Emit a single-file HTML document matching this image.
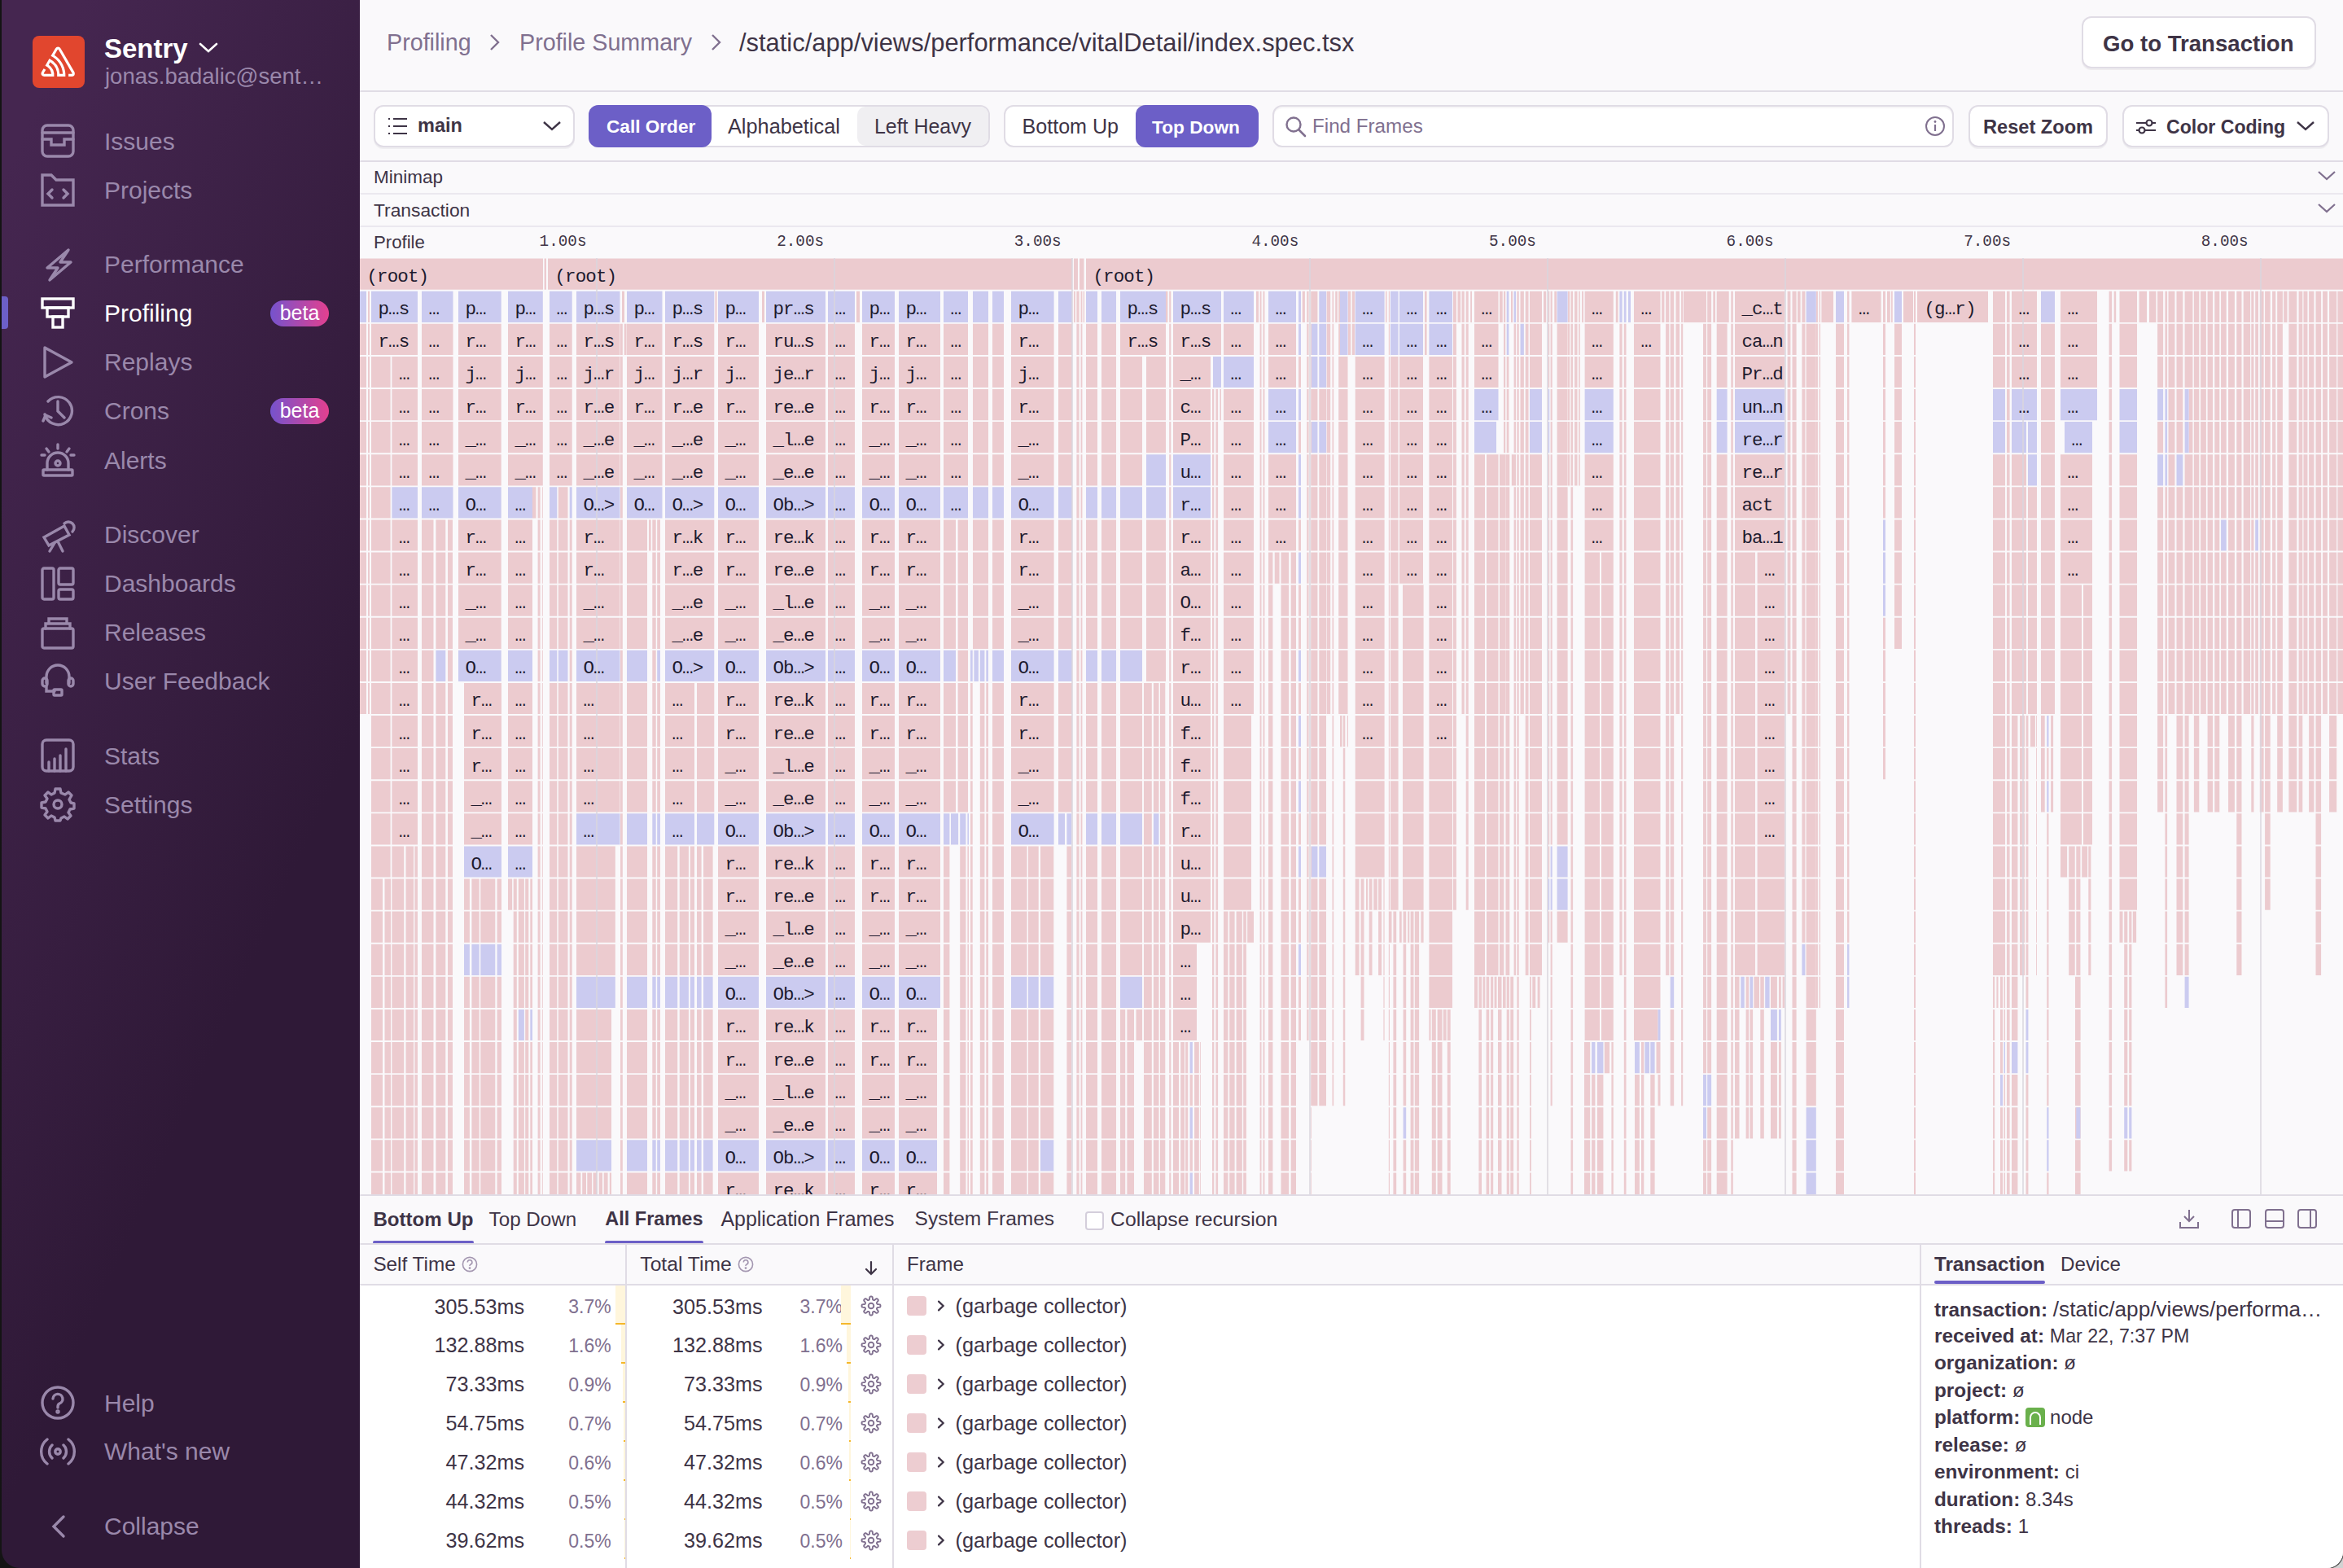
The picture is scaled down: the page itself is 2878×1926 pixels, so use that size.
<!DOCTYPE html><html><head><meta charset="utf-8"><style>
*{box-sizing:border-box;margin:0;padding:0}
html,body{width:2878px;height:1926px;overflow:hidden;background:#141414}
body{font-family:"Liberation Sans",sans-serif;position:relative}
.abs{position:absolute;white-space:nowrap}
#sb{position:absolute;left:2px;top:0;width:440px;height:1926px;border-bottom-left-radius:22px;
 background:linear-gradient(294.17deg,#2f1937 35.57%,#452650 92.42%,#452650 92.42%);overflow:hidden}
#main{position:absolute;left:442px;top:0;width:2436px;height:1926px;background:#faf9fb;border-bottom-right-radius:20px;overflow:hidden;box-shadow:1px 1px 0 0 #555}
.nav{position:absolute;left:126px;font-size:30px;color:#9a88ab;line-height:1}
.ico{position:absolute;left:47px;width:44px;height:44px;overflow:visible}
.beta{position:absolute;left:330px;width:72px;height:32px;border-radius:16px;background:linear-gradient(90deg,#7553cd,#e3408f);color:#fff;font-size:25px;text-align:center;line-height:31px}
.btn{position:absolute;top:129px;height:52px;border:2px solid #e0dce5;border-radius:12px;background:#fff}
.t{position:absolute;white-space:nowrap;line-height:1}
</style></head><body><div id="sb"><div class="abs" style="left:38px;top:44px;width:64px;height:64px;border-radius:8px;background:#e1462e"></div><svg class="abs" style="left:38px;top:44px" width="64" height="64" viewBox="0 0 64 64"><g transform="translate(10.6 13.6) scale(0.825)"><path fill="#fff" d="M29,2.26a4.67,4.67,0,0,0-8,0L14.42,13.53A32.21,32.21,0,0,1,32.17,40.19H27.55A27.68,27.68,0,0,0,12.09,17.47L6,28a15.92,15.92,0,0,1,9.23,12.17H4.62A.76.76,0,0,1,4,39.06l2.94-5a10.74,10.74,0,0,0-3.36-1.9l-2.91,5a4.54,4.54,0,0,0,1.69,6.24A4.66,4.66,0,0,0,4.62,44H19.15a19.4,19.4,0,0,0-8-17.31l2.31-4A23.87,23.87,0,0,1,23.76,44H36.07a35.88,35.88,0,0,0-16.41-31.8l4.67-8a.77.77,0,0,1,1.05-.27c.53.29,20.29,34.77,20.66,35.17a.76.76,0,0,1-.68,1.13H40.6q.09,1.910,0,3.81h4.78A4.59,4.59,0,0,0,50,39.43a4.49,4.49,0,0,0-.62-2.28Z"/></g></svg><div class="t" style="left:126px;top:42.8px;font-size:33px;font-weight:700;color:#fff">Sentry</div><svg class="abs" style="left:242px;top:52px" width="24" height="14" viewBox="0 0 24 14"><path d="M2 2 L12 11 L22 2" fill="none" stroke="#fff" stroke-width="2.6" stroke-linecap="round"/></svg><div class="t" style="left:127px;top:80px;font-size:27.5px;color:#9a88ab">jonas.badalic@sent…</div><div class="nav" style="top:159.0px;color:#9a88ab">Issues</div><svg class="ico" style="top:151.4px" viewBox="0 0 44 44" fill="none" stroke="#9a88ab" stroke-width="3.4" stroke-linecap="round"><rect x="3" y="3" width="38" height="38" rx="6"/><path d="M3 12 H41 M3 20 H14 V27 H30 V20 H41"/></svg><div class="nav" style="top:219.0px;color:#9a88ab">Projects</div><svg class="ico" style="top:211.4px" viewBox="0 0 44 44" fill="none" stroke="#9a88ab" stroke-width="3.4" stroke-linecap="round"><path d="M3 4 H14 L20 10 H41 V41 H3 Z"/><path d="M15 22 L10 27 L15 32 M29 22 L34 27 L29 32"/></svg><div class="nav" style="top:310.2px;color:#9a88ab">Performance</div><svg class="ico" style="top:302.6px" viewBox="0 0 44 44" fill="none" stroke="#9a88ab" stroke-width="3.4" stroke-linecap="round"><path d="M35 4 L9 26 L22 26 L12 41 L38 19 L25 19 Z" stroke-linejoin="round"/></svg><div class="nav" style="top:370.4px;color:#fff">Profiling</div><svg class="ico" style="top:362.8px" viewBox="0 0 44 44" fill="none" stroke="#fff" stroke-width="3.4" stroke-linecap="round"><rect x="3" y="4" width="38" height="11"/><rect x="9" y="15" width="26" height="11"/><rect x="16" y="26" width="12" height="13"/></svg><div class="beta" style="top:368.8px">beta</div><div class="nav" style="top:430.2px;color:#9a88ab">Replays</div><svg class="ico" style="top:422.6px" viewBox="0 0 44 44" fill="none" stroke="#9a88ab" stroke-width="3.4" stroke-linecap="round"><path d="M6 4 L39 22 L6 40 Z" stroke-linejoin="round"/></svg><div class="nav" style="top:490.3px;color:#9a88ab">Crons</div><svg class="ico" style="top:482.7px" viewBox="0 0 44 44" fill="none" stroke="#9a88ab" stroke-width="3.4" stroke-linecap="round"><path d="M6 26 A17 17 0 1 0 10 10"/><path d="M4 34 L7 27 L14 30"/><path d="M22 10 V22 L30 30"/></svg><div class="beta" style="top:488.7px">beta</div><div class="nav" style="top:550.6px;color:#9a88ab">Alerts</div><svg class="ico" style="top:543.0px" viewBox="0 0 44 44" fill="none" stroke="#9a88ab" stroke-width="3.4" stroke-linecap="round"><rect x="4" y="34" width="36" height="7" rx="1"/><path d="M9 34 V26 A13 13 0 0 1 35 26 V34"/><circle cx="22" cy="26" r="3"/><path d="M22 3 V8 M8 8 L11 12 M36 8 L33 12 M2 16 H6 M38 16 H42"/></svg><div class="nav" style="top:642.1px;color:#9a88ab">Discover</div><svg class="ico" style="top:634.5px" viewBox="0 0 44 44" fill="none" stroke="#9a88ab" stroke-width="3.4" stroke-linecap="round"><path d="M5 25 L30 11 L36 22 L11 35 Z"/><path d="M30 8 A6 6 0 0 1 40 18"/><path d="M18 32 L12 42 M22 30 L28 42"/></svg><div class="nav" style="top:702.1px;color:#9a88ab">Dashboards</div><svg class="ico" style="top:694.5px" viewBox="0 0 44 44" fill="none" stroke="#9a88ab" stroke-width="3.4" stroke-linecap="round"><rect x="3" y="3" width="14" height="38" rx="2"/><rect x="23" y="3" width="18" height="20" rx="2"/><rect x="23" y="29" width="18" height="12" rx="2"/></svg><div class="nav" style="top:762.3px;color:#9a88ab">Releases</div><svg class="ico" style="top:754.7px" viewBox="0 0 44 44" fill="none" stroke="#9a88ab" stroke-width="3.4" stroke-linecap="round"><rect x="3" y="17" width="38" height="24" rx="2"/><path d="M7 17 V11 H37 V17 M11 11 V5 H33 V11"/></svg><div class="nav" style="top:822.4px;color:#9a88ab">User Feedback</div><svg class="ico" style="top:814.8px" viewBox="0 0 44 44" fill="none" stroke="#9a88ab" stroke-width="3.4" stroke-linecap="round"><path d="M8 24 V16 A14 14 0 0 1 36 16 V24"/><rect x="3" y="18" width="6" height="10" rx="3"/><rect x="35" y="18" width="6" height="10" rx="3"/><path d="M8 28 V34 H18"/><rect x="17" y="32" width="10" height="7" rx="1"/></svg><div class="nav" style="top:913.5px;color:#9a88ab">Stats</div><svg class="ico" style="top:905.9px" viewBox="0 0 44 44" fill="none" stroke="#9a88ab" stroke-width="3.4" stroke-linecap="round"><rect x="3" y="3" width="38" height="38" rx="5"/><path d="M11 41 V30 M18 41 V26 M25 41 V22 M32 41 V14"/></svg><div class="nav" style="top:973.5px;color:#9a88ab">Settings</div><svg class="ico" style="top:965.9px" viewBox="0 0 44 44" fill="none" stroke="#9a88ab" stroke-width="3.4" stroke-linecap="round"><circle cx="22" cy="22" r="5"/><path d="M19 3 H25 L26 8 L31 10 L35 7 L39 11 L36 16 L38 20 L42 21 V27 L37 28 L35 32 L38 36 L34 40 L30 37 L26 39 L25 42 H19 L18 38 L14 36 L10 39 L6 35 L9 31 L7 27 L2 26 V20 L7 19 L9 15 L6 11 L10 7 L14 10 L18 8 Z" stroke-linejoin="round"/></svg><div class="nav" style="top:1708.6px;color:#9a88ab">Help</div><svg class="ico" style="top:1701.0px" viewBox="0 0 44 44" fill="none" stroke="#9a88ab" stroke-width="3.4" stroke-linecap="round"><circle cx="22" cy="22" r="19"/><path d="M16 17 A6 6 0 1 1 24 23 Q22 24 22 27 V28"/><circle cx="22" cy="33" r="1" fill="#9a88ab"/></svg><div class="nav" style="top:1768.2px;color:#9a88ab">What's new</div><svg class="ico" style="top:1760.6px" viewBox="0 0 44 44" fill="none" stroke="#9a88ab" stroke-width="3.4" stroke-linecap="round"><circle cx="22" cy="22" r="3.2"/><path d="M15 14 A11 11 0 0 0 15 30 M29 14 A11 11 0 0 1 29 30 M9 7 A19 19 0 0 0 9 37 M35 7 A19 19 0 0 1 35 37"/></svg><div class="nav" style="top:1860.4px;color:#9a88ab">Collapse</div><svg class="ico" style="top:1852.8px" viewBox="0 0 44 44" fill="none" stroke="#9a88ab" stroke-width="3.4" stroke-linecap="round"><path d="M29 10 L17 22 L29 34"/></svg><div class="abs" style="left:0px;top:364px;width:8px;height:40px;border-radius:0 4px 4px 0;background:#6c5fc7"></div></div><div class="abs" style="left:2840px;top:1880px;width:38px;height:46px;background:#d2d2d2"></div><div id="main"><div class="t" style="left:33px;top:38px;font-size:28.7px;color:#80708f">Profiling</div><svg class="abs" style="left:158px;top:40px" width="16" height="24" viewBox="0 0 16 24"><path d="M3 3 L12 12 L3 21" fill="none" stroke="#80708f" stroke-width="2.4"/></svg><div class="t" style="left:196px;top:38px;font-size:28.7px;color:#80708f">Profile Summary</div><svg class="abs" style="left:430px;top:40px" width="16" height="24" viewBox="0 0 16 24"><path d="M3 3 L12 12 L3 21" fill="none" stroke="#80708f" stroke-width="2.4"/></svg><div class="t" style="left:466px;top:38px;font-size:30.9px;color:#3e3446">/static/app/views/performance/vitalDetail/index.spec.tsx</div><div class="btn" style="left:2115px;top:20px;width:288px;height:64px;border-radius:12px;box-shadow:0 2px 0 rgba(43,34,51,.06)"></div><div class="t" style="left:2141px;top:40px;font-size:27.6px;font-weight:700;color:#3e3446">Go to Transaction</div><div class="abs" style="left:0;top:111px;width:2436px;height:2px;background:#e0dce5"></div><div class="btn" style="left:17px;width:247px;box-shadow:0 2px 0 rgba(43,34,51,.05)"></div><svg class="abs" style="left:34px;top:143px" width="26" height="24" viewBox="0 0 26 24"><path d="M7 3 H24 M7 12 H24 M7 21 H24" stroke="#3e3446" stroke-width="2.2"/><path d="M1 3 H3 M1 12 H3 M1 21 H3" stroke="#3e3446" stroke-width="2.2"/></svg><div class="t" style="left:71px;top:143px;font-size:23.5px;font-weight:700;color:#3e3446">main</div><svg class="abs" style="left:224px;top:148px" width="24" height="14" viewBox="0 0 24 14"><path d="M2 2 L12 11 L22 2" fill="none" stroke="#3e3446" stroke-width="2.4"/></svg><div class="btn" style="left:281px;width:493px"></div><div class="abs" style="left:611px;top:131px;width:161px;height:48px;background:#f0eff2;border-radius:10px"></div><div class="abs" style="left:281px;top:129px;width:151px;height:52px;background:#6c5fc7;border-radius:12px"></div><div class="t" style="left:303px;top:145px;font-size:22.6px;font-weight:700;color:#fff">Call Order</div><div class="t" style="left:452px;top:143px;font-size:25.3px;color:#3e3446">Alphabetical</div><div class="t" style="left:632px;top:143px;font-size:24.9px;color:#3e3446">Left Heavy</div><div class="btn" style="left:791px;width:313px"></div><div class="abs" style="left:953px;top:129px;width:151px;height:52px;background:#6c5fc7;border-radius:12px"></div><div class="t" style="left:813.5px;top:143px;font-size:25.1px;color:#3e3446">Bottom Up</div><div class="t" style="left:973px;top:145px;font-size:22.7px;font-weight:700;color:#fff">Top Down</div><div class="btn" style="left:1121px;width:837px;box-shadow:inset 0 2px 1px rgba(43,34,51,.04)"></div><svg class="abs" style="left:1136px;top:142px" width="28" height="28" viewBox="0 0 28 28"><circle cx="11" cy="11" r="8.5" fill="none" stroke="#80708f" stroke-width="2.4"/><path d="M17.5 17.5 L25 25" stroke="#80708f" stroke-width="2.6" stroke-linecap="round"/></svg><div class="t" style="left:1170px;top:143px;font-size:24.2px;color:#80708f">Find Frames</div><svg class="abs" style="left:1922px;top:142px" width="26" height="26" viewBox="0 0 26 26"><circle cx="13" cy="13" r="11" fill="none" stroke="#80708f" stroke-width="2"/><path d="M13 11 V19" stroke="#80708f" stroke-width="2.2"/><circle cx="13" cy="7.5" r="1.4" fill="#80708f"/></svg><div class="btn" style="left:1976px;width:171px;box-shadow:0 2px 0 rgba(43,34,51,.05)"></div><div class="t" style="left:1994px;top:145px;font-size:23.6px;font-weight:700;color:#3e3446">Reset Zoom</div><div class="btn" style="left:2165px;width:254px;box-shadow:0 2px 0 rgba(43,34,51,.05)"></div><svg class="abs" style="left:2180px;top:143px" width="28" height="24" viewBox="0 0 28 24"><path d="M2 8 H26 M2 17 H26" stroke="#3e3446" stroke-width="2.2"/><circle cx="18" cy="8" r="3.5" fill="#fff" stroke="#3e3446" stroke-width="2.2"/><circle cx="9" cy="17" r="3.5" fill="#fff" stroke="#3e3446" stroke-width="2.2"/></svg><div class="t" style="left:2219px;top:145px;font-size:23.1px;font-weight:700;color:#3e3446">Color Coding</div><svg class="abs" style="left:2378px;top:148px" width="24" height="14" viewBox="0 0 24 14"><path d="M2 2 L12 11 L22 2" fill="none" stroke="#3e3446" stroke-width="2.4"/></svg><div class="abs" style="left:0;top:197px;width:2436px;height:2px;background:#e0dce5"></div><div class="t" style="left:17px;top:207px;font-size:22.5px;color:#3e3446">Minimap</div><div class="abs" style="left:0;top:237px;width:2436px;height:2px;background:#ebe8ef"></div><div class="t" style="left:17px;top:247px;font-size:22.8px;color:#3e3446">Transaction</div><div class="abs" style="left:0;top:277px;width:2436px;height:2px;background:#ebe8ef"></div><svg class="abs" style="left:2404px;top:209px" width="24" height="14" viewBox="0 0 24 14"><path d="M2 2 L12 11 L22 2" fill="none" stroke="#80708f" stroke-width="2.2"/></svg><svg class="abs" style="left:2404px;top:249px" width="24" height="14" viewBox="0 0 24 14"><path d="M2 2 L12 11 L22 2" fill="none" stroke="#80708f" stroke-width="2.2"/></svg><div class="t" style="left:17px;top:287px;font-size:22.2px;color:#3e3446">Profile</div><div class="t" style="left:220.6px;top:288px;font-family:'Liberation Mono',monospace;font-size:19.3px;color:#3e3446">1.00s</div><div class="t" style="left:512.2px;top:288px;font-family:'Liberation Mono',monospace;font-size:19.3px;color:#3e3446">2.00s</div><div class="t" style="left:803.8px;top:288px;font-family:'Liberation Mono',monospace;font-size:19.3px;color:#3e3446">3.00s</div><div class="t" style="left:1095.4px;top:288px;font-family:'Liberation Mono',monospace;font-size:19.3px;color:#3e3446">4.00s</div><div class="t" style="left:1387.0px;top:288px;font-family:'Liberation Mono',monospace;font-size:19.3px;color:#3e3446">5.00s</div><div class="t" style="left:1678.6px;top:288px;font-family:'Liberation Mono',monospace;font-size:19.3px;color:#3e3446">6.00s</div><div class="t" style="left:1970.2px;top:288px;font-family:'Liberation Mono',monospace;font-size:19.3px;color:#3e3446">7.00s</div><div class="t" style="left:2261.8px;top:288px;font-family:'Liberation Mono',monospace;font-size:19.3px;color:#3e3446">8.00s</div><svg class="abs" style="left:0;top:0" width="2436" height="1926" viewBox="442 0 2436 1926"><path fill="#eccbcf" d="M442.0 317.6h225.0v38.2h-225.0zM668.6 317.6h2.4v38.2h-2.4zM673.0 317.6h644.0v38.2h-644.0zM1319.0 317.6h5.0v38.2h-5.0zM1326.0 317.6h5.5v38.2h-5.5zM1334.0 317.6h1544.0v38.2h-1544.0zM442.0 397.8h8.0v38.2h-8.0zM442.0 437.9h8.0v38.2h-8.0zM442.0 478.0h8.0v38.2h-8.0zM442.0 518.1h8.0v38.2h-8.0zM442.0 558.2h8.0v38.2h-8.0zM442.0 598.3h8.0v38.2h-8.0zM442.0 638.4h8.0v38.2h-8.0zM442.0 678.5h8.0v38.2h-8.0zM442.0 718.6h8.0v38.2h-8.0zM442.0 758.7h8.0v38.2h-8.0zM442.0 798.8h8.0v38.2h-8.0zM442.0 838.9h8.0v38.2h-8.0zM452.0 357.7h2.0v38.2h-2.0zM452.0 397.8h2.0v38.2h-2.0zM452.0 437.9h2.0v38.2h-2.0zM452.0 478.0h2.0v38.2h-2.0zM452.0 518.1h2.0v38.2h-2.0zM452.0 558.2h2.0v38.2h-2.0zM452.0 598.3h2.0v38.2h-2.0zM452.0 638.4h2.0v38.2h-2.0zM452.0 678.5h2.0v38.2h-2.0zM452.0 718.6h2.0v38.2h-2.0zM452.0 758.7h2.0v38.2h-2.0zM452.0 798.8h2.0v38.2h-2.0zM452.0 838.9h2.0v38.2h-2.0zM456.0 397.8h57.0v38.2h-57.0zM456.0 437.9h23.6v38.2h-23.6zM456.0 478.0h23.6v38.2h-23.6zM456.0 518.1h23.6v38.2h-23.6zM456.0 558.2h23.6v38.2h-23.6zM456.0 598.3h23.6v38.2h-23.6zM456.0 638.4h23.6v38.2h-23.6zM456.0 678.5h23.6v38.2h-23.6zM456.0 718.6h23.6v38.2h-23.6zM456.0 758.7h23.6v38.2h-23.6zM456.0 798.8h23.6v38.2h-23.6zM456.0 838.9h23.6v38.2h-23.6zM456.0 879.0h23.6v38.2h-23.6zM456.0 919.1h23.6v38.2h-23.6zM456.0 959.2h23.6v38.2h-23.6zM456.0 999.3h23.6v38.2h-23.6zM456.0 1039.4h23.6v38.2h-23.6zM456.0 1079.5h14.0v38.2h-14.0zM456.0 1119.6h14.0v38.2h-14.0zM456.0 1159.7h14.0v38.2h-14.0zM456.0 1199.8h14.0v38.2h-14.0zM456.0 1239.9h14.0v38.2h-14.0zM456.0 1280.0h14.0v38.2h-14.0zM456.0 1320.1h14.0v38.2h-14.0zM456.0 1360.2h14.0v38.2h-14.0zM456.0 1400.3h14.0v38.2h-14.0zM456.0 1440.4h14.0v26.6h-14.0zM472.5 1079.5h7.5v38.2h-7.5zM472.5 1119.6h7.5v38.2h-7.5zM472.5 1159.7h7.5v38.2h-7.5zM472.5 1199.8h7.5v38.2h-7.5zM472.5 1239.9h7.5v38.2h-7.5zM472.5 1280.0h7.5v38.2h-7.5zM472.5 1320.1h7.5v38.2h-7.5zM472.5 1360.2h7.5v38.2h-7.5zM472.5 1400.3h7.5v38.2h-7.5zM472.5 1440.4h7.5v26.6h-7.5zM481.4 437.9h31.6v38.2h-31.6zM481.4 478.0h31.6v38.2h-31.6zM481.4 518.1h31.6v38.2h-31.6zM481.4 558.2h31.6v38.2h-31.6zM481.4 638.4h31.6v38.2h-31.6zM481.4 678.5h31.6v38.2h-31.6zM481.4 718.6h31.6v38.2h-31.6zM481.4 758.7h31.6v38.2h-31.6zM481.4 798.8h31.6v38.2h-31.6zM481.4 838.9h31.6v38.2h-31.6zM481.4 879.0h31.6v38.2h-31.6zM481.4 919.1h31.6v38.2h-31.6zM481.4 959.2h31.6v38.2h-31.6zM481.4 999.3h31.6v38.2h-31.6zM481.4 1039.4h14.8v38.2h-14.8zM481.4 1079.5h14.8v38.2h-14.8zM481.4 1119.6h14.8v38.2h-14.8zM481.4 1159.7h14.8v38.2h-14.8zM481.4 1199.8h14.8v38.2h-14.8zM481.4 1239.9h14.8v38.2h-14.8zM481.4 1280.0h14.8v38.2h-14.8zM481.4 1320.1h14.8v38.2h-14.8zM481.4 1360.2h14.8v38.2h-14.8zM481.4 1400.3h14.8v38.2h-14.8zM481.4 1440.4h14.8v26.6h-14.8zM498.5 1039.4h9.6v38.2h-9.6zM498.5 1079.5h9.6v38.2h-9.6zM498.5 1119.6h9.6v38.2h-9.6zM498.5 1159.7h9.6v38.2h-9.6zM498.5 1199.8h9.6v38.2h-9.6zM498.5 1239.9h9.6v38.2h-9.6zM498.5 1280.0h9.6v38.2h-9.6zM498.5 1320.1h9.6v38.2h-9.6zM498.5 1360.2h9.6v38.2h-9.6zM498.5 1400.3h9.6v38.2h-9.6zM498.5 1440.4h9.6v26.6h-9.6zM509.4 1039.4h3.6v38.2h-3.6zM509.4 1079.5h3.6v38.2h-3.6zM509.4 1119.6h3.6v38.2h-3.6zM509.4 1159.7h3.6v38.2h-3.6zM509.4 1199.8h3.6v38.2h-3.6zM509.4 1239.9h3.6v38.2h-3.6zM509.4 1280.0h3.6v38.2h-3.6zM509.4 1320.1h3.6v38.2h-3.6zM509.4 1360.2h3.6v38.2h-3.6zM509.4 1400.3h3.6v38.2h-3.6zM509.4 1440.4h3.6v26.6h-3.6zM518.0 397.8h38.5v38.2h-38.5zM518.0 437.9h38.5v38.2h-38.5zM518.0 478.0h38.5v38.2h-38.5zM518.0 518.1h38.5v38.2h-38.5zM518.0 558.2h38.5v38.2h-38.5zM518.0 638.4h14.5v38.2h-14.5zM518.0 678.5h14.5v38.2h-14.5zM518.0 718.6h14.5v38.2h-14.5zM518.0 758.7h14.5v38.2h-14.5zM518.0 798.8h14.5v38.2h-14.5zM518.0 838.9h14.5v38.2h-14.5zM518.0 879.0h14.5v38.2h-14.5zM518.0 919.1h14.5v38.2h-14.5zM518.0 959.2h14.5v38.2h-14.5zM518.0 999.3h14.5v38.2h-14.5zM518.0 1039.4h14.5v38.2h-14.5zM518.0 1079.5h14.5v38.2h-14.5zM518.0 1119.6h14.5v38.2h-14.5zM518.0 1159.7h14.5v38.2h-14.5zM518.0 1199.8h14.5v38.2h-14.5zM518.0 1239.9h14.5v38.2h-14.5zM518.0 1280.0h14.5v38.2h-14.5zM518.0 1320.1h14.5v38.2h-14.5zM518.0 1360.2h14.5v38.2h-14.5zM518.0 1400.3h14.5v38.2h-14.5zM518.0 1440.4h14.5v26.6h-14.5zM535.4 638.4h11.9v38.2h-11.9zM535.4 678.5h11.9v38.2h-11.9zM535.4 718.6h11.9v38.2h-11.9zM535.4 758.7h11.9v38.2h-11.9zM535.4 838.9h11.9v38.2h-11.9zM535.4 879.0h11.9v38.2h-11.9zM535.4 919.1h11.9v38.2h-11.9zM535.4 959.2h11.9v38.2h-11.9zM535.4 999.3h11.9v38.2h-11.9zM535.4 1039.4h11.9v38.2h-11.9zM535.4 1079.5h11.9v38.2h-11.9zM535.4 1119.6h11.9v38.2h-11.9zM535.4 1159.7h11.9v38.2h-11.9zM535.4 1199.8h11.9v38.2h-11.9zM535.4 1239.9h11.9v38.2h-11.9zM535.4 1280.0h11.9v38.2h-11.9zM535.4 1320.1h11.9v38.2h-11.9zM535.4 1360.2h11.9v38.2h-11.9zM535.4 1400.3h11.9v38.2h-11.9zM535.4 1440.4h11.9v26.6h-11.9zM550.0 638.4h6.0v38.2h-6.0zM550.0 678.5h6.0v38.2h-6.0zM550.0 718.6h6.0v38.2h-6.0zM550.0 758.7h6.0v38.2h-6.0zM550.0 798.8h6.0v38.2h-6.0zM550.0 838.9h6.0v38.2h-6.0zM550.0 879.0h6.0v38.2h-6.0zM550.0 919.1h6.0v38.2h-6.0zM550.0 959.2h6.0v38.2h-6.0zM550.0 999.3h6.0v38.2h-6.0zM550.0 1039.4h6.0v38.2h-6.0zM550.0 1079.5h6.0v38.2h-6.0zM550.0 1119.6h6.0v38.2h-6.0zM550.0 1159.7h6.0v38.2h-6.0zM550.0 1199.8h6.0v38.2h-6.0zM550.0 1239.9h6.0v38.2h-6.0zM550.0 1280.0h6.0v38.2h-6.0zM550.0 1320.1h6.0v38.2h-6.0zM550.0 1360.2h6.0v38.2h-6.0zM550.0 1400.3h6.0v38.2h-6.0zM550.0 1440.4h6.0v26.6h-6.0zM563.0 397.8h52.7v38.2h-52.7zM563.0 437.9h52.7v38.2h-52.7zM563.0 478.0h52.7v38.2h-52.7zM563.0 518.1h52.7v38.2h-52.7zM563.0 558.2h52.7v38.2h-52.7zM563.0 638.4h52.7v38.2h-52.7zM563.0 678.5h52.7v38.2h-52.7zM563.0 718.6h52.7v38.2h-52.7zM563.0 758.7h52.7v38.2h-52.7zM570.0 838.9h46.0v38.2h-46.0zM570.0 879.0h46.0v38.2h-46.0zM570.0 919.1h46.0v38.2h-46.0zM570.0 959.2h46.0v38.2h-46.0zM570.0 999.3h46.0v38.2h-46.0zM570.0 1079.5h6.9v38.2h-6.9zM570.0 1119.6h6.9v38.2h-6.9zM570.0 1199.8h6.9v38.2h-6.9zM570.0 1239.9h6.9v38.2h-6.9zM570.0 1280.0h6.9v38.2h-6.9zM570.0 1320.1h6.9v38.2h-6.9zM570.0 1360.2h6.9v38.2h-6.9zM570.0 1400.3h6.9v38.2h-6.9zM570.0 1440.4h6.9v26.6h-6.9zM579.4 1079.5h9.3v38.2h-9.3zM579.4 1119.6h9.3v38.2h-9.3zM579.4 1199.8h9.3v38.2h-9.3zM579.4 1239.9h9.3v38.2h-9.3zM579.4 1280.0h9.3v38.2h-9.3zM579.4 1320.1h9.3v38.2h-9.3zM579.4 1360.2h9.3v38.2h-9.3zM579.4 1400.3h9.3v38.2h-9.3zM579.4 1440.4h9.3v26.6h-9.3zM590.3 1079.5h18.0v38.2h-18.0zM590.3 1119.6h18.0v38.2h-18.0zM590.3 1199.8h18.0v38.2h-18.0zM590.3 1239.9h18.0v38.2h-18.0zM590.3 1280.0h18.0v38.2h-18.0zM590.3 1320.1h18.0v38.2h-18.0zM590.3 1360.2h18.0v38.2h-18.0zM590.3 1400.3h18.0v38.2h-18.0zM590.3 1440.4h18.0v26.6h-18.0zM610.6 1079.5h5.4v38.2h-5.4zM610.6 1119.6h5.4v38.2h-5.4zM610.6 1199.8h5.4v38.2h-5.4zM610.6 1239.9h5.4v38.2h-5.4zM610.6 1280.0h5.4v38.2h-5.4zM610.6 1320.1h5.4v38.2h-5.4zM610.6 1360.2h5.4v38.2h-5.4zM610.6 1400.3h5.4v38.2h-5.4zM610.6 1440.4h5.4v26.6h-5.4zM624.0 397.8h42.8v38.2h-42.8zM624.0 437.9h42.8v38.2h-42.8zM624.0 478.0h42.8v38.2h-42.8zM624.0 518.1h42.8v38.2h-42.8zM624.0 558.2h42.8v38.2h-42.8zM624.0 638.4h30.0v38.2h-30.0zM624.0 678.5h30.0v38.2h-30.0zM624.0 718.6h30.0v38.2h-30.0zM624.0 758.7h30.0v38.2h-30.0zM624.0 838.9h30.0v38.2h-30.0zM624.0 879.0h30.0v38.2h-30.0zM624.0 919.1h30.0v38.2h-30.0zM624.0 959.2h30.0v38.2h-30.0zM624.0 999.3h30.0v38.2h-30.0zM654.0 598.3h4.4v38.2h-4.4zM660.6 598.3h3.0v38.2h-3.0zM660.6 638.4h3.0v38.2h-3.0zM660.6 678.5h3.0v38.2h-3.0zM660.6 718.6h3.0v38.2h-3.0zM660.6 758.7h3.0v38.2h-3.0zM660.6 798.8h3.0v38.2h-3.0zM660.6 838.9h3.0v38.2h-3.0zM660.6 879.0h3.0v38.2h-3.0zM660.6 919.1h3.0v38.2h-3.0zM660.6 959.2h3.0v38.2h-3.0zM660.6 999.3h3.0v38.2h-3.0zM660.6 1039.4h3.0v38.2h-3.0zM660.6 1079.5h3.0v38.2h-3.0zM660.6 1119.6h3.0v38.2h-3.0zM660.6 1159.7h3.0v38.2h-3.0zM660.6 1199.8h3.0v38.2h-3.0zM660.6 1239.9h3.0v38.2h-3.0zM660.6 1280.0h3.0v38.2h-3.0zM660.6 1320.1h3.0v38.2h-3.0zM660.6 1360.2h3.0v38.2h-3.0zM660.6 1400.3h3.0v38.2h-3.0zM660.6 1440.4h3.0v26.6h-3.0zM665.9 598.3h0.9v38.2h-0.9zM665.9 638.4h0.9v38.2h-0.9zM665.9 678.5h0.9v38.2h-0.9zM665.9 718.6h0.9v38.2h-0.9zM665.9 758.7h0.9v38.2h-0.9zM665.9 798.8h0.9v38.2h-0.9zM665.9 838.9h0.9v38.2h-0.9zM665.9 879.0h0.9v38.2h-0.9zM665.9 919.1h0.9v38.2h-0.9zM665.9 959.2h0.9v38.2h-0.9zM665.9 999.3h0.9v38.2h-0.9zM665.9 1039.4h0.9v38.2h-0.9zM665.9 1079.5h0.9v38.2h-0.9zM665.9 1119.6h0.9v38.2h-0.9zM665.9 1159.7h0.9v38.2h-0.9zM665.9 1199.8h0.9v38.2h-0.9zM665.9 1239.9h0.9v38.2h-0.9zM665.9 1280.0h0.9v38.2h-0.9zM665.9 1320.1h0.9v38.2h-0.9zM665.9 1360.2h0.9v38.2h-0.9zM665.9 1400.3h0.9v38.2h-0.9zM665.9 1440.4h0.9v26.6h-0.9zM624.0 1079.5h5.1v38.2h-5.1zM630.7 1079.5h4.1v38.2h-4.1zM630.7 1119.6h4.1v38.2h-4.1zM630.7 1159.7h4.1v38.2h-4.1zM630.7 1199.8h4.1v38.2h-4.1zM630.7 1239.9h4.1v38.2h-4.1zM630.7 1280.0h4.1v38.2h-4.1zM630.7 1320.1h4.1v38.2h-4.1zM630.7 1360.2h4.1v38.2h-4.1zM630.7 1400.3h4.1v38.2h-4.1zM630.7 1440.4h4.1v26.6h-4.1zM636.8 1079.5h7.1v38.2h-7.1zM636.8 1119.6h7.1v38.2h-7.1zM636.8 1159.7h7.1v38.2h-7.1zM636.8 1199.8h7.1v38.2h-7.1zM636.8 1280.0h7.1v38.2h-7.1zM636.8 1320.1h7.1v38.2h-7.1zM636.8 1360.2h7.1v38.2h-7.1zM636.8 1400.3h7.1v38.2h-7.1zM636.8 1440.4h7.1v26.6h-7.1zM645.2 1079.5h4.1v38.2h-4.1zM645.2 1119.6h4.1v38.2h-4.1zM645.2 1159.7h4.1v38.2h-4.1zM645.2 1199.8h4.1v38.2h-4.1zM645.2 1239.9h4.1v38.2h-4.1zM645.2 1280.0h4.1v38.2h-4.1zM645.2 1320.1h4.1v38.2h-4.1zM645.2 1360.2h4.1v38.2h-4.1zM645.2 1400.3h4.1v38.2h-4.1zM645.2 1440.4h4.1v26.6h-4.1zM651.3 1079.5h2.7v38.2h-2.7zM651.3 1119.6h2.7v38.2h-2.7zM651.3 1159.7h2.7v38.2h-2.7zM651.3 1199.8h2.7v38.2h-2.7zM651.3 1280.0h2.7v38.2h-2.7zM651.3 1320.1h2.7v38.2h-2.7zM651.3 1360.2h2.7v38.2h-2.7zM651.3 1400.3h2.7v38.2h-2.7zM651.3 1440.4h2.7v26.6h-2.7zM675.0 397.8h27.7v38.2h-27.7zM675.0 437.9h27.7v38.2h-27.7zM675.0 478.0h27.7v38.2h-27.7zM675.0 518.1h27.7v38.2h-27.7zM675.0 558.2h27.7v38.2h-27.7zM675.0 638.4h9.3v38.2h-9.3zM675.0 678.5h9.3v38.2h-9.3zM675.0 718.6h9.3v38.2h-9.3zM675.0 758.7h9.3v38.2h-9.3zM675.0 838.9h9.3v38.2h-9.3zM675.0 879.0h9.3v38.2h-9.3zM675.0 919.1h9.3v38.2h-9.3zM675.0 959.2h9.3v38.2h-9.3zM675.0 999.3h9.3v38.2h-9.3zM675.0 1039.4h9.3v38.2h-9.3zM675.0 1079.5h9.3v38.2h-9.3zM675.0 1119.6h9.3v38.2h-9.3zM675.0 1159.7h9.3v38.2h-9.3zM675.0 1199.8h9.3v38.2h-9.3zM675.0 1239.9h9.3v38.2h-9.3zM675.0 1280.0h9.3v38.2h-9.3zM675.0 1320.1h9.3v38.2h-9.3zM675.0 1360.2h9.3v38.2h-9.3zM675.0 1400.3h9.3v38.2h-9.3zM675.0 1440.4h9.3v26.6h-9.3zM685.8 598.3h11.7v38.2h-11.7zM685.8 638.4h11.7v38.2h-11.7zM685.8 678.5h11.7v38.2h-11.7zM685.8 718.6h11.7v38.2h-11.7zM685.8 758.7h11.7v38.2h-11.7zM685.8 838.9h11.7v38.2h-11.7zM685.8 879.0h11.7v38.2h-11.7zM685.8 919.1h11.7v38.2h-11.7zM685.8 959.2h11.7v38.2h-11.7zM685.8 999.3h11.7v38.2h-11.7zM685.8 1039.4h11.7v38.2h-11.7zM685.8 1079.5h11.7v38.2h-11.7zM685.8 1119.6h11.7v38.2h-11.7zM685.8 1159.7h11.7v38.2h-11.7zM685.8 1199.8h11.7v38.2h-11.7zM685.8 1239.9h11.7v38.2h-11.7zM685.8 1280.0h11.7v38.2h-11.7zM685.8 1320.1h11.7v38.2h-11.7zM685.8 1360.2h11.7v38.2h-11.7zM685.8 1400.3h11.7v38.2h-11.7zM685.8 1440.4h11.7v26.6h-11.7zM699.7 638.4h3.0v38.2h-3.0zM699.7 678.5h3.0v38.2h-3.0zM699.7 718.6h3.0v38.2h-3.0zM699.7 758.7h3.0v38.2h-3.0zM699.7 798.8h3.0v38.2h-3.0zM699.7 838.9h3.0v38.2h-3.0zM699.7 879.0h3.0v38.2h-3.0zM699.7 919.1h3.0v38.2h-3.0zM699.7 959.2h3.0v38.2h-3.0zM699.7 999.3h3.0v38.2h-3.0zM699.7 1039.4h3.0v38.2h-3.0zM699.7 1079.5h3.0v38.2h-3.0zM699.7 1119.6h3.0v38.2h-3.0zM699.7 1159.7h3.0v38.2h-3.0zM699.7 1199.8h3.0v38.2h-3.0zM699.7 1239.9h3.0v38.2h-3.0zM699.7 1280.0h3.0v38.2h-3.0zM699.7 1320.1h3.0v38.2h-3.0zM699.7 1360.2h3.0v38.2h-3.0zM699.7 1400.3h3.0v38.2h-3.0zM699.7 1440.4h3.0v26.6h-3.0zM708.0 397.8h53.5v38.2h-53.5zM708.0 437.9h53.5v38.2h-53.5zM708.0 478.0h53.5v38.2h-53.5zM708.0 518.1h53.5v38.2h-53.5zM708.0 558.2h53.5v38.2h-53.5zM708.0 638.4h53.5v38.2h-53.5zM708.0 678.5h53.5v38.2h-53.5zM708.0 718.6h53.5v38.2h-53.5zM708.0 758.7h53.5v38.2h-53.5zM708.0 838.9h53.5v38.2h-53.5zM708.0 879.0h53.5v38.2h-53.5zM708.0 919.1h53.5v38.2h-53.5zM708.0 959.2h53.5v38.2h-53.5zM708.0 1039.4h47.8v38.2h-47.8zM708.0 1079.5h47.8v38.2h-47.8zM708.0 1119.6h47.8v38.2h-47.8zM708.0 1159.7h47.8v38.2h-47.8zM708.0 1239.9h43.0v38.2h-43.0zM708.0 1280.0h43.0v38.2h-43.0zM708.0 1320.1h43.0v38.2h-43.0zM708.0 1360.2h43.0v38.2h-43.0zM708.0 1440.4h5.4v26.6h-5.4zM715.2 1440.4h4.8v26.6h-4.8zM721.3 1440.4h5.7v26.6h-5.7zM728.5 1440.4h5.1v26.6h-5.1zM735.7 1440.4h4.3v26.6h-4.3zM741.7 1440.4h4.9v26.6h-4.9zM748.8 1440.4h2.2v26.6h-2.2zM764.0 357.7h3.0v38.2h-3.0zM762.0 397.8h2.8v38.2h-2.8zM762.0 437.9h2.8v38.2h-2.8zM762.0 478.0h2.8v38.2h-2.8zM762.0 518.1h2.8v38.2h-2.8zM762.0 558.2h2.8v38.2h-2.8zM762.0 598.3h2.8v38.2h-2.8zM762.0 638.4h2.8v38.2h-2.8zM762.0 678.5h2.8v38.2h-2.8zM762.0 718.6h2.8v38.2h-2.8zM762.0 758.7h2.8v38.2h-2.8zM762.0 798.8h2.8v38.2h-2.8zM762.0 838.9h2.8v38.2h-2.8zM762.0 879.0h2.8v38.2h-2.8zM762.0 919.1h2.8v38.2h-2.8zM762.0 959.2h2.8v38.2h-2.8zM762.0 999.3h2.8v38.2h-2.8zM762.0 1039.4h2.8v38.2h-2.8zM762.0 1079.5h2.8v38.2h-2.8zM762.0 1119.6h2.8v38.2h-2.8zM762.0 1159.7h2.8v38.2h-2.8zM762.0 1199.8h2.8v38.2h-2.8zM762.0 1239.9h2.8v38.2h-2.8zM762.0 1280.0h2.8v38.2h-2.8zM762.0 1320.1h2.8v38.2h-2.8zM762.0 1360.2h2.8v38.2h-2.8zM762.0 1400.3h2.8v38.2h-2.8zM762.0 1440.4h2.8v26.6h-2.8zM766.7 397.8h2.9v38.2h-2.9zM770.0 397.8h43.5v38.2h-43.5zM770.0 437.9h43.5v38.2h-43.5zM770.0 478.0h43.5v38.2h-43.5zM770.0 518.1h43.5v38.2h-43.5zM770.0 558.2h43.5v38.2h-43.5zM770.0 638.4h25.0v38.2h-25.0zM770.0 678.5h25.0v38.2h-25.0zM770.0 718.6h25.0v38.2h-25.0zM770.0 758.7h25.0v38.2h-25.0zM770.0 838.9h25.0v38.2h-25.0zM770.0 879.0h25.0v38.2h-25.0zM770.0 919.1h25.0v38.2h-25.0zM770.0 959.2h25.0v38.2h-25.0zM770.0 1039.4h25.0v38.2h-25.0zM770.0 1079.5h25.0v38.2h-25.0zM770.0 1119.6h25.0v38.2h-25.0zM770.0 1159.7h25.0v38.2h-25.0zM770.0 1239.9h25.0v38.2h-25.0zM770.0 1280.0h25.0v38.2h-25.0zM770.0 1320.1h25.0v38.2h-25.0zM770.0 1360.2h25.0v38.2h-25.0zM770.0 1440.4h25.0v26.6h-25.0zM797.0 638.4h2.7v38.2h-2.7zM801.3 638.4h4.4v38.2h-4.4zM801.3 678.5h4.4v38.2h-4.4zM801.3 718.6h4.4v38.2h-4.4zM801.3 758.7h4.4v38.2h-4.4zM801.3 798.8h4.4v38.2h-4.4zM801.3 838.9h4.4v38.2h-4.4zM801.3 879.0h4.4v38.2h-4.4zM801.3 919.1h4.4v38.2h-4.4zM801.3 959.2h4.4v38.2h-4.4zM801.3 1039.4h4.4v38.2h-4.4zM801.3 1079.5h4.4v38.2h-4.4zM801.3 1119.6h4.4v38.2h-4.4zM801.3 1159.7h4.4v38.2h-4.4zM801.3 1239.9h4.4v38.2h-4.4zM801.3 1280.0h4.4v38.2h-4.4zM801.3 1320.1h4.4v38.2h-4.4zM801.3 1360.2h4.4v38.2h-4.4zM801.3 1440.4h4.4v26.6h-4.4zM807.2 638.4h3.8v38.2h-3.8zM807.2 678.5h3.8v38.2h-3.8zM807.2 718.6h3.8v38.2h-3.8zM807.2 758.7h3.8v38.2h-3.8zM807.2 838.9h3.8v38.2h-3.8zM807.2 879.0h3.8v38.2h-3.8zM807.2 919.1h3.8v38.2h-3.8zM807.2 959.2h3.8v38.2h-3.8zM807.2 1039.4h3.8v38.2h-3.8zM807.2 1079.5h3.8v38.2h-3.8zM807.2 1119.6h3.8v38.2h-3.8zM807.2 1159.7h3.8v38.2h-3.8zM807.2 1239.9h3.8v38.2h-3.8zM807.2 1280.0h3.8v38.2h-3.8zM807.2 1320.1h3.8v38.2h-3.8zM807.2 1360.2h3.8v38.2h-3.8zM807.2 1440.4h3.8v26.6h-3.8zM817.0 397.8h60.3v38.2h-60.3zM817.0 437.9h60.3v38.2h-60.3zM817.0 478.0h60.3v38.2h-60.3zM817.0 518.1h60.3v38.2h-60.3zM817.0 558.2h60.3v38.2h-60.3zM817.0 638.4h60.3v38.2h-60.3zM817.0 678.5h60.3v38.2h-60.3zM817.0 718.6h60.3v38.2h-60.3zM817.0 758.7h60.3v38.2h-60.3zM817.0 838.9h36.0v38.2h-36.0zM817.0 879.0h36.0v38.2h-36.0zM817.0 919.1h36.0v38.2h-36.0zM817.0 959.2h36.0v38.2h-36.0zM856.0 838.9h21.3v38.2h-21.3zM856.0 879.0h21.3v38.2h-21.3zM856.0 919.1h21.3v38.2h-21.3zM856.0 959.2h21.3v38.2h-21.3zM817.0 1039.4h15.2v38.2h-15.2zM817.0 1079.5h15.2v38.2h-15.2zM817.0 1119.6h15.2v38.2h-15.2zM817.0 1159.7h15.2v38.2h-15.2zM817.0 1239.9h15.2v38.2h-15.2zM817.0 1280.0h15.2v38.2h-15.2zM817.0 1320.1h15.2v38.2h-15.2zM817.0 1360.2h15.2v38.2h-15.2zM817.0 1440.4h15.2v26.6h-15.2zM834.7 1039.4h11.2v38.2h-11.2zM834.7 1079.5h11.2v38.2h-11.2zM834.7 1119.6h11.2v38.2h-11.2zM834.7 1159.7h11.2v38.2h-11.2zM834.7 1239.9h11.2v38.2h-11.2zM834.7 1280.0h11.2v38.2h-11.2zM834.7 1320.1h11.2v38.2h-11.2zM834.7 1360.2h11.2v38.2h-11.2zM834.7 1440.4h11.2v26.6h-11.2zM847.8 1039.4h5.2v38.2h-5.2zM847.8 1079.5h5.2v38.2h-5.2zM847.8 1119.6h5.2v38.2h-5.2zM847.8 1159.7h5.2v38.2h-5.2zM847.8 1239.9h5.2v38.2h-5.2zM847.8 1280.0h5.2v38.2h-5.2zM847.8 1320.1h5.2v38.2h-5.2zM847.8 1360.2h5.2v38.2h-5.2zM847.8 1440.4h5.2v26.6h-5.2zM856.0 1039.4h5.6v38.2h-5.6zM856.0 1079.5h5.6v38.2h-5.6zM856.0 1119.6h5.6v38.2h-5.6zM856.0 1159.7h5.6v38.2h-5.6zM856.0 1239.9h5.6v38.2h-5.6zM856.0 1280.0h5.6v38.2h-5.6zM856.0 1320.1h5.6v38.2h-5.6zM856.0 1360.2h5.6v38.2h-5.6zM856.0 1440.4h5.6v26.6h-5.6zM864.0 1039.4h11.6v38.2h-11.6zM864.0 1079.5h11.6v38.2h-11.6zM864.0 1119.6h11.6v38.2h-11.6zM864.0 1159.7h11.6v38.2h-11.6zM864.0 1239.9h11.6v38.2h-11.6zM864.0 1280.0h11.6v38.2h-11.6zM864.0 1320.1h11.6v38.2h-11.6zM864.0 1360.2h11.6v38.2h-11.6zM864.0 1440.4h11.6v26.6h-11.6zM878.5 357.7h2.0v38.2h-2.0zM882.0 397.8h50.0v38.2h-50.0zM882.0 437.9h50.0v38.2h-50.0zM882.0 478.0h50.0v38.2h-50.0zM882.0 518.1h50.0v38.2h-50.0zM882.0 558.2h50.0v38.2h-50.0zM882.0 638.4h50.0v38.2h-50.0zM882.0 678.5h50.0v38.2h-50.0zM882.0 718.6h50.0v38.2h-50.0zM882.0 758.7h50.0v38.2h-50.0zM882.0 838.9h50.0v38.2h-50.0zM882.0 879.0h50.0v38.2h-50.0zM882.0 919.1h50.0v38.2h-50.0zM882.0 959.2h50.0v38.2h-50.0zM882.0 1039.4h50.0v38.2h-50.0zM882.0 1079.5h50.0v38.2h-50.0zM882.0 1119.6h50.0v38.2h-50.0zM882.0 1159.7h50.0v38.2h-50.0zM882.0 1239.9h50.0v38.2h-50.0zM882.0 1280.0h50.0v38.2h-50.0zM882.0 1320.1h50.0v38.2h-50.0zM882.0 1360.2h50.0v38.2h-50.0zM882.0 1440.4h50.0v26.6h-50.0zM936.0 357.7h3.0v38.2h-3.0zM941.0 397.8h73.0v38.2h-73.0zM941.0 437.9h73.0v38.2h-73.0zM941.0 478.0h73.0v38.2h-73.0zM941.0 518.1h73.0v38.2h-73.0zM941.0 558.2h73.0v38.2h-73.0zM941.0 638.4h73.0v38.2h-73.0zM941.0 678.5h73.0v38.2h-73.0zM941.0 718.6h73.0v38.2h-73.0zM941.0 758.7h73.0v38.2h-73.0zM941.0 838.9h73.0v38.2h-73.0zM941.0 879.0h73.0v38.2h-73.0zM941.0 919.1h73.0v38.2h-73.0zM941.0 959.2h73.0v38.2h-73.0zM941.0 1039.4h73.0v38.2h-73.0zM941.0 1079.5h73.0v38.2h-73.0zM941.0 1119.6h73.0v38.2h-73.0zM941.0 1159.7h73.0v38.2h-73.0zM941.0 1239.9h73.0v38.2h-73.0zM941.0 1280.0h73.0v38.2h-73.0zM941.0 1320.1h73.0v38.2h-73.0zM941.0 1360.2h73.0v38.2h-73.0zM941.0 1440.4h73.0v26.6h-73.0zM1017.0 397.8h33.0v38.2h-33.0zM1017.0 437.9h33.0v38.2h-33.0zM1017.0 478.0h33.0v38.2h-33.0zM1017.0 518.1h33.0v38.2h-33.0zM1017.0 558.2h33.0v38.2h-33.0zM1017.0 638.4h33.0v38.2h-33.0zM1017.0 678.5h33.0v38.2h-33.0zM1017.0 718.6h33.0v38.2h-33.0zM1017.0 758.7h33.0v38.2h-33.0zM1017.0 838.9h33.0v38.2h-33.0zM1017.0 879.0h33.0v38.2h-33.0zM1017.0 919.1h33.0v38.2h-33.0zM1017.0 959.2h33.0v38.2h-33.0zM1017.0 1039.4h33.0v38.2h-33.0zM1017.0 1079.5h33.0v38.2h-33.0zM1017.0 1119.6h33.0v38.2h-33.0zM1017.0 1159.7h33.0v38.2h-33.0zM1017.0 1239.9h33.0v38.2h-33.0zM1017.0 1280.0h33.0v38.2h-33.0zM1017.0 1320.1h33.0v38.2h-33.0zM1017.0 1360.2h33.0v38.2h-33.0zM1017.0 1440.4h33.0v26.6h-33.0zM1052.0 357.7h4.0v38.2h-4.0zM1059.0 397.8h40.0v38.2h-40.0zM1059.0 437.9h40.0v38.2h-40.0zM1059.0 478.0h40.0v38.2h-40.0zM1059.0 518.1h40.0v38.2h-40.0zM1059.0 558.2h40.0v38.2h-40.0zM1059.0 638.4h40.0v38.2h-40.0zM1059.0 678.5h40.0v38.2h-40.0zM1059.0 718.6h40.0v38.2h-40.0zM1059.0 758.7h40.0v38.2h-40.0zM1059.0 838.9h40.0v38.2h-40.0zM1059.0 879.0h40.0v38.2h-40.0zM1059.0 919.1h40.0v38.2h-40.0zM1059.0 959.2h40.0v38.2h-40.0zM1059.0 1039.4h40.0v38.2h-40.0zM1059.0 1079.5h40.0v38.2h-40.0zM1059.0 1119.6h40.0v38.2h-40.0zM1059.0 1159.7h40.0v38.2h-40.0zM1059.0 1239.9h40.0v38.2h-40.0zM1059.0 1280.0h40.0v38.2h-40.0zM1059.0 1320.1h40.0v38.2h-40.0zM1059.0 1360.2h40.0v38.2h-40.0zM1059.0 1440.4h40.0v26.6h-40.0zM1104.0 397.8h51.0v38.2h-51.0zM1104.0 437.9h51.0v38.2h-51.0zM1104.0 478.0h51.0v38.2h-51.0zM1104.0 518.1h51.0v38.2h-51.0zM1104.0 558.2h51.0v38.2h-51.0zM1104.0 638.4h51.0v38.2h-51.0zM1104.0 678.5h51.0v38.2h-51.0zM1104.0 718.6h51.0v38.2h-51.0zM1104.0 758.7h51.0v38.2h-51.0zM1104.0 838.9h51.0v38.2h-51.0zM1104.0 879.0h51.0v38.2h-51.0zM1104.0 919.1h51.0v38.2h-51.0zM1104.0 959.2h51.0v38.2h-51.0zM1104.0 1039.4h51.0v38.2h-51.0zM1104.0 1079.5h51.0v38.2h-51.0zM1104.0 1119.6h51.0v38.2h-51.0zM1104.0 1159.7h51.0v38.2h-51.0zM1104.0 1239.9h47.0v38.2h-47.0zM1104.0 1280.0h47.0v38.2h-47.0zM1104.0 1320.1h47.0v38.2h-47.0zM1104.0 1360.2h47.0v38.2h-47.0zM1104.0 1440.4h47.0v26.6h-47.0zM1159.0 397.8h30.0v38.2h-30.0zM1159.0 437.9h30.0v38.2h-30.0zM1159.0 478.0h30.0v38.2h-30.0zM1159.0 518.1h30.0v38.2h-30.0zM1159.0 558.2h30.0v38.2h-30.0zM1159.0 638.4h15.0v38.2h-15.0zM1159.0 678.5h15.0v38.2h-15.0zM1159.0 718.6h15.0v38.2h-15.0zM1159.0 758.7h15.0v38.2h-15.0zM1159.0 838.9h15.0v38.2h-15.0zM1159.0 879.0h15.0v38.2h-15.0zM1159.0 919.1h15.0v38.2h-15.0zM1159.0 959.2h15.0v38.2h-15.0zM1176.6 638.4h12.4v38.2h-12.4zM1176.6 678.5h12.4v38.2h-12.4zM1176.6 718.6h12.4v38.2h-12.4zM1176.6 758.7h12.4v38.2h-12.4zM1176.6 798.8h12.4v38.2h-12.4zM1176.6 838.9h12.4v38.2h-12.4zM1176.6 879.0h12.4v38.2h-12.4zM1176.6 919.1h12.4v38.2h-12.4zM1176.6 959.2h12.4v38.2h-12.4zM1159.0 1039.4h7.4v38.2h-7.4zM1159.0 1079.5h7.4v38.2h-7.4zM1159.0 1119.6h7.4v38.2h-7.4zM1159.0 1159.7h7.4v38.2h-7.4zM1159.0 1199.8h7.4v38.2h-7.4zM1159.0 1239.9h7.4v38.2h-7.4zM1159.0 1280.0h7.4v38.2h-7.4zM1159.0 1320.1h7.4v38.2h-7.4zM1159.0 1360.2h7.4v38.2h-7.4zM1159.0 1400.3h7.4v38.2h-7.4zM1159.0 1440.4h7.4v26.6h-7.4zM1179.2 1039.4h7.2v38.2h-7.2zM1179.2 1079.5h7.2v38.2h-7.2zM1179.2 1119.6h7.2v38.2h-7.2zM1179.2 1159.7h7.2v38.2h-7.2zM1179.2 1199.8h7.2v38.2h-7.2zM1179.2 1239.9h7.2v38.2h-7.2zM1179.2 1280.0h7.2v38.2h-7.2zM1179.2 1320.1h7.2v38.2h-7.2zM1179.2 1360.2h7.2v38.2h-7.2zM1179.2 1400.3h7.2v38.2h-7.2zM1179.2 1440.4h7.2v26.6h-7.2zM1188.4 1039.4h1.6v38.2h-1.6zM1188.4 1079.5h1.6v38.2h-1.6zM1188.4 1119.6h1.6v38.2h-1.6zM1188.4 1159.7h1.6v38.2h-1.6zM1188.4 1199.8h1.6v38.2h-1.6zM1188.4 1239.9h1.6v38.2h-1.6zM1188.4 1280.0h1.6v38.2h-1.6zM1188.4 1320.1h1.6v38.2h-1.6zM1188.4 1360.2h1.6v38.2h-1.6zM1188.4 1400.3h1.6v38.2h-1.6zM1188.4 1440.4h1.6v26.6h-1.6zM1195.0 397.8h19.0v38.2h-19.0zM1195.0 437.9h19.0v38.2h-19.0zM1195.0 478.0h19.0v38.2h-19.0zM1195.0 518.1h19.0v38.2h-19.0zM1195.0 558.2h19.0v38.2h-19.0zM1195.0 638.4h19.0v38.2h-19.0zM1195.0 678.5h19.0v38.2h-19.0zM1195.0 718.6h19.0v38.2h-19.0zM1195.0 758.7h19.0v38.2h-19.0zM1192.0 838.9h2.7v38.2h-2.7zM1192.0 879.0h2.7v38.2h-2.7zM1192.0 919.1h2.7v38.2h-2.7zM1192.0 959.2h2.7v38.2h-2.7zM1192.0 999.3h2.7v38.2h-2.7zM1192.0 1039.4h2.7v38.2h-2.7zM1192.0 1079.5h2.7v38.2h-2.7zM1192.0 1119.6h2.7v38.2h-2.7zM1192.0 1159.7h2.7v38.2h-2.7zM1192.0 1199.8h2.7v38.2h-2.7zM1192.0 1239.9h2.7v38.2h-2.7zM1192.0 1280.0h2.7v38.2h-2.7zM1192.0 1320.1h2.7v38.2h-2.7zM1192.0 1360.2h2.7v38.2h-2.7zM1192.0 1400.3h2.7v38.2h-2.7zM1192.0 1440.4h2.7v26.6h-2.7zM1203.8 838.9h5.6v38.2h-5.6zM1203.8 879.0h5.6v38.2h-5.6zM1203.8 919.1h5.6v38.2h-5.6zM1203.8 959.2h5.6v38.2h-5.6zM1203.8 999.3h5.6v38.2h-5.6zM1203.8 1039.4h5.6v38.2h-5.6zM1203.8 1079.5h5.6v38.2h-5.6zM1203.8 1119.6h5.6v38.2h-5.6zM1203.8 1159.7h5.6v38.2h-5.6zM1203.8 1199.8h5.6v38.2h-5.6zM1203.8 1239.9h5.6v38.2h-5.6zM1203.8 1280.0h5.6v38.2h-5.6zM1203.8 1320.1h5.6v38.2h-5.6zM1203.8 1360.2h5.6v38.2h-5.6zM1203.8 1400.3h5.6v38.2h-5.6zM1203.8 1440.4h5.6v26.6h-5.6zM1211.3 838.9h2.7v38.2h-2.7zM1211.3 879.0h2.7v38.2h-2.7zM1211.3 919.1h2.7v38.2h-2.7zM1211.3 959.2h2.7v38.2h-2.7zM1211.3 999.3h2.7v38.2h-2.7zM1211.3 1039.4h2.7v38.2h-2.7zM1211.3 1079.5h2.7v38.2h-2.7zM1211.3 1119.6h2.7v38.2h-2.7zM1211.3 1159.7h2.7v38.2h-2.7zM1211.3 1199.8h2.7v38.2h-2.7zM1211.3 1239.9h2.7v38.2h-2.7zM1211.3 1280.0h2.7v38.2h-2.7zM1211.3 1320.1h2.7v38.2h-2.7zM1211.3 1360.2h2.7v38.2h-2.7zM1211.3 1400.3h2.7v38.2h-2.7zM1211.3 1440.4h2.7v26.6h-2.7zM1219.0 397.8h14.0v38.2h-14.0zM1219.0 437.9h14.0v38.2h-14.0zM1219.0 478.0h14.0v38.2h-14.0zM1219.0 518.1h14.0v38.2h-14.0zM1219.0 558.2h14.0v38.2h-14.0zM1219.0 638.4h14.0v38.2h-14.0zM1219.0 678.5h14.0v38.2h-14.0zM1219.0 718.6h14.0v38.2h-14.0zM1219.0 758.7h14.0v38.2h-14.0zM1219.0 838.9h14.0v38.2h-14.0zM1219.0 879.0h14.0v38.2h-14.0zM1219.0 919.1h14.0v38.2h-14.0zM1219.0 959.2h14.0v38.2h-14.0zM1219.0 999.3h14.0v38.2h-14.0zM1219.0 1039.4h14.0v38.2h-14.0zM1219.0 1079.5h14.0v38.2h-14.0zM1219.0 1119.6h14.0v38.2h-14.0zM1219.0 1159.7h14.0v38.2h-14.0zM1219.0 1199.8h14.0v38.2h-14.0zM1219.0 1239.9h14.0v38.2h-14.0zM1219.0 1280.0h14.0v38.2h-14.0zM1219.0 1320.1h14.0v38.2h-14.0zM1219.0 1360.2h14.0v38.2h-14.0zM1219.0 1400.3h14.0v38.2h-14.0zM1219.0 1440.4h14.0v26.6h-14.0zM1242.0 397.8h52.6v38.2h-52.6zM1242.0 437.9h52.6v38.2h-52.6zM1242.0 478.0h52.6v38.2h-52.6zM1242.0 518.1h52.6v38.2h-52.6zM1242.0 558.2h52.6v38.2h-52.6zM1242.0 638.4h52.6v38.2h-52.6zM1242.0 678.5h52.6v38.2h-52.6zM1242.0 718.6h52.6v38.2h-52.6zM1242.0 758.7h52.6v38.2h-52.6zM1242.0 838.9h52.6v38.2h-52.6zM1242.0 879.0h52.6v38.2h-52.6zM1242.0 919.1h52.6v38.2h-52.6zM1242.0 959.2h52.6v38.2h-52.6zM1242.0 1039.4h19.5v38.2h-19.5zM1242.0 1079.5h19.5v38.2h-19.5zM1242.0 1119.6h19.5v38.2h-19.5zM1242.0 1159.7h19.5v38.2h-19.5zM1242.0 1239.9h19.5v38.2h-19.5zM1242.0 1280.0h19.5v38.2h-19.5zM1242.0 1320.1h19.5v38.2h-19.5zM1242.0 1360.2h19.5v38.2h-19.5zM1242.0 1400.3h19.5v38.2h-19.5zM1242.0 1440.4h19.5v26.6h-19.5zM1263.0 1039.4h12.7v38.2h-12.7zM1263.0 1079.5h12.7v38.2h-12.7zM1263.0 1119.6h12.7v38.2h-12.7zM1263.0 1159.7h12.7v38.2h-12.7zM1263.0 1239.9h12.7v38.2h-12.7zM1263.0 1280.0h12.7v38.2h-12.7zM1263.0 1320.1h12.7v38.2h-12.7zM1263.0 1360.2h12.7v38.2h-12.7zM1263.0 1400.3h12.7v38.2h-12.7zM1263.0 1440.4h12.7v26.6h-12.7zM1278.0 1039.4h16.3v38.2h-16.3zM1278.0 1079.5h16.3v38.2h-16.3zM1278.0 1119.6h16.3v38.2h-16.3zM1278.0 1159.7h16.3v38.2h-16.3zM1278.0 1239.9h16.3v38.2h-16.3zM1278.0 1280.0h16.3v38.2h-16.3zM1278.0 1320.1h16.3v38.2h-16.3zM1278.0 1360.2h16.3v38.2h-16.3zM1278.0 1440.4h16.3v26.6h-16.3zM1300.0 397.8h17.0v38.2h-17.0zM1300.0 437.9h17.0v38.2h-17.0zM1300.0 478.0h17.0v38.2h-17.0zM1300.0 518.1h17.0v38.2h-17.0zM1300.0 558.2h17.0v38.2h-17.0zM1300.0 638.4h17.0v38.2h-17.0zM1300.0 678.5h17.0v38.2h-17.0zM1300.0 718.6h17.0v38.2h-17.0zM1300.0 758.7h17.0v38.2h-17.0zM1300.0 838.9h17.0v38.2h-17.0zM1300.0 879.0h17.0v38.2h-17.0zM1300.0 919.1h17.0v38.2h-17.0zM1300.0 959.2h17.0v38.2h-17.0zM1310.4 1039.4h5.7v38.2h-5.7zM1310.4 1079.5h5.7v38.2h-5.7zM1310.4 1119.6h5.7v38.2h-5.7zM1310.4 1159.7h5.7v38.2h-5.7zM1310.4 1199.8h5.7v38.2h-5.7zM1310.4 1239.9h5.7v38.2h-5.7zM1310.4 1280.0h5.7v38.2h-5.7zM1310.4 1320.1h5.7v38.2h-5.7zM1310.4 1360.2h5.7v38.2h-5.7zM1310.4 1400.3h5.7v38.2h-5.7zM1310.4 1440.4h5.7v26.6h-5.7zM1319.0 357.7h1.8v38.2h-1.8zM1322.4 357.7h3.2v38.2h-3.2zM1322.4 397.8h3.2v38.2h-3.2zM1322.4 437.9h3.2v38.2h-3.2zM1322.4 478.0h3.2v38.2h-3.2zM1322.4 518.1h3.2v38.2h-3.2zM1322.4 558.2h3.2v38.2h-3.2zM1322.4 598.3h3.2v38.2h-3.2zM1322.4 638.4h3.2v38.2h-3.2zM1322.4 678.5h3.2v38.2h-3.2zM1322.4 718.6h3.2v38.2h-3.2zM1322.4 758.7h3.2v38.2h-3.2zM1322.4 798.8h3.2v38.2h-3.2zM1322.4 838.9h3.2v38.2h-3.2zM1322.4 879.0h3.2v38.2h-3.2zM1322.4 919.1h3.2v38.2h-3.2zM1322.4 959.2h3.2v38.2h-3.2zM1322.4 999.3h3.2v38.2h-3.2zM1322.4 1039.4h3.2v38.2h-3.2zM1322.4 1079.5h3.2v38.2h-3.2zM1322.4 1119.6h3.2v38.2h-3.2zM1322.4 1159.7h3.2v38.2h-3.2zM1322.4 1199.8h3.2v38.2h-3.2zM1322.4 1239.9h3.2v38.2h-3.2zM1322.4 1280.0h3.2v38.2h-3.2zM1322.4 1320.1h3.2v38.2h-3.2zM1322.4 1360.2h3.2v38.2h-3.2zM1322.4 1400.3h3.2v38.2h-3.2zM1322.4 1440.4h3.2v26.6h-3.2zM1327.6 357.7h1.8v38.2h-1.8zM1327.6 397.8h1.8v38.2h-1.8zM1327.6 437.9h1.8v38.2h-1.8zM1327.6 478.0h1.8v38.2h-1.8zM1327.6 518.1h1.8v38.2h-1.8zM1327.6 558.2h1.8v38.2h-1.8zM1327.6 598.3h1.8v38.2h-1.8zM1327.6 638.4h1.8v38.2h-1.8zM1327.6 678.5h1.8v38.2h-1.8zM1327.6 718.6h1.8v38.2h-1.8zM1327.6 758.7h1.8v38.2h-1.8zM1327.6 798.8h1.8v38.2h-1.8zM1327.6 838.9h1.8v38.2h-1.8zM1327.6 879.0h1.8v38.2h-1.8zM1327.6 919.1h1.8v38.2h-1.8zM1327.6 959.2h1.8v38.2h-1.8zM1327.6 999.3h1.8v38.2h-1.8zM1327.6 1039.4h1.8v38.2h-1.8zM1327.6 1079.5h1.8v38.2h-1.8zM1327.6 1119.6h1.8v38.2h-1.8zM1327.6 1159.7h1.8v38.2h-1.8zM1327.6 1199.8h1.8v38.2h-1.8zM1327.6 1239.9h1.8v38.2h-1.8zM1327.6 1280.0h1.8v38.2h-1.8zM1327.6 1320.1h1.8v38.2h-1.8zM1327.6 1360.2h1.8v38.2h-1.8zM1327.6 1400.3h1.8v38.2h-1.8zM1327.6 1440.4h1.8v26.6h-1.8zM1330.7 357.7h1.3v38.2h-1.3zM1334.0 397.8h14.0v38.2h-14.0zM1334.0 437.9h14.0v38.2h-14.0zM1334.0 478.0h14.0v38.2h-14.0zM1334.0 518.1h14.0v38.2h-14.0zM1334.0 558.2h14.0v38.2h-14.0zM1334.0 638.4h14.0v38.2h-14.0zM1334.0 678.5h14.0v38.2h-14.0zM1334.0 718.6h14.0v38.2h-14.0zM1334.0 758.7h14.0v38.2h-14.0zM1334.0 838.9h14.0v38.2h-14.0zM1334.0 879.0h14.0v38.2h-14.0zM1334.0 919.1h14.0v38.2h-14.0zM1334.0 959.2h14.0v38.2h-14.0zM1334.0 1039.4h14.0v38.2h-14.0zM1334.0 1079.5h14.0v38.2h-14.0zM1334.0 1119.6h14.0v38.2h-14.0zM1334.0 1159.7h14.0v38.2h-14.0zM1334.0 1199.8h14.0v38.2h-14.0zM1334.0 1239.9h14.0v38.2h-14.0zM1334.0 1280.0h14.0v38.2h-14.0zM1334.0 1320.1h14.0v38.2h-14.0zM1334.0 1360.2h14.0v38.2h-14.0zM1334.0 1400.3h14.0v38.2h-14.0zM1334.0 1440.4h14.0v26.6h-14.0zM1353.0 397.8h18.0v38.2h-18.0zM1353.0 437.9h18.0v38.2h-18.0zM1353.0 478.0h18.0v38.2h-18.0zM1353.0 518.1h18.0v38.2h-18.0zM1353.0 558.2h18.0v38.2h-18.0zM1353.0 638.4h18.0v38.2h-18.0zM1353.0 678.5h18.0v38.2h-18.0zM1353.0 718.6h18.0v38.2h-18.0zM1353.0 758.7h18.0v38.2h-18.0zM1353.0 838.9h18.0v38.2h-18.0zM1353.0 879.0h18.0v38.2h-18.0zM1353.0 919.1h18.0v38.2h-18.0zM1353.0 959.2h18.0v38.2h-18.0zM1353.0 1039.4h18.0v38.2h-18.0zM1353.0 1079.5h18.0v38.2h-18.0zM1353.0 1119.6h18.0v38.2h-18.0zM1353.0 1159.7h18.0v38.2h-18.0zM1353.0 1199.8h18.0v38.2h-18.0zM1353.0 1239.9h18.0v38.2h-18.0zM1353.0 1280.0h18.0v38.2h-18.0zM1353.0 1320.1h18.0v38.2h-18.0zM1353.0 1360.2h18.0v38.2h-18.0zM1353.0 1400.3h18.0v38.2h-18.0zM1353.0 1440.4h18.0v26.6h-18.0zM1376.0 397.8h56.0v38.2h-56.0zM1376.0 437.9h27.0v38.2h-27.0zM1376.0 478.0h27.0v38.2h-27.0zM1376.0 518.1h27.0v38.2h-27.0zM1376.0 558.2h27.0v38.2h-27.0zM1376.0 638.4h27.0v38.2h-27.0zM1376.0 678.5h27.0v38.2h-27.0zM1376.0 718.6h27.0v38.2h-27.0zM1376.0 758.7h27.0v38.2h-27.0zM1408.0 437.9h24.0v38.2h-24.0zM1408.0 478.0h24.0v38.2h-24.0zM1408.0 518.1h24.0v38.2h-24.0zM1408.0 638.4h24.0v38.2h-24.0zM1408.0 678.5h24.0v38.2h-24.0zM1408.0 718.6h24.0v38.2h-24.0zM1408.0 758.7h24.0v38.2h-24.0zM1408.0 798.8h24.0v38.2h-24.0zM1376.0 838.9h27.0v38.2h-27.0zM1376.0 879.0h27.0v38.2h-27.0zM1376.0 919.1h27.0v38.2h-27.0zM1376.0 959.2h27.0v38.2h-27.0zM1376.0 1039.4h27.0v38.2h-27.0zM1376.0 1079.5h27.0v38.2h-27.0zM1376.0 1119.6h27.0v38.2h-27.0zM1376.0 1159.7h27.0v38.2h-27.0zM1376.0 1239.9h6.2v38.2h-6.2zM1376.0 1280.0h6.2v38.2h-6.2zM1376.0 1320.1h6.2v38.2h-6.2zM1376.0 1360.2h6.2v38.2h-6.2zM1376.0 1400.3h6.2v38.2h-6.2zM1376.0 1440.4h6.2v26.6h-6.2zM1384.4 1239.9h8.6v38.2h-8.6zM1384.4 1280.0h8.6v38.2h-8.6zM1384.4 1320.1h8.6v38.2h-8.6zM1384.4 1360.2h8.6v38.2h-8.6zM1384.4 1400.3h8.6v38.2h-8.6zM1384.4 1440.4h8.6v26.6h-8.6zM1395.5 1239.9h7.5v38.2h-7.5zM1405.0 838.9h9.8v38.2h-9.8zM1405.0 879.0h9.8v38.2h-9.8zM1405.0 919.1h9.8v38.2h-9.8zM1405.0 959.2h9.8v38.2h-9.8zM1405.0 999.3h9.8v38.2h-9.8zM1405.0 1039.4h9.8v38.2h-9.8zM1405.0 1079.5h9.8v38.2h-9.8zM1405.0 1119.6h9.8v38.2h-9.8zM1405.0 1159.7h9.8v38.2h-9.8zM1405.0 1199.8h9.8v38.2h-9.8zM1405.0 1239.9h9.8v38.2h-9.8zM1405.0 1280.0h9.8v38.2h-9.8zM1405.0 1320.1h9.8v38.2h-9.8zM1405.0 1360.2h9.8v38.2h-9.8zM1405.0 1400.3h9.8v38.2h-9.8zM1405.0 1440.4h9.8v26.6h-9.8zM1416.9 838.9h6.6v38.2h-6.6zM1416.9 879.0h6.6v38.2h-6.6zM1416.9 919.1h6.6v38.2h-6.6zM1416.9 959.2h6.6v38.2h-6.6zM1416.9 1039.4h6.6v38.2h-6.6zM1416.9 1079.5h6.6v38.2h-6.6zM1416.9 1119.6h6.6v38.2h-6.6zM1416.9 1159.7h6.6v38.2h-6.6zM1416.9 1199.8h6.6v38.2h-6.6zM1416.9 1239.9h6.6v38.2h-6.6zM1416.9 1280.0h6.6v38.2h-6.6zM1416.9 1320.1h6.6v38.2h-6.6zM1416.9 1360.2h6.6v38.2h-6.6zM1416.9 1400.3h6.6v38.2h-6.6zM1416.9 1440.4h6.6v26.6h-6.6zM1425.0 838.9h6.3v38.2h-6.3zM1425.0 879.0h6.3v38.2h-6.3zM1425.0 919.1h6.3v38.2h-6.3zM1425.0 959.2h6.3v38.2h-6.3zM1425.0 999.3h6.3v38.2h-6.3zM1425.0 1039.4h6.3v38.2h-6.3zM1425.0 1079.5h6.3v38.2h-6.3zM1425.0 1119.6h6.3v38.2h-6.3zM1425.0 1159.7h6.3v38.2h-6.3zM1425.0 1199.8h6.3v38.2h-6.3zM1425.0 1239.9h6.3v38.2h-6.3zM1425.0 1280.0h6.3v38.2h-6.3zM1425.0 1320.1h6.3v38.2h-6.3zM1425.0 1360.2h6.3v38.2h-6.3zM1425.0 1400.3h6.3v38.2h-6.3zM1425.0 1440.4h6.3v26.6h-6.3zM1432.0 357.7h2.4v38.2h-2.4zM1436.2 357.7h2.1v38.2h-2.1zM1436.2 397.8h2.1v38.2h-2.1zM1436.2 437.9h2.1v38.2h-2.1zM1436.2 478.0h2.1v38.2h-2.1zM1436.2 518.1h2.1v38.2h-2.1zM1436.2 558.2h2.1v38.2h-2.1zM1436.2 598.3h2.1v38.2h-2.1zM1436.2 638.4h2.1v38.2h-2.1zM1436.2 678.5h2.1v38.2h-2.1zM1436.2 718.6h2.1v38.2h-2.1zM1436.2 758.7h2.1v38.2h-2.1zM1436.2 798.8h2.1v38.2h-2.1zM1436.2 838.9h2.1v38.2h-2.1zM1436.2 879.0h2.1v38.2h-2.1zM1436.2 919.1h2.1v38.2h-2.1zM1436.2 959.2h2.1v38.2h-2.1zM1436.2 999.3h2.1v38.2h-2.1zM1436.2 1039.4h2.1v38.2h-2.1zM1436.2 1079.5h2.1v38.2h-2.1zM1436.2 1119.6h2.1v38.2h-2.1zM1436.2 1159.7h2.1v38.2h-2.1zM1436.2 1199.8h2.1v38.2h-2.1zM1436.2 1239.9h2.1v38.2h-2.1zM1436.2 1280.0h2.1v38.2h-2.1zM1436.2 1320.1h2.1v38.2h-2.1zM1436.2 1360.2h2.1v38.2h-2.1zM1436.2 1400.3h2.1v38.2h-2.1zM1436.2 1440.4h2.1v26.6h-2.1zM1441.0 397.8h59.0v38.2h-59.0zM1441.0 437.9h46.0v38.2h-46.0zM1441.0 478.0h46.0v38.2h-46.0zM1441.0 518.1h46.0v38.2h-46.0zM1441.0 638.4h46.0v38.2h-46.0zM1441.0 678.5h46.0v38.2h-46.0zM1441.0 718.6h46.0v38.2h-46.0zM1441.0 758.7h46.0v38.2h-46.0zM1441.0 798.8h46.0v38.2h-46.0zM1441.0 838.9h46.0v38.2h-46.0zM1441.0 879.0h46.0v38.2h-46.0zM1441.0 919.1h46.0v38.2h-46.0zM1441.0 959.2h46.0v38.2h-46.0zM1441.0 999.3h46.0v38.2h-46.0zM1441.0 1039.4h46.0v38.2h-46.0zM1441.0 1079.5h46.0v38.2h-46.0zM1441.0 1119.6h46.0v38.2h-46.0zM1489.0 478.0h2.3v38.2h-2.3zM1489.0 518.1h2.3v38.2h-2.3zM1489.0 558.2h2.3v38.2h-2.3zM1489.0 598.3h2.3v38.2h-2.3zM1489.0 638.4h2.3v38.2h-2.3zM1489.0 678.5h2.3v38.2h-2.3zM1489.0 718.6h2.3v38.2h-2.3zM1489.0 758.7h2.3v38.2h-2.3zM1489.0 798.8h2.3v38.2h-2.3zM1489.0 838.9h2.3v38.2h-2.3zM1489.0 879.0h2.3v38.2h-2.3zM1489.0 919.1h2.3v38.2h-2.3zM1489.0 959.2h2.3v38.2h-2.3zM1489.0 999.3h2.3v38.2h-2.3zM1489.0 1039.4h2.3v38.2h-2.3zM1489.0 1079.5h2.3v38.2h-2.3zM1489.0 1119.6h2.3v38.2h-2.3zM1489.0 1159.7h2.3v38.2h-2.3zM1489.0 1199.8h2.3v38.2h-2.3zM1489.0 1239.9h2.3v38.2h-2.3zM1489.0 1280.0h2.3v38.2h-2.3zM1489.0 1320.1h2.3v38.2h-2.3zM1489.0 1360.2h2.3v38.2h-2.3zM1489.0 1400.3h2.3v38.2h-2.3zM1489.0 1440.4h2.3v26.6h-2.3zM1493.4 478.0h2.7v38.2h-2.7zM1493.4 518.1h2.7v38.2h-2.7zM1493.4 558.2h2.7v38.2h-2.7zM1493.4 598.3h2.7v38.2h-2.7zM1493.4 638.4h2.7v38.2h-2.7zM1493.4 678.5h2.7v38.2h-2.7zM1493.4 718.6h2.7v38.2h-2.7zM1493.4 758.7h2.7v38.2h-2.7zM1493.4 798.8h2.7v38.2h-2.7zM1493.4 838.9h2.7v38.2h-2.7zM1493.4 879.0h2.7v38.2h-2.7zM1493.4 919.1h2.7v38.2h-2.7zM1493.4 959.2h2.7v38.2h-2.7zM1493.4 999.3h2.7v38.2h-2.7zM1493.4 1039.4h2.7v38.2h-2.7zM1493.4 1079.5h2.7v38.2h-2.7zM1493.4 1119.6h2.7v38.2h-2.7zM1493.4 1159.7h2.7v38.2h-2.7zM1493.4 1199.8h2.7v38.2h-2.7zM1493.4 1239.9h2.7v38.2h-2.7zM1493.4 1280.0h2.7v38.2h-2.7zM1493.4 1320.1h2.7v38.2h-2.7zM1493.4 1360.2h2.7v38.2h-2.7zM1493.4 1400.3h2.7v38.2h-2.7zM1493.4 1440.4h2.7v26.6h-2.7zM1498.4 478.0h1.6v38.2h-1.6zM1441.0 1159.7h29.0v38.2h-29.0zM1441.0 1199.8h29.0v38.2h-29.0zM1441.0 1239.9h29.0v38.2h-29.0zM1441.0 1280.0h7.0v38.2h-7.0zM1441.0 1320.1h7.0v38.2h-7.0zM1441.0 1360.2h7.0v38.2h-7.0zM1441.0 1400.3h7.0v38.2h-7.0zM1441.0 1440.4h7.0v26.6h-7.0zM1450.2 1280.0h4.8v38.2h-4.8zM1450.2 1320.1h4.8v38.2h-4.8zM1450.2 1360.2h4.8v38.2h-4.8zM1450.2 1400.3h4.8v38.2h-4.8zM1450.2 1440.4h4.8v26.6h-4.8zM1456.1 1280.0h3.1v38.2h-3.1zM1456.1 1320.1h3.1v38.2h-3.1zM1456.1 1360.2h3.1v38.2h-3.1zM1456.1 1400.3h3.1v38.2h-3.1zM1456.1 1440.4h3.1v26.6h-3.1zM1461.6 1320.1h3.3v38.2h-3.3zM1461.6 1400.3h3.3v38.2h-3.3zM1467.1 1280.0h5.7v38.2h-5.7zM1467.1 1320.1h5.7v38.2h-5.7zM1467.1 1360.2h5.7v38.2h-5.7zM1467.1 1400.3h5.7v38.2h-5.7zM1467.1 1440.4h5.7v26.6h-5.7zM1474.2 1280.0h0.8v38.2h-0.8zM1474.2 1320.1h0.8v38.2h-0.8zM1474.2 1360.2h0.8v38.2h-0.8zM1474.2 1400.3h0.8v38.2h-0.8zM1474.2 1440.4h0.8v26.6h-0.8zM1503.0 397.8h37.0v38.2h-37.0zM1503.0 478.0h37.0v38.2h-37.0zM1503.0 518.1h37.0v38.2h-37.0zM1503.0 558.2h37.0v38.2h-37.0zM1503.0 598.3h37.0v38.2h-37.0zM1503.0 638.4h37.0v38.2h-37.0zM1503.0 678.5h37.0v38.2h-37.0zM1503.0 718.6h37.0v38.2h-37.0zM1503.0 758.7h37.0v38.2h-37.0zM1503.0 798.8h37.0v38.2h-37.0zM1503.0 838.9h37.0v38.2h-37.0zM1503.0 879.0h34.0v38.2h-34.0zM1503.0 919.1h34.0v38.2h-34.0zM1503.0 959.2h34.0v38.2h-34.0zM1503.0 999.3h34.0v38.2h-34.0zM1503.0 1039.4h34.0v38.2h-34.0zM1503.0 1079.5h34.0v38.2h-34.0zM1503.0 1119.6h5.5v38.2h-5.5zM1503.0 1159.7h5.5v38.2h-5.5zM1503.0 1199.8h5.5v38.2h-5.5zM1503.0 1239.9h5.5v38.2h-5.5zM1503.0 1280.0h5.5v38.2h-5.5zM1503.0 1320.1h5.5v38.2h-5.5zM1503.0 1360.2h5.5v38.2h-5.5zM1503.0 1400.3h5.5v38.2h-5.5zM1503.0 1440.4h5.5v26.6h-5.5zM1510.2 1119.6h6.4v38.2h-6.4zM1510.2 1159.7h6.4v38.2h-6.4zM1510.2 1199.8h6.4v38.2h-6.4zM1510.2 1239.9h6.4v38.2h-6.4zM1510.2 1280.0h6.4v38.2h-6.4zM1510.2 1320.1h6.4v38.2h-6.4zM1510.2 1360.2h6.4v38.2h-6.4zM1510.2 1400.3h6.4v38.2h-6.4zM1510.2 1440.4h6.4v26.6h-6.4zM1518.6 1119.6h7.2v38.2h-7.2zM1518.6 1159.7h7.2v38.2h-7.2zM1518.6 1199.8h7.2v38.2h-7.2zM1518.6 1239.9h7.2v38.2h-7.2zM1518.6 1280.0h7.2v38.2h-7.2zM1518.6 1320.1h7.2v38.2h-7.2zM1518.6 1360.2h7.2v38.2h-7.2zM1518.6 1400.3h7.2v38.2h-7.2zM1518.6 1440.4h7.2v26.6h-7.2zM1527.2 1119.6h3.7v38.2h-3.7zM1527.2 1159.7h3.7v38.2h-3.7zM1527.2 1199.8h3.7v38.2h-3.7zM1527.2 1239.9h3.7v38.2h-3.7zM1527.2 1280.0h3.7v38.2h-3.7zM1527.2 1320.1h3.7v38.2h-3.7zM1527.2 1360.2h3.7v38.2h-3.7zM1527.2 1400.3h3.7v38.2h-3.7zM1527.2 1440.4h3.7v26.6h-3.7zM1532.2 1119.6h7.8v38.2h-7.8zM1543.0 357.7h3.0v38.2h-3.0zM1547.6 357.7h1.9v38.2h-1.9zM1547.6 397.8h1.9v38.2h-1.9zM1547.6 437.9h1.9v38.2h-1.9zM1547.6 478.0h1.9v38.2h-1.9zM1547.6 518.1h1.9v38.2h-1.9zM1547.6 558.2h1.9v38.2h-1.9zM1547.6 598.3h1.9v38.2h-1.9zM1547.6 638.4h1.9v38.2h-1.9zM1547.6 678.5h1.9v38.2h-1.9zM1547.6 718.6h1.9v38.2h-1.9zM1547.6 758.7h1.9v38.2h-1.9zM1547.6 798.8h1.9v38.2h-1.9zM1547.6 838.9h1.9v38.2h-1.9zM1547.6 879.0h1.9v38.2h-1.9zM1547.6 919.1h1.9v38.2h-1.9zM1547.6 959.2h1.9v38.2h-1.9zM1547.6 999.3h1.9v38.2h-1.9zM1547.6 1039.4h1.9v38.2h-1.9zM1547.6 1079.5h1.9v38.2h-1.9zM1547.6 1119.6h1.9v38.2h-1.9zM1547.6 1159.7h1.9v38.2h-1.9zM1547.6 1199.8h1.9v38.2h-1.9zM1547.6 1239.9h1.9v38.2h-1.9zM1547.6 1280.0h1.9v38.2h-1.9zM1547.6 1320.1h1.9v38.2h-1.9zM1547.6 1360.2h1.9v38.2h-1.9zM1547.6 1400.3h1.9v38.2h-1.9zM1547.6 1440.4h1.9v26.6h-1.9zM1551.5 357.7h1.9v38.2h-1.9zM1551.5 397.8h1.9v38.2h-1.9zM1551.5 437.9h1.9v38.2h-1.9zM1551.5 478.0h1.9v38.2h-1.9zM1551.5 518.1h1.9v38.2h-1.9zM1551.5 558.2h1.9v38.2h-1.9zM1551.5 598.3h1.9v38.2h-1.9zM1551.5 638.4h1.9v38.2h-1.9zM1551.5 678.5h1.9v38.2h-1.9zM1551.5 718.6h1.9v38.2h-1.9zM1551.5 758.7h1.9v38.2h-1.9zM1551.5 798.8h1.9v38.2h-1.9zM1551.5 838.9h1.9v38.2h-1.9zM1551.5 879.0h1.9v38.2h-1.9zM1551.5 919.1h1.9v38.2h-1.9zM1551.5 959.2h1.9v38.2h-1.9zM1551.5 999.3h1.9v38.2h-1.9zM1551.5 1039.4h1.9v38.2h-1.9zM1551.5 1079.5h1.9v38.2h-1.9zM1551.5 1119.6h1.9v38.2h-1.9zM1551.5 1159.7h1.9v38.2h-1.9zM1551.5 1199.8h1.9v38.2h-1.9zM1551.5 1239.9h1.9v38.2h-1.9zM1551.5 1280.0h1.9v38.2h-1.9zM1551.5 1320.1h1.9v38.2h-1.9zM1551.5 1360.2h1.9v38.2h-1.9zM1551.5 1400.3h1.9v38.2h-1.9zM1551.5 1440.4h1.9v26.6h-1.9zM1558.0 397.8h34.0v38.2h-34.0zM1558.0 437.9h34.0v38.2h-34.0zM1558.0 558.2h34.0v38.2h-34.0zM1558.0 598.3h34.0v38.2h-34.0zM1558.0 638.4h34.0v38.2h-34.0zM1558.0 678.5h5.4v38.2h-5.4zM1558.0 718.6h5.4v38.2h-5.4zM1558.0 758.7h5.4v38.2h-5.4zM1558.0 798.8h5.4v38.2h-5.4zM1558.0 838.9h5.4v38.2h-5.4zM1558.0 879.0h5.4v38.2h-5.4zM1558.0 919.1h5.4v38.2h-5.4zM1558.0 959.2h5.4v38.2h-5.4zM1558.0 999.3h5.4v38.2h-5.4zM1558.0 1039.4h5.4v38.2h-5.4zM1558.0 1079.5h5.4v38.2h-5.4zM1558.0 1119.6h5.4v38.2h-5.4zM1558.0 1159.7h5.4v38.2h-5.4zM1558.0 1199.8h5.4v38.2h-5.4zM1558.0 1239.9h5.4v38.2h-5.4zM1558.0 1280.0h5.4v38.2h-5.4zM1558.0 1320.1h5.4v38.2h-5.4zM1558.0 1360.2h5.4v38.2h-5.4zM1558.0 1400.3h5.4v38.2h-5.4zM1558.0 1440.4h5.4v26.6h-5.4zM1565.7 678.5h5.8v38.2h-5.8zM1573.5 678.5h9.6v38.2h-9.6zM1573.5 718.6h9.6v38.2h-9.6zM1573.5 758.7h9.6v38.2h-9.6zM1573.5 798.8h9.6v38.2h-9.6zM1573.5 838.9h9.6v38.2h-9.6zM1573.5 879.0h9.6v38.2h-9.6zM1573.5 919.1h9.6v38.2h-9.6zM1573.5 959.2h9.6v38.2h-9.6zM1573.5 999.3h9.6v38.2h-9.6zM1573.5 1039.4h9.6v38.2h-9.6zM1573.5 1079.5h9.6v38.2h-9.6zM1573.5 1119.6h9.6v38.2h-9.6zM1573.5 1159.7h9.6v38.2h-9.6zM1573.5 1199.8h9.6v38.2h-9.6zM1573.5 1239.9h9.6v38.2h-9.6zM1573.5 1280.0h9.6v38.2h-9.6zM1573.5 1320.1h9.6v38.2h-9.6zM1573.5 1360.2h9.6v38.2h-9.6zM1573.5 1400.3h9.6v38.2h-9.6zM1573.5 1440.4h9.6v26.6h-9.6zM1585.7 678.5h6.3v38.2h-6.3zM1585.7 718.6h6.3v38.2h-6.3zM1585.7 758.7h6.3v38.2h-6.3zM1585.7 798.8h6.3v38.2h-6.3zM1585.7 838.9h6.3v38.2h-6.3zM1585.7 879.0h6.3v38.2h-6.3zM1585.7 919.1h6.3v38.2h-6.3zM1585.7 959.2h6.3v38.2h-6.3zM1585.7 999.3h6.3v38.2h-6.3zM1585.7 1039.4h6.3v38.2h-6.3zM1585.7 1079.5h6.3v38.2h-6.3zM1585.7 1119.6h6.3v38.2h-6.3zM1585.7 1159.7h6.3v38.2h-6.3zM1585.7 1199.8h6.3v38.2h-6.3zM1585.7 1239.9h6.3v38.2h-6.3zM1585.7 1280.0h6.3v38.2h-6.3zM1585.7 1320.1h6.3v38.2h-6.3zM1585.7 1360.2h6.3v38.2h-6.3zM1585.7 1400.3h6.3v38.2h-6.3zM1585.7 1440.4h6.3v26.6h-6.3zM1595.0 437.9h3.0v38.2h-3.0zM1595.0 518.1h3.0v38.2h-3.0zM1595.0 638.4h3.0v38.2h-3.0zM1595.0 718.6h3.0v38.2h-3.0zM1595.0 758.7h3.0v38.2h-3.0zM1595.0 838.9h3.0v38.2h-3.0zM1595.0 919.1h3.0v38.2h-3.0zM1595.0 999.3h3.0v38.2h-3.0zM1595.0 1079.5h3.0v38.2h-3.0zM1595.0 1119.6h3.0v38.2h-3.0zM1595.0 1199.8h3.0v38.2h-3.0zM1595.0 1239.9h3.0v38.2h-3.0zM1599.7 357.7h3.2v38.2h-3.2zM1605.2 357.7h2.4v38.2h-2.4zM1605.2 397.8h2.4v38.2h-2.4zM1605.2 437.9h2.4v38.2h-2.4zM1605.2 478.0h2.4v38.2h-2.4zM1605.2 518.1h2.4v38.2h-2.4zM1605.2 558.2h2.4v38.2h-2.4zM1605.2 598.3h2.4v38.2h-2.4zM1605.2 638.4h2.4v38.2h-2.4zM1605.2 678.5h2.4v38.2h-2.4zM1605.2 718.6h2.4v38.2h-2.4zM1605.2 758.7h2.4v38.2h-2.4zM1605.2 798.8h2.4v38.2h-2.4zM1605.2 838.9h2.4v38.2h-2.4zM1605.2 879.0h2.4v38.2h-2.4zM1605.2 919.1h2.4v38.2h-2.4zM1605.2 959.2h2.4v38.2h-2.4zM1605.2 999.3h2.4v38.2h-2.4zM1605.2 1039.4h2.4v38.2h-2.4zM1605.2 1079.5h2.4v38.2h-2.4zM1605.2 1119.6h2.4v38.2h-2.4zM1605.2 1159.7h2.4v38.2h-2.4zM1605.2 1199.8h2.4v38.2h-2.4zM1605.2 1239.9h2.4v38.2h-2.4zM1610.2 357.7h0.8v38.2h-0.8zM1610.2 397.8h0.8v38.2h-0.8zM1610.2 437.9h0.8v38.2h-0.8zM1610.2 478.0h0.8v38.2h-0.8zM1610.2 518.1h0.8v38.2h-0.8zM1610.2 558.2h0.8v38.2h-0.8zM1610.2 598.3h0.8v38.2h-0.8zM1610.2 638.4h0.8v38.2h-0.8zM1610.2 678.5h0.8v38.2h-0.8zM1610.2 718.6h0.8v38.2h-0.8zM1610.2 758.7h0.8v38.2h-0.8zM1610.2 798.8h0.8v38.2h-0.8zM1610.2 838.9h0.8v38.2h-0.8zM1610.2 879.0h0.8v38.2h-0.8zM1610.2 919.1h0.8v38.2h-0.8zM1610.2 959.2h0.8v38.2h-0.8zM1610.2 999.3h0.8v38.2h-0.8zM1610.2 1039.4h0.8v38.2h-0.8zM1610.2 1079.5h0.8v38.2h-0.8zM1610.2 1119.6h0.8v38.2h-0.8zM1610.2 1159.7h0.8v38.2h-0.8zM1610.2 1199.8h0.8v38.2h-0.8zM1610.2 1239.9h0.8v38.2h-0.8zM1610.2 1280.0h0.8v38.2h-0.8zM1610.2 1320.1h0.8v38.2h-0.8zM1610.2 1360.2h0.8v38.2h-0.8zM1610.2 1400.3h0.8v38.2h-0.8zM1610.2 1440.4h0.8v26.6h-0.8zM1611.0 357.7h7.4v38.2h-7.4zM1611.0 478.0h7.4v38.2h-7.4zM1611.0 558.2h7.4v38.2h-7.4zM1611.0 598.3h7.4v38.2h-7.4zM1611.0 638.4h7.4v38.2h-7.4zM1611.0 678.5h7.4v38.2h-7.4zM1611.0 718.6h7.4v38.2h-7.4zM1611.0 758.7h7.4v38.2h-7.4zM1611.0 798.8h7.4v38.2h-7.4zM1611.0 838.9h7.4v38.2h-7.4zM1611.0 879.0h7.4v38.2h-7.4zM1611.0 919.1h7.4v38.2h-7.4zM1611.0 959.2h7.4v38.2h-7.4zM1611.0 999.3h7.4v38.2h-7.4zM1611.0 1079.5h7.4v38.2h-7.4zM1611.0 1119.6h7.4v38.2h-7.4zM1611.0 1159.7h7.4v38.2h-7.4zM1611.0 1199.8h7.4v38.2h-7.4zM1611.0 1239.9h7.4v38.2h-7.4zM1611.0 1280.0h7.4v38.2h-7.4zM1611.0 1320.1h7.4v38.2h-7.4zM1620.3 478.0h8.7v38.2h-8.7zM1620.3 558.2h8.7v38.2h-8.7zM1620.3 598.3h8.7v38.2h-8.7zM1620.3 638.4h8.7v38.2h-8.7zM1620.3 678.5h8.7v38.2h-8.7zM1620.3 718.6h8.7v38.2h-8.7zM1620.3 758.7h8.7v38.2h-8.7zM1620.3 798.8h8.7v38.2h-8.7zM1620.3 838.9h8.7v38.2h-8.7zM1620.3 879.0h8.7v38.2h-8.7zM1620.3 919.1h8.7v38.2h-8.7zM1620.3 959.2h8.7v38.2h-8.7zM1620.3 999.3h8.7v38.2h-8.7zM1620.3 1079.5h8.7v38.2h-8.7zM1620.3 1119.6h8.7v38.2h-8.7zM1620.3 1159.7h8.7v38.2h-8.7zM1620.3 1199.8h8.7v38.2h-8.7zM1620.3 1239.9h8.7v38.2h-8.7zM1620.3 1280.0h8.7v38.2h-8.7zM1620.3 1320.1h8.7v38.2h-8.7zM1629.6 357.7h4.6v38.2h-4.6zM1629.6 397.8h4.6v38.2h-4.6zM1629.6 437.9h4.6v38.2h-4.6zM1629.6 478.0h4.6v38.2h-4.6zM1629.6 518.1h4.6v38.2h-4.6zM1629.6 558.2h4.6v38.2h-4.6zM1629.6 598.3h4.6v38.2h-4.6zM1629.6 638.4h4.6v38.2h-4.6zM1629.6 678.5h4.6v38.2h-4.6zM1629.6 718.6h4.6v38.2h-4.6zM1629.6 758.7h4.6v38.2h-4.6zM1629.6 798.8h4.6v38.2h-4.6zM1629.6 838.9h4.6v38.2h-4.6zM1636.5 357.7h1.7v38.2h-1.7zM1636.5 397.8h1.7v38.2h-1.7zM1636.5 437.9h1.7v38.2h-1.7zM1636.5 478.0h1.7v38.2h-1.7zM1636.5 518.1h1.7v38.2h-1.7zM1636.5 558.2h1.7v38.2h-1.7zM1636.5 598.3h1.7v38.2h-1.7zM1636.5 638.4h1.7v38.2h-1.7zM1636.5 678.5h1.7v38.2h-1.7zM1636.5 718.6h1.7v38.2h-1.7zM1636.5 758.7h1.7v38.2h-1.7zM1636.5 798.8h1.7v38.2h-1.7zM1636.5 838.9h1.7v38.2h-1.7zM1636.5 879.0h1.7v38.2h-1.7zM1636.5 919.1h1.7v38.2h-1.7zM1636.5 959.2h1.7v38.2h-1.7zM1636.5 999.3h1.7v38.2h-1.7zM1636.5 1039.4h1.7v38.2h-1.7zM1636.5 1079.5h1.7v38.2h-1.7zM1636.5 1119.6h1.7v38.2h-1.7zM1636.5 1159.7h1.7v38.2h-1.7zM1636.5 1199.8h1.7v38.2h-1.7zM1636.5 1239.9h1.7v38.2h-1.7zM1636.5 1280.0h1.7v38.2h-1.7zM1636.5 1320.1h1.7v38.2h-1.7zM1640.2 357.7h2.6v38.2h-2.6zM1644.2 357.7h1.8v38.2h-1.8zM1644.2 397.8h1.8v38.2h-1.8zM1644.2 437.9h1.8v38.2h-1.8zM1644.2 478.0h1.8v38.2h-1.8zM1644.2 518.1h1.8v38.2h-1.8zM1644.2 558.2h1.8v38.2h-1.8zM1644.2 598.3h1.8v38.2h-1.8zM1644.2 638.4h1.8v38.2h-1.8zM1644.2 678.5h1.8v38.2h-1.8zM1644.2 718.6h1.8v38.2h-1.8zM1644.2 758.7h1.8v38.2h-1.8zM1644.2 798.8h1.8v38.2h-1.8zM1644.2 838.9h1.8v38.2h-1.8zM1646.0 437.9h9.5v38.2h-9.5zM1646.0 478.0h9.5v38.2h-9.5zM1646.0 518.1h9.5v38.2h-9.5zM1646.0 558.2h9.5v38.2h-9.5zM1646.0 598.3h9.5v38.2h-9.5zM1646.0 638.4h9.5v38.2h-9.5zM1646.0 678.5h9.5v38.2h-9.5zM1646.0 718.6h9.5v38.2h-9.5zM1646.0 758.7h9.5v38.2h-9.5zM1646.0 798.8h9.5v38.2h-9.5zM1646.0 838.9h9.5v38.2h-9.5zM1646.0 879.0h2.6v38.2h-2.6zM1649.8 879.0h2.5v38.2h-2.5zM1649.8 919.1h2.5v38.2h-2.5zM1649.8 959.2h2.5v38.2h-2.5zM1649.8 999.3h2.5v38.2h-2.5zM1649.8 1039.4h2.5v38.2h-2.5zM1649.8 1079.5h2.5v38.2h-2.5zM1649.8 1119.6h2.5v38.2h-2.5zM1649.8 1159.7h2.5v38.2h-2.5zM1649.8 1199.8h2.5v38.2h-2.5zM1649.8 1239.9h2.5v38.2h-2.5zM1649.8 1280.0h2.5v38.2h-2.5zM1649.8 1320.1h2.5v38.2h-2.5zM1654.8 879.0h1.2v38.2h-1.2zM1656.0 357.7h3.2v38.2h-3.2zM1656.0 397.8h3.2v38.2h-3.2zM1660.8 357.7h3.3v38.2h-3.3zM1660.8 397.8h3.3v38.2h-3.3zM1664.7 437.9h35.9v38.2h-35.9zM1664.7 478.0h35.9v38.2h-35.9zM1664.7 518.1h35.9v38.2h-35.9zM1664.7 558.2h35.9v38.2h-35.9zM1664.7 598.3h35.9v38.2h-35.9zM1664.7 638.4h35.9v38.2h-35.9zM1664.7 678.5h35.9v38.2h-35.9zM1664.7 718.6h35.9v38.2h-35.9zM1664.7 758.7h35.9v38.2h-35.9zM1664.7 798.8h35.9v38.2h-35.9zM1664.7 838.9h35.9v38.2h-35.9zM1664.7 879.0h35.9v38.2h-35.9zM1664.7 919.1h35.9v38.2h-35.9zM1664.7 959.2h35.9v38.2h-35.9zM1664.7 999.3h35.9v38.2h-35.9zM1664.7 1039.4h35.9v38.2h-35.9zM1664.7 1079.5h4.8v38.2h-4.8zM1664.7 1119.6h4.8v38.2h-4.8zM1664.7 1159.7h4.8v38.2h-4.8zM1671.6 1079.5h3.9v38.2h-3.9zM1671.6 1119.6h3.9v38.2h-3.9zM1671.6 1159.7h3.9v38.2h-3.9zM1671.6 1199.8h3.9v38.2h-3.9zM1671.6 1239.9h3.9v38.2h-3.9zM1678.0 1079.5h2.0v38.2h-2.0zM1681.7 1079.5h3.8v38.2h-3.8zM1681.7 1119.6h3.8v38.2h-3.8zM1681.7 1159.7h3.8v38.2h-3.8zM1687.3 1079.5h4.5v38.2h-4.5zM1693.1 1079.5h4.0v38.2h-4.0zM1693.1 1119.6h4.0v38.2h-4.0zM1693.1 1159.7h4.0v38.2h-4.0zM1699.4 1079.5h1.2v38.2h-1.2zM1699.4 1119.6h1.2v38.2h-1.2zM1699.4 1159.7h1.2v38.2h-1.2zM1699.4 1199.8h1.2v38.2h-1.2zM1699.4 1239.9h1.2v38.2h-1.2zM1702.0 357.7h1.5v38.2h-1.5zM1705.8 357.7h1.2v38.2h-1.2zM1705.8 397.8h1.2v38.2h-1.2zM1705.8 437.9h1.2v38.2h-1.2zM1705.8 478.0h1.2v38.2h-1.2zM1705.8 518.1h1.2v38.2h-1.2zM1705.8 558.2h1.2v38.2h-1.2zM1705.8 598.3h1.2v38.2h-1.2zM1705.8 638.4h1.2v38.2h-1.2zM1705.8 678.5h1.2v38.2h-1.2zM1705.8 718.6h1.2v38.2h-1.2zM1705.8 758.7h1.2v38.2h-1.2zM1705.8 798.8h1.2v38.2h-1.2zM1705.8 838.9h1.2v38.2h-1.2zM1705.8 879.0h1.2v38.2h-1.2zM1705.8 919.1h1.2v38.2h-1.2zM1705.8 959.2h1.2v38.2h-1.2zM1705.8 999.3h1.2v38.2h-1.2zM1705.8 1039.4h1.2v38.2h-1.2zM1705.8 1079.5h1.2v38.2h-1.2zM1705.8 1119.6h1.2v38.2h-1.2zM1705.8 1159.7h1.2v38.2h-1.2zM1705.8 1199.8h1.2v38.2h-1.2zM1705.8 1239.9h1.2v38.2h-1.2zM1705.8 1280.0h1.2v38.2h-1.2zM1705.8 1320.1h1.2v38.2h-1.2zM1705.8 1360.2h1.2v38.2h-1.2zM1705.8 1400.3h1.2v38.2h-1.2zM1705.8 1440.4h1.2v26.6h-1.2zM1708.0 437.9h9.6v38.2h-9.6zM1708.0 478.0h9.6v38.2h-9.6zM1708.0 518.1h9.6v38.2h-9.6zM1708.0 558.2h9.6v38.2h-9.6zM1708.0 598.3h9.6v38.2h-9.6zM1708.0 638.4h9.6v38.2h-9.6zM1708.0 678.5h9.6v38.2h-9.6zM1708.0 718.6h9.6v38.2h-9.6zM1708.0 758.7h9.6v38.2h-9.6zM1708.0 798.8h9.6v38.2h-9.6zM1708.0 838.9h9.6v38.2h-9.6zM1708.0 879.0h9.6v38.2h-9.6zM1708.0 919.1h9.6v38.2h-9.6zM1708.0 959.2h9.6v38.2h-9.6zM1708.0 999.3h9.6v38.2h-9.6zM1708.0 1039.4h9.6v38.2h-9.6zM1708.0 1079.5h9.6v38.2h-9.6zM1707.0 1119.6h2.5v38.2h-2.5zM1711.4 1119.6h3.8v38.2h-3.8zM1711.4 1159.7h3.8v38.2h-3.8zM1711.4 1199.8h3.8v38.2h-3.8zM1711.4 1239.9h3.8v38.2h-3.8zM1711.4 1280.0h3.8v38.2h-3.8zM1711.4 1320.1h3.8v38.2h-3.8zM1711.4 1360.2h3.8v38.2h-3.8zM1711.4 1400.3h3.8v38.2h-3.8zM1711.4 1440.4h3.8v26.6h-3.8zM1719.0 437.9h29.0v38.2h-29.0zM1719.0 478.0h29.0v38.2h-29.0zM1719.0 518.1h29.0v38.2h-29.0zM1719.0 558.2h29.0v38.2h-29.0zM1719.0 598.3h29.0v38.2h-29.0zM1719.0 638.4h29.0v38.2h-29.0zM1719.0 678.5h29.0v38.2h-29.0zM1723.0 718.6h25.6v38.2h-25.6zM1723.0 758.7h25.6v38.2h-25.6zM1723.0 798.8h25.6v38.2h-25.6zM1723.0 838.9h25.6v38.2h-25.6zM1723.0 879.0h25.6v38.2h-25.6zM1723.0 919.1h25.6v38.2h-25.6zM1723.0 959.2h25.6v38.2h-25.6zM1723.0 999.3h25.6v38.2h-25.6zM1723.0 1039.4h25.6v38.2h-25.6zM1723.0 1079.5h25.6v38.2h-25.6zM1719.0 1119.6h2.7v38.2h-2.7zM1723.6 1119.6h3.6v38.2h-3.6zM1723.6 1159.7h3.6v38.2h-3.6zM1723.6 1199.8h3.6v38.2h-3.6zM1723.6 1239.9h3.6v38.2h-3.6zM1723.6 1280.0h3.6v38.2h-3.6zM1723.6 1320.1h3.6v38.2h-3.6zM1723.6 1400.3h3.6v38.2h-3.6zM1723.6 1440.4h3.6v26.6h-3.6zM1729.2 1119.6h2.1v38.2h-2.1zM1732.6 1119.6h3.9v38.2h-3.9zM1732.6 1159.7h3.9v38.2h-3.9zM1732.6 1199.8h3.9v38.2h-3.9zM1732.6 1239.9h3.9v38.2h-3.9zM1732.6 1280.0h3.9v38.2h-3.9zM1732.6 1320.1h3.9v38.2h-3.9zM1732.6 1360.2h3.9v38.2h-3.9zM1732.6 1400.3h3.9v38.2h-3.9zM1732.6 1440.4h3.9v26.6h-3.9zM1737.8 1119.6h5.3v38.2h-5.3zM1737.8 1159.7h5.3v38.2h-5.3zM1737.8 1199.8h5.3v38.2h-5.3zM1737.8 1239.9h5.3v38.2h-5.3zM1737.8 1280.0h5.3v38.2h-5.3zM1737.8 1320.1h5.3v38.2h-5.3zM1737.8 1360.2h5.3v38.2h-5.3zM1737.8 1400.3h5.3v38.2h-5.3zM1737.8 1440.4h5.3v26.6h-5.3zM1745.4 1119.6h3.2v38.2h-3.2zM1750.0 357.7h2.6v38.2h-2.6zM1750.0 397.8h2.6v38.2h-2.6zM1755.4 437.9h28.6v38.2h-28.6zM1755.4 478.0h28.6v38.2h-28.6zM1755.4 518.1h28.6v38.2h-28.6zM1755.4 558.2h28.6v38.2h-28.6zM1755.4 598.3h28.6v38.2h-28.6zM1755.4 638.4h28.6v38.2h-28.6zM1755.4 678.5h28.6v38.2h-28.6zM1755.4 718.6h28.6v38.2h-28.6zM1755.4 758.7h28.6v38.2h-28.6zM1755.4 798.8h28.6v38.2h-28.6zM1755.4 838.9h28.6v38.2h-28.6zM1755.4 879.0h28.6v38.2h-28.6zM1755.4 919.1h28.6v38.2h-28.6zM1755.4 959.2h28.6v38.2h-28.6zM1755.4 999.3h28.6v38.2h-28.6zM1755.4 1039.4h28.6v38.2h-28.6zM1755.4 1079.5h28.6v38.2h-28.6zM1755.4 1119.6h28.6v38.2h-28.6zM1755.4 1159.7h28.6v38.2h-28.6zM1755.4 1199.8h28.6v38.2h-28.6zM1755.4 1239.9h2.1v38.2h-2.1zM1758.8 1239.9h5.0v38.2h-5.0zM1758.8 1280.0h5.0v38.2h-5.0zM1758.8 1320.1h5.0v38.2h-5.0zM1758.8 1360.2h5.0v38.2h-5.0zM1758.8 1400.3h5.0v38.2h-5.0zM1758.8 1440.4h5.0v26.6h-5.0zM1765.6 1239.9h5.9v38.2h-5.9zM1765.6 1280.0h5.9v38.2h-5.9zM1765.6 1320.1h5.9v38.2h-5.9zM1765.6 1360.2h5.9v38.2h-5.9zM1765.6 1400.3h5.9v38.2h-5.9zM1765.6 1440.4h5.9v26.6h-5.9zM1772.8 1239.9h3.8v38.2h-3.8zM1777.8 1239.9h3.9v38.2h-3.9zM1777.8 1280.0h3.9v38.2h-3.9zM1777.8 1320.1h3.9v38.2h-3.9zM1777.8 1360.2h3.9v38.2h-3.9zM1777.8 1400.3h3.9v38.2h-3.9zM1777.8 1440.4h3.9v26.6h-3.9zM1785.0 357.7h3.9v38.2h-3.9zM1785.0 397.8h3.9v38.2h-3.9zM1785.0 437.9h3.9v38.2h-3.9zM1785.0 478.0h3.9v38.2h-3.9zM1785.0 518.1h3.9v38.2h-3.9zM1785.0 558.2h3.9v38.2h-3.9zM1785.0 598.3h3.9v38.2h-3.9zM1785.0 638.4h3.9v38.2h-3.9zM1785.0 678.5h3.9v38.2h-3.9zM1785.0 718.6h3.9v38.2h-3.9zM1785.0 758.7h3.9v38.2h-3.9zM1785.0 798.8h3.9v38.2h-3.9zM1785.0 838.9h3.9v38.2h-3.9zM1785.0 879.0h3.9v38.2h-3.9zM1785.0 919.1h3.9v38.2h-3.9zM1785.0 959.2h3.9v38.2h-3.9zM1785.0 999.3h3.9v38.2h-3.9zM1785.0 1039.4h3.9v38.2h-3.9zM1785.0 1079.5h3.9v38.2h-3.9zM1790.5 357.7h3.6v38.2h-3.6zM1795.5 357.7h3.2v38.2h-3.2zM1795.5 397.8h3.2v38.2h-3.2zM1795.5 437.9h3.2v38.2h-3.2zM1795.5 478.0h3.2v38.2h-3.2zM1795.5 518.1h3.2v38.2h-3.2zM1795.5 558.2h3.2v38.2h-3.2zM1795.5 598.3h3.2v38.2h-3.2zM1795.5 638.4h3.2v38.2h-3.2zM1795.5 678.5h3.2v38.2h-3.2zM1795.5 718.6h3.2v38.2h-3.2zM1795.5 758.7h3.2v38.2h-3.2zM1795.5 798.8h3.2v38.2h-3.2zM1795.5 838.9h3.2v38.2h-3.2zM1800.7 357.7h3.0v38.2h-3.0zM1800.7 397.8h3.0v38.2h-3.0zM1800.7 437.9h3.0v38.2h-3.0zM1800.7 478.0h3.0v38.2h-3.0zM1800.7 518.1h3.0v38.2h-3.0zM1800.7 558.2h3.0v38.2h-3.0zM1800.7 598.3h3.0v38.2h-3.0zM1800.7 638.4h3.0v38.2h-3.0zM1800.7 678.5h3.0v38.2h-3.0zM1800.7 718.6h3.0v38.2h-3.0zM1800.7 758.7h3.0v38.2h-3.0zM1800.7 798.8h3.0v38.2h-3.0zM1800.7 838.9h3.0v38.2h-3.0zM1800.7 879.0h3.0v38.2h-3.0zM1800.7 919.1h3.0v38.2h-3.0zM1800.7 959.2h3.0v38.2h-3.0zM1800.7 999.3h3.0v38.2h-3.0zM1800.7 1039.4h3.0v38.2h-3.0zM1800.7 1079.5h3.0v38.2h-3.0zM1806.2 357.7h1.8v38.2h-1.8zM1811.0 357.7h29.5v38.2h-29.5zM1811.0 397.8h29.5v38.2h-29.5zM1811.0 437.9h29.5v38.2h-29.5zM1811.0 558.2h13.0v38.2h-13.0zM1811.0 598.3h13.0v38.2h-13.0zM1811.0 638.4h13.0v38.2h-13.0zM1811.0 678.5h13.0v38.2h-13.0zM1811.0 718.6h13.0v38.2h-13.0zM1811.0 758.7h13.0v38.2h-13.0zM1811.0 798.8h13.0v38.2h-13.0zM1811.0 838.9h13.0v38.2h-13.0zM1811.0 879.0h13.0v38.2h-13.0zM1811.0 919.1h13.0v38.2h-13.0zM1811.0 959.2h13.0v38.2h-13.0zM1811.0 999.3h13.0v38.2h-13.0zM1811.0 1039.4h13.0v38.2h-13.0zM1811.0 1079.5h13.0v38.2h-13.0zM1811.0 1119.6h13.0v38.2h-13.0zM1811.0 1159.7h13.0v38.2h-13.0zM1826.0 558.2h14.5v38.2h-14.5zM1826.0 598.3h14.5v38.2h-14.5zM1826.0 638.4h14.5v38.2h-14.5zM1826.0 678.5h14.5v38.2h-14.5zM1826.0 718.6h14.5v38.2h-14.5zM1826.0 758.7h14.5v38.2h-14.5zM1826.0 798.8h14.5v38.2h-14.5zM1826.0 838.9h14.5v38.2h-14.5zM1826.0 879.0h14.5v38.2h-14.5zM1826.0 919.1h14.5v38.2h-14.5zM1826.0 959.2h14.5v38.2h-14.5zM1826.0 999.3h14.5v38.2h-14.5zM1826.0 1039.4h14.5v38.2h-14.5zM1826.0 1079.5h14.5v38.2h-14.5zM1826.0 1119.6h14.5v38.2h-14.5zM1826.0 1159.7h14.5v38.2h-14.5zM1842.0 558.2h5.3v38.2h-5.3zM1842.0 598.3h5.3v38.2h-5.3zM1842.0 638.4h5.3v38.2h-5.3zM1842.0 678.5h5.3v38.2h-5.3zM1842.0 718.6h5.3v38.2h-5.3zM1842.0 758.7h5.3v38.2h-5.3zM1842.0 798.8h5.3v38.2h-5.3zM1842.0 838.9h5.3v38.2h-5.3zM1842.0 879.0h5.3v38.2h-5.3zM1842.0 919.1h5.3v38.2h-5.3zM1842.0 959.2h5.3v38.2h-5.3zM1842.0 999.3h5.3v38.2h-5.3zM1842.0 1039.4h5.3v38.2h-5.3zM1842.0 1079.5h5.3v38.2h-5.3zM1842.0 1119.6h5.3v38.2h-5.3zM1842.0 1159.7h5.3v38.2h-5.3zM1849.5 558.2h4.8v38.2h-4.8zM1849.5 598.3h4.8v38.2h-4.8zM1849.5 638.4h4.8v38.2h-4.8zM1849.5 678.5h4.8v38.2h-4.8zM1849.5 718.6h4.8v38.2h-4.8zM1849.5 758.7h4.8v38.2h-4.8zM1849.5 798.8h4.8v38.2h-4.8zM1849.5 838.9h4.8v38.2h-4.8zM1849.5 879.0h4.8v38.2h-4.8zM1849.5 919.1h4.8v38.2h-4.8zM1849.5 959.2h4.8v38.2h-4.8zM1849.5 999.3h4.8v38.2h-4.8zM1849.5 1039.4h4.8v38.2h-4.8zM1849.5 1079.5h4.8v38.2h-4.8zM1849.5 1119.6h4.8v38.2h-4.8zM1849.5 1159.7h4.8v38.2h-4.8zM1856.8 558.2h2.8v38.2h-2.8zM1811.0 1199.8h4.0v38.2h-4.0zM1816.4 1199.8h3.6v38.2h-3.6zM1816.4 1239.9h3.6v38.2h-3.6zM1816.4 1280.0h3.6v38.2h-3.6zM1816.4 1320.1h3.6v38.2h-3.6zM1816.4 1360.2h3.6v38.2h-3.6zM1816.4 1400.3h3.6v38.2h-3.6zM1816.4 1440.4h3.6v26.6h-3.6zM1821.4 1199.8h2.9v38.2h-2.9zM1825.6 1199.8h3.6v38.2h-3.6zM1825.6 1239.9h3.6v38.2h-3.6zM1825.6 1280.0h3.6v38.2h-3.6zM1825.6 1320.1h3.6v38.2h-3.6zM1825.6 1360.2h3.6v38.2h-3.6zM1825.6 1400.3h3.6v38.2h-3.6zM1825.6 1440.4h3.6v26.6h-3.6zM1831.1 1199.8h3.1v38.2h-3.1zM1831.1 1239.9h3.1v38.2h-3.1zM1831.1 1280.0h3.1v38.2h-3.1zM1831.1 1320.1h3.1v38.2h-3.1zM1831.1 1360.2h3.1v38.2h-3.1zM1831.1 1400.3h3.1v38.2h-3.1zM1831.1 1440.4h3.1v26.6h-3.1zM1835.6 1199.8h2.9v38.2h-2.9zM1840.0 1199.8h4.5v38.2h-4.5zM1840.0 1239.9h4.5v38.2h-4.5zM1840.0 1280.0h4.5v38.2h-4.5zM1840.0 1320.1h4.5v38.2h-4.5zM1840.0 1360.2h4.5v38.2h-4.5zM1840.0 1400.3h4.5v38.2h-4.5zM1840.0 1440.4h4.5v26.6h-4.5zM1846.0 1199.8h3.6v38.2h-3.6zM1851.3 1199.8h2.6v38.2h-2.6zM1851.3 1239.9h2.6v38.2h-2.6zM1851.3 1280.0h2.6v38.2h-2.6zM1851.3 1320.1h2.6v38.2h-2.6zM1851.3 1360.2h2.6v38.2h-2.6zM1851.3 1400.3h2.6v38.2h-2.6zM1851.3 1440.4h2.6v26.6h-2.6zM1855.3 1199.8h3.8v38.2h-3.8zM1855.3 1239.9h3.8v38.2h-3.8zM1855.3 1280.0h3.8v38.2h-3.8zM1855.3 1320.1h3.8v38.2h-3.8zM1855.3 1360.2h3.8v38.2h-3.8zM1855.3 1400.3h3.8v38.2h-3.8zM1855.3 1440.4h3.8v26.6h-3.8zM1842.0 357.7h3.7v38.2h-3.7zM1847.0 357.7h2.2v38.2h-2.2zM1847.0 397.8h2.2v38.2h-2.2zM1847.0 437.9h2.2v38.2h-2.2zM1847.0 478.0h2.2v38.2h-2.2zM1847.0 518.1h2.2v38.2h-2.2zM1847.0 558.2h2.2v38.2h-2.2zM1847.0 598.3h2.2v38.2h-2.2zM1847.0 638.4h2.2v38.2h-2.2zM1847.0 678.5h2.2v38.2h-2.2zM1847.0 718.6h2.2v38.2h-2.2zM1847.0 758.7h2.2v38.2h-2.2zM1847.0 798.8h2.2v38.2h-2.2zM1847.0 838.9h2.2v38.2h-2.2zM1850.7 437.9h2.7v38.2h-2.7zM1850.7 478.0h2.7v38.2h-2.7zM1850.7 518.1h2.7v38.2h-2.7zM1850.7 558.2h2.7v38.2h-2.7zM1850.7 598.3h2.7v38.2h-2.7zM1850.7 638.4h2.7v38.2h-2.7zM1850.7 678.5h2.7v38.2h-2.7zM1850.7 718.6h2.7v38.2h-2.7zM1850.7 758.7h2.7v38.2h-2.7zM1850.7 798.8h2.7v38.2h-2.7zM1850.7 838.9h2.7v38.2h-2.7zM1850.7 879.0h2.7v38.2h-2.7zM1850.7 919.1h2.7v38.2h-2.7zM1850.7 959.2h2.7v38.2h-2.7zM1850.7 999.3h2.7v38.2h-2.7zM1850.7 1039.4h2.7v38.2h-2.7zM1850.7 1079.5h2.7v38.2h-2.7zM1850.7 1119.6h2.7v38.2h-2.7zM1850.7 1159.7h2.7v38.2h-2.7zM1850.7 1199.8h2.7v38.2h-2.7zM1850.7 1239.9h2.7v38.2h-2.7zM1850.7 1280.0h2.7v38.2h-2.7zM1850.7 1320.1h2.7v38.2h-2.7zM1850.7 1360.2h2.7v38.2h-2.7zM1850.7 1400.3h2.7v38.2h-2.7zM1850.7 1440.4h2.7v26.6h-2.7zM1856.0 357.7h2.1v38.2h-2.1zM1859.6 397.8h2.4v38.2h-2.4zM1859.6 437.9h2.4v38.2h-2.4zM1859.6 478.0h2.4v38.2h-2.4zM1859.6 518.1h2.4v38.2h-2.4zM1859.6 558.2h2.4v38.2h-2.4zM1859.6 598.3h2.4v38.2h-2.4zM1859.6 638.4h2.4v38.2h-2.4zM1859.6 678.5h2.4v38.2h-2.4zM1859.6 718.6h2.4v38.2h-2.4zM1859.6 758.7h2.4v38.2h-2.4zM1859.6 798.8h2.4v38.2h-2.4zM1859.6 838.9h2.4v38.2h-2.4zM1859.6 879.0h2.4v38.2h-2.4zM1859.6 919.1h2.4v38.2h-2.4zM1859.6 959.2h2.4v38.2h-2.4zM1859.6 999.3h2.4v38.2h-2.4zM1859.6 1039.4h2.4v38.2h-2.4zM1859.6 1079.5h2.4v38.2h-2.4zM1859.6 1119.6h2.4v38.2h-2.4zM1859.6 1159.7h2.4v38.2h-2.4zM1863.4 357.7h2.3v38.2h-2.3zM1863.4 397.8h2.3v38.2h-2.3zM1863.4 437.9h2.3v38.2h-2.3zM1863.4 478.0h2.3v38.2h-2.3zM1863.4 518.1h2.3v38.2h-2.3zM1863.4 558.2h2.3v38.2h-2.3zM1863.4 598.3h2.3v38.2h-2.3zM1863.4 638.4h2.3v38.2h-2.3zM1863.4 678.5h2.3v38.2h-2.3zM1863.4 718.6h2.3v38.2h-2.3zM1863.4 758.7h2.3v38.2h-2.3zM1863.4 798.8h2.3v38.2h-2.3zM1863.4 838.9h2.3v38.2h-2.3zM1863.4 879.0h2.3v38.2h-2.3zM1863.4 919.1h2.3v38.2h-2.3zM1863.4 959.2h2.3v38.2h-2.3zM1863.4 999.3h2.3v38.2h-2.3zM1863.4 1039.4h2.3v38.2h-2.3zM1863.4 1079.5h2.3v38.2h-2.3zM1863.4 1119.6h2.3v38.2h-2.3zM1863.4 1159.7h2.3v38.2h-2.3zM1863.4 1199.8h2.3v38.2h-2.3zM1863.4 1239.9h2.3v38.2h-2.3zM1863.4 1280.0h2.3v38.2h-2.3zM1863.4 1320.1h2.3v38.2h-2.3zM1863.4 1360.2h2.3v38.2h-2.3zM1863.4 1400.3h2.3v38.2h-2.3zM1863.4 1440.4h2.3v26.6h-2.3zM1867.5 357.7h4.4v38.2h-4.4zM1867.5 437.9h4.4v38.2h-4.4zM1867.5 478.0h4.4v38.2h-4.4zM1867.5 518.1h4.4v38.2h-4.4zM1867.5 558.2h4.4v38.2h-4.4zM1867.5 598.3h4.4v38.2h-4.4zM1867.5 638.4h4.4v38.2h-4.4zM1867.5 678.5h4.4v38.2h-4.4zM1867.5 718.6h4.4v38.2h-4.4zM1867.5 758.7h4.4v38.2h-4.4zM1867.5 798.8h4.4v38.2h-4.4zM1867.5 838.9h4.4v38.2h-4.4zM1873.7 357.7h3.8v38.2h-3.8zM1873.7 397.8h3.8v38.2h-3.8zM1873.7 437.9h3.8v38.2h-3.8zM1873.7 478.0h3.8v38.2h-3.8zM1873.7 518.1h3.8v38.2h-3.8zM1873.7 558.2h3.8v38.2h-3.8zM1873.7 598.3h3.8v38.2h-3.8zM1873.7 638.4h3.8v38.2h-3.8zM1873.7 678.5h3.8v38.2h-3.8zM1873.7 718.6h3.8v38.2h-3.8zM1873.7 758.7h3.8v38.2h-3.8zM1873.7 798.8h3.8v38.2h-3.8zM1873.7 838.9h3.8v38.2h-3.8zM1873.7 879.0h3.8v38.2h-3.8zM1873.7 919.1h3.8v38.2h-3.8zM1873.7 959.2h3.8v38.2h-3.8zM1873.7 999.3h3.8v38.2h-3.8zM1873.7 1039.4h3.8v38.2h-3.8zM1873.7 1079.5h3.8v38.2h-3.8zM1873.7 1119.6h3.8v38.2h-3.8zM1873.7 1159.7h3.8v38.2h-3.8zM1879.0 357.7h15.0v38.2h-15.0zM1879.0 397.8h15.0v38.2h-15.0zM1879.0 437.9h15.0v38.2h-15.0zM1879.0 558.2h15.0v38.2h-15.0zM1879.0 598.3h15.0v38.2h-15.0zM1879.0 638.4h15.0v38.2h-15.0zM1879.0 678.5h15.0v38.2h-15.0zM1879.0 718.6h15.0v38.2h-15.0zM1879.0 758.7h15.0v38.2h-15.0zM1879.0 798.8h15.0v38.2h-15.0zM1879.0 838.9h15.0v38.2h-15.0zM1879.0 879.0h15.0v38.2h-15.0zM1879.0 919.1h15.0v38.2h-15.0zM1879.0 959.2h15.0v38.2h-15.0zM1879.0 999.3h15.0v38.2h-15.0zM1879.0 1039.4h15.0v38.2h-15.0zM1879.0 1079.5h15.0v38.2h-15.0zM1879.0 1119.6h15.0v38.2h-15.0zM1879.0 1159.7h15.0v38.2h-15.0zM1879.0 1199.8h1.8v38.2h-1.8zM1879.0 1239.9h1.8v38.2h-1.8zM1879.0 1280.0h1.8v38.2h-1.8zM1879.0 1320.1h1.8v38.2h-1.8zM1879.0 1360.2h1.8v38.2h-1.8zM1879.0 1400.3h1.8v38.2h-1.8zM1879.0 1440.4h1.8v26.6h-1.8zM1882.3 1199.8h3.9v38.2h-3.9zM1888.6 1199.8h3.0v38.2h-3.0zM1896.0 357.7h3.2v38.2h-3.2zM1901.6 357.7h1.7v38.2h-1.7zM1901.6 397.8h1.7v38.2h-1.7zM1901.6 437.9h1.7v38.2h-1.7zM1901.6 558.2h1.7v38.2h-1.7zM1901.6 598.3h1.7v38.2h-1.7zM1901.6 638.4h1.7v38.2h-1.7zM1901.6 678.5h1.7v38.2h-1.7zM1901.6 718.6h1.7v38.2h-1.7zM1901.6 758.7h1.7v38.2h-1.7zM1901.6 798.8h1.7v38.2h-1.7zM1901.6 838.9h1.7v38.2h-1.7zM1901.6 879.0h1.7v38.2h-1.7zM1901.6 919.1h1.7v38.2h-1.7zM1901.6 959.2h1.7v38.2h-1.7zM1901.6 999.3h1.7v38.2h-1.7zM1901.6 1039.4h1.7v38.2h-1.7zM1901.6 1119.6h1.7v38.2h-1.7zM1904.6 357.7h2.1v38.2h-2.1zM1904.6 397.8h2.1v38.2h-2.1zM1904.6 437.9h2.1v38.2h-2.1zM1904.6 478.0h2.1v38.2h-2.1zM1904.6 518.1h2.1v38.2h-2.1zM1904.6 558.2h2.1v38.2h-2.1zM1904.6 598.3h2.1v38.2h-2.1zM1904.6 638.4h2.1v38.2h-2.1zM1904.6 678.5h2.1v38.2h-2.1zM1904.6 718.6h2.1v38.2h-2.1zM1904.6 758.7h2.1v38.2h-2.1zM1904.6 798.8h2.1v38.2h-2.1zM1904.6 838.9h2.1v38.2h-2.1zM1904.6 879.0h2.1v38.2h-2.1zM1904.6 919.1h2.1v38.2h-2.1zM1904.6 959.2h2.1v38.2h-2.1zM1904.6 999.3h2.1v38.2h-2.1zM1904.6 1119.6h2.1v38.2h-2.1zM1904.6 1159.7h2.1v38.2h-2.1zM1904.6 1199.8h2.1v38.2h-2.1zM1904.6 1239.9h2.1v38.2h-2.1zM1904.6 1280.0h2.1v38.2h-2.1zM1904.6 1320.1h2.1v38.2h-2.1zM1909.3 357.7h2.7v38.2h-2.7zM1912.6 397.8h13.0v38.2h-13.0zM1912.6 437.9h13.0v38.2h-13.0zM1912.6 478.0h13.0v38.2h-13.0zM1912.6 518.1h13.0v38.2h-13.0zM1912.6 558.2h13.0v38.2h-13.0zM1912.6 598.3h13.0v38.2h-13.0zM1912.6 638.4h13.0v38.2h-13.0zM1912.6 678.5h13.0v38.2h-13.0zM1912.6 718.6h13.0v38.2h-13.0zM1912.6 758.7h13.0v38.2h-13.0zM1912.6 798.8h13.0v38.2h-13.0zM1912.6 838.9h13.0v38.2h-13.0zM1912.6 879.0h13.0v38.2h-13.0zM1912.6 919.1h13.0v38.2h-13.0zM1912.6 959.2h13.0v38.2h-13.0zM1912.6 999.3h13.0v38.2h-13.0zM1912.6 1119.6h13.0v38.2h-13.0zM1926.0 357.7h2.2v38.2h-2.2zM1926.0 397.8h2.2v38.2h-2.2zM1926.0 437.9h2.2v38.2h-2.2zM1926.0 478.0h2.2v38.2h-2.2zM1926.0 518.1h2.2v38.2h-2.2zM1926.0 558.2h2.2v38.2h-2.2zM1929.5 357.7h2.6v38.2h-2.6zM1929.5 397.8h2.6v38.2h-2.6zM1929.5 437.9h2.6v38.2h-2.6zM1929.5 478.0h2.6v38.2h-2.6zM1929.5 518.1h2.6v38.2h-2.6zM1929.5 558.2h2.6v38.2h-2.6zM1929.5 598.3h2.6v38.2h-2.6zM1929.5 638.4h2.6v38.2h-2.6zM1929.5 678.5h2.6v38.2h-2.6zM1929.5 718.6h2.6v38.2h-2.6zM1929.5 758.7h2.6v38.2h-2.6zM1929.5 798.8h2.6v38.2h-2.6zM1929.5 838.9h2.6v38.2h-2.6zM1929.5 879.0h2.6v38.2h-2.6zM1929.5 919.1h2.6v38.2h-2.6zM1929.5 959.2h2.6v38.2h-2.6zM1929.5 999.3h2.6v38.2h-2.6zM1929.5 1039.4h2.6v38.2h-2.6zM1929.5 1079.5h2.6v38.2h-2.6zM1929.5 1119.6h2.6v38.2h-2.6zM1929.5 1159.7h2.6v38.2h-2.6zM1929.5 1199.8h2.6v38.2h-2.6zM1929.5 1239.9h2.6v38.2h-2.6zM1929.5 1280.0h2.6v38.2h-2.6zM1929.5 1320.1h2.6v38.2h-2.6zM1929.5 1360.2h2.6v38.2h-2.6zM1929.5 1400.3h2.6v38.2h-2.6zM1929.5 1440.4h2.6v26.6h-2.6zM1934.1 357.7h3.4v38.2h-3.4zM1934.1 397.8h3.4v38.2h-3.4zM1934.1 437.9h3.4v38.2h-3.4zM1934.1 478.0h3.4v38.2h-3.4zM1934.1 518.1h3.4v38.2h-3.4zM1934.1 558.2h3.4v38.2h-3.4zM1939.2 357.7h1.6v38.2h-1.6zM1939.2 397.8h1.6v38.2h-1.6zM1939.2 437.9h1.6v38.2h-1.6zM1939.2 478.0h1.6v38.2h-1.6zM1939.2 518.1h1.6v38.2h-1.6zM1939.2 558.2h1.6v38.2h-1.6zM1943.1 357.7h1.9v38.2h-1.9zM1946.6 357.7h35.2v38.2h-35.2zM1946.6 397.8h35.2v38.2h-35.2zM1946.6 437.9h35.2v38.2h-35.2zM1946.6 558.2h35.2v38.2h-35.2zM1946.6 598.3h35.2v38.2h-35.2zM1946.6 638.4h35.2v38.2h-35.2zM1946.6 678.5h18.4v38.2h-18.4zM1946.6 718.6h18.4v38.2h-18.4zM1946.6 758.7h18.4v38.2h-18.4zM1946.6 798.8h18.4v38.2h-18.4zM1946.6 838.9h18.4v38.2h-18.4zM1946.6 879.0h18.4v38.2h-18.4zM1946.6 919.1h18.4v38.2h-18.4zM1946.6 959.2h18.4v38.2h-18.4zM1946.6 999.3h18.4v38.2h-18.4zM1946.6 1039.4h18.4v38.2h-18.4zM1946.6 1079.5h18.4v38.2h-18.4zM1946.6 1119.6h18.4v38.2h-18.4zM1946.6 1159.7h18.4v38.2h-18.4zM1946.6 1199.8h18.4v38.2h-18.4zM1946.6 1239.9h18.4v38.2h-18.4zM1967.0 678.5h14.8v38.2h-14.8zM1967.0 718.6h14.8v38.2h-14.8zM1967.0 758.7h14.8v38.2h-14.8zM1967.0 798.8h14.8v38.2h-14.8zM1967.0 838.9h14.8v38.2h-14.8zM1967.0 879.0h14.8v38.2h-14.8zM1967.0 919.1h14.8v38.2h-14.8zM1967.0 959.2h14.8v38.2h-14.8zM1967.0 999.3h14.8v38.2h-14.8zM1967.0 1039.4h14.8v38.2h-14.8zM1967.0 1079.5h14.8v38.2h-14.8zM1967.0 1119.6h14.8v38.2h-14.8zM1967.0 1159.7h14.8v38.2h-14.8zM1967.0 1199.8h14.8v38.2h-14.8zM1967.0 1239.9h14.8v38.2h-14.8zM1946.0 1280.0h7.2v38.2h-7.2zM1946.0 1320.1h7.2v38.2h-7.2zM1946.0 1360.2h7.2v38.2h-7.2zM1946.0 1400.3h7.2v38.2h-7.2zM1946.0 1440.4h7.2v26.6h-7.2zM1955.1 1320.1h4.3v38.2h-4.3zM1955.1 1360.2h4.3v38.2h-4.3zM1955.1 1400.3h4.3v38.2h-4.3zM1955.1 1440.4h4.3v26.6h-4.3zM1961.9 1320.1h7.5v38.2h-7.5zM1961.9 1360.2h7.5v38.2h-7.5zM1961.9 1400.3h7.5v38.2h-7.5zM1961.9 1440.4h7.5v26.6h-7.5zM1970.8 1280.0h6.3v38.2h-6.3zM1979.4 1280.0h2.4v38.2h-2.4zM1979.4 1320.1h2.4v38.2h-2.4zM1979.4 1360.2h2.4v38.2h-2.4zM1979.4 1400.3h2.4v38.2h-2.4zM1979.4 1440.4h2.4v26.6h-2.4zM1984.8 357.7h2.8v38.2h-2.8zM1989.4 397.8h3.2v38.2h-3.2zM1989.4 437.9h3.2v38.2h-3.2zM1989.4 478.0h3.2v38.2h-3.2zM1989.4 518.1h3.2v38.2h-3.2zM1989.4 558.2h3.2v38.2h-3.2zM1989.4 598.3h3.2v38.2h-3.2zM1989.4 638.4h3.2v38.2h-3.2zM1989.4 678.5h3.2v38.2h-3.2zM1989.4 718.6h3.2v38.2h-3.2zM1989.4 758.7h3.2v38.2h-3.2zM1989.4 798.8h3.2v38.2h-3.2zM1989.4 838.9h3.2v38.2h-3.2zM1989.4 879.0h3.2v38.2h-3.2zM1989.4 919.1h3.2v38.2h-3.2zM1989.4 959.2h3.2v38.2h-3.2zM1989.4 999.3h3.2v38.2h-3.2zM1989.4 1039.4h3.2v38.2h-3.2zM1989.4 1079.5h3.2v38.2h-3.2zM1989.4 1119.6h3.2v38.2h-3.2zM1989.4 1159.7h3.2v38.2h-3.2zM1994.8 397.8h2.7v38.2h-2.7zM1994.8 437.9h2.7v38.2h-2.7zM1994.8 478.0h2.7v38.2h-2.7zM1994.8 518.1h2.7v38.2h-2.7zM1994.8 558.2h2.7v38.2h-2.7zM1994.8 598.3h2.7v38.2h-2.7zM1994.8 638.4h2.7v38.2h-2.7zM1994.8 678.5h2.7v38.2h-2.7zM1994.8 718.6h2.7v38.2h-2.7zM1994.8 758.7h2.7v38.2h-2.7zM1994.8 798.8h2.7v38.2h-2.7zM1994.8 838.9h2.7v38.2h-2.7zM1994.8 879.0h2.7v38.2h-2.7zM1994.8 919.1h2.7v38.2h-2.7zM1994.8 959.2h2.7v38.2h-2.7zM1994.8 999.3h2.7v38.2h-2.7zM1994.8 1039.4h2.7v38.2h-2.7zM1994.8 1079.5h2.7v38.2h-2.7zM1994.8 1119.6h2.7v38.2h-2.7zM1994.8 1159.7h2.7v38.2h-2.7zM1994.8 1199.8h2.7v38.2h-2.7zM1994.8 1239.9h2.7v38.2h-2.7zM1994.8 1280.0h2.7v38.2h-2.7zM1994.8 1320.1h2.7v38.2h-2.7zM1994.8 1360.2h2.7v38.2h-2.7zM1994.8 1400.3h2.7v38.2h-2.7zM1994.8 1440.4h2.7v26.6h-2.7zM2007.0 357.7h29.5v38.2h-29.5zM2007.0 397.8h29.5v38.2h-29.5zM2007.0 437.9h29.5v38.2h-29.5zM2007.0 478.0h29.5v38.2h-29.5zM2007.0 518.1h29.5v38.2h-29.5zM2007.0 558.2h29.5v38.2h-29.5zM2007.0 598.3h29.5v38.2h-29.5zM2007.0 638.4h29.5v38.2h-29.5zM2007.0 678.5h29.5v38.2h-29.5zM2007.0 718.6h29.5v38.2h-29.5zM2007.0 758.7h29.5v38.2h-29.5zM2007.0 798.8h29.5v38.2h-29.5zM2007.0 838.9h29.5v38.2h-29.5zM2007.0 879.0h29.5v38.2h-29.5zM2007.0 919.1h29.5v38.2h-29.5zM2007.0 959.2h29.5v38.2h-29.5zM2007.0 999.3h29.5v38.2h-29.5zM2007.0 1039.4h29.5v38.2h-29.5zM2007.0 1079.5h29.5v38.2h-29.5zM2007.0 1119.6h29.5v38.2h-29.5zM2007.0 1159.7h29.5v38.2h-29.5zM2007.0 1199.8h29.5v38.2h-29.5zM2007.0 1239.9h29.5v38.2h-29.5zM2008.0 1320.1h5.9v38.2h-5.9zM2008.0 1360.2h5.9v38.2h-5.9zM2008.0 1400.3h5.9v38.2h-5.9zM2008.0 1440.4h5.9v26.6h-5.9zM2016.0 1280.0h3.3v38.2h-3.3zM2016.0 1320.1h3.3v38.2h-3.3zM2016.0 1360.2h3.3v38.2h-3.3zM2016.0 1400.3h3.3v38.2h-3.3zM2016.0 1440.4h3.3v26.6h-3.3zM2027.3 1320.1h5.3v38.2h-5.3zM2027.3 1360.2h5.3v38.2h-5.3zM2027.3 1400.3h5.3v38.2h-5.3zM2027.3 1440.4h5.3v26.6h-5.3zM2034.5 1280.0h2.0v38.2h-2.0zM2036.5 357.7h3.0v38.2h-3.0zM2036.5 397.8h3.0v38.2h-3.0zM2036.5 437.9h3.0v38.2h-3.0zM2036.5 478.0h3.0v38.2h-3.0zM2036.5 518.1h3.0v38.2h-3.0zM2036.5 558.2h3.0v38.2h-3.0zM2036.5 598.3h3.0v38.2h-3.0zM2036.5 638.4h3.0v38.2h-3.0zM2036.5 678.5h3.0v38.2h-3.0zM2036.5 718.6h3.0v38.2h-3.0zM2036.5 758.7h3.0v38.2h-3.0zM2036.5 798.8h3.0v38.2h-3.0zM2036.5 838.9h3.0v38.2h-3.0zM2036.5 879.0h3.0v38.2h-3.0zM2036.5 919.1h3.0v38.2h-3.0zM2036.5 959.2h3.0v38.2h-3.0zM2036.5 999.3h3.0v38.2h-3.0zM2036.5 1039.4h3.0v38.2h-3.0zM2036.5 1079.5h3.0v38.2h-3.0zM2036.5 1119.6h3.0v38.2h-3.0zM2036.5 1159.7h3.0v38.2h-3.0zM2036.5 1199.8h3.0v38.2h-3.0zM2036.5 1280.0h3.0v38.2h-3.0zM2036.5 1320.1h3.0v38.2h-3.0zM2041.1 357.7h3.3v38.2h-3.3zM2046.1 357.7h4.2v38.2h-4.2zM2046.1 397.8h4.2v38.2h-4.2zM2046.1 437.9h4.2v38.2h-4.2zM2046.1 478.0h4.2v38.2h-4.2zM2046.1 518.1h4.2v38.2h-4.2zM2046.1 558.2h4.2v38.2h-4.2zM2046.1 598.3h4.2v38.2h-4.2zM2046.1 638.4h4.2v38.2h-4.2zM2046.1 678.5h4.2v38.2h-4.2zM2046.1 718.6h4.2v38.2h-4.2zM2046.1 758.7h4.2v38.2h-4.2zM2046.1 798.8h4.2v38.2h-4.2zM2046.1 838.9h4.2v38.2h-4.2zM2046.1 879.0h4.2v38.2h-4.2zM2046.1 919.1h4.2v38.2h-4.2zM2046.1 959.2h4.2v38.2h-4.2zM2046.1 999.3h4.2v38.2h-4.2zM2046.1 1039.4h4.2v38.2h-4.2zM2046.1 1079.5h4.2v38.2h-4.2zM2046.1 1119.6h4.2v38.2h-4.2zM2046.1 1159.7h4.2v38.2h-4.2zM2051.7 357.7h4.5v38.2h-4.5zM2051.7 397.8h4.5v38.2h-4.5zM2051.7 437.9h4.5v38.2h-4.5zM2051.7 478.0h4.5v38.2h-4.5zM2051.7 518.1h4.5v38.2h-4.5zM2051.7 558.2h4.5v38.2h-4.5zM2051.7 598.3h4.5v38.2h-4.5zM2051.7 638.4h4.5v38.2h-4.5zM2051.7 678.5h4.5v38.2h-4.5zM2051.7 718.6h4.5v38.2h-4.5zM2051.7 758.7h4.5v38.2h-4.5zM2051.7 798.8h4.5v38.2h-4.5zM2051.7 838.9h4.5v38.2h-4.5zM2051.7 879.0h4.5v38.2h-4.5zM2051.7 919.1h4.5v38.2h-4.5zM2051.7 959.2h4.5v38.2h-4.5zM2051.7 999.3h4.5v38.2h-4.5zM2051.7 1039.4h4.5v38.2h-4.5zM2051.7 1079.5h4.5v38.2h-4.5zM2051.7 1119.6h4.5v38.2h-4.5zM2051.7 1159.7h4.5v38.2h-4.5zM2051.7 1239.9h4.5v38.2h-4.5zM2051.7 1280.0h4.5v38.2h-4.5zM2051.7 1320.1h4.5v38.2h-4.5zM2058.5 357.7h4.6v38.2h-4.6zM2058.5 397.8h4.6v38.2h-4.6zM2058.5 437.9h4.6v38.2h-4.6zM2058.5 478.0h4.6v38.2h-4.6zM2058.5 518.1h4.6v38.2h-4.6zM2058.5 558.2h4.6v38.2h-4.6zM2058.5 598.3h4.6v38.2h-4.6zM2058.5 638.4h4.6v38.2h-4.6zM2058.5 678.5h4.6v38.2h-4.6zM2058.5 718.6h4.6v38.2h-4.6zM2058.5 758.7h4.6v38.2h-4.6zM2058.5 798.8h4.6v38.2h-4.6zM2058.5 838.9h4.6v38.2h-4.6zM2065.1 357.7h2.1v38.2h-2.1zM2065.1 397.8h2.1v38.2h-2.1zM2065.1 437.9h2.1v38.2h-2.1zM2065.1 478.0h2.1v38.2h-2.1zM2065.1 518.1h2.1v38.2h-2.1zM2065.1 558.2h2.1v38.2h-2.1zM2065.1 598.3h2.1v38.2h-2.1zM2065.1 638.4h2.1v38.2h-2.1zM2065.1 678.5h2.1v38.2h-2.1zM2065.1 718.6h2.1v38.2h-2.1zM2065.1 758.7h2.1v38.2h-2.1zM2065.1 798.8h2.1v38.2h-2.1zM2065.1 838.9h2.1v38.2h-2.1zM2065.1 879.0h2.1v38.2h-2.1zM2065.1 919.1h2.1v38.2h-2.1zM2065.1 959.2h2.1v38.2h-2.1zM2065.1 999.3h2.1v38.2h-2.1zM2065.1 1039.4h2.1v38.2h-2.1zM2065.1 1079.5h2.1v38.2h-2.1zM2065.1 1119.6h2.1v38.2h-2.1zM2065.1 1159.7h2.1v38.2h-2.1zM2065.1 1199.8h2.1v38.2h-2.1zM2065.1 1239.9h2.1v38.2h-2.1zM2065.1 1280.0h2.1v38.2h-2.1zM2065.1 1320.1h2.1v38.2h-2.1zM2068.0 357.7h24.0v38.2h-24.0zM2092.0 357.7h4.0v38.2h-4.0zM2092.0 397.8h4.0v38.2h-4.0zM2092.0 437.9h4.0v38.2h-4.0zM2092.0 478.0h4.0v38.2h-4.0zM2092.0 518.1h4.0v38.2h-4.0zM2092.0 558.2h4.0v38.2h-4.0zM2092.0 598.3h4.0v38.2h-4.0zM2092.0 638.4h4.0v38.2h-4.0zM2092.0 678.5h4.0v38.2h-4.0zM2092.0 718.6h4.0v38.2h-4.0zM2092.0 758.7h4.0v38.2h-4.0zM2092.0 798.8h4.0v38.2h-4.0zM2092.0 838.9h4.0v38.2h-4.0zM2092.0 879.0h4.0v38.2h-4.0zM2092.0 919.1h4.0v38.2h-4.0zM2092.0 959.2h4.0v38.2h-4.0zM2092.0 999.3h4.0v38.2h-4.0zM2092.0 1039.4h4.0v38.2h-4.0zM2092.0 1079.5h4.0v38.2h-4.0zM2092.0 1119.6h4.0v38.2h-4.0zM2092.0 1159.7h4.0v38.2h-4.0zM2092.0 1199.8h4.0v38.2h-4.0zM2092.0 1239.9h4.0v38.2h-4.0zM2092.0 1280.0h4.0v38.2h-4.0zM2092.0 1400.3h4.0v38.2h-4.0zM2092.0 1440.4h4.0v26.6h-4.0zM2097.2 357.7h4.9v38.2h-4.9zM2097.2 397.8h4.9v38.2h-4.9zM2097.2 437.9h4.9v38.2h-4.9zM2097.2 478.0h4.9v38.2h-4.9zM2097.2 518.1h4.9v38.2h-4.9zM2097.2 558.2h4.9v38.2h-4.9zM2097.2 598.3h4.9v38.2h-4.9zM2097.2 638.4h4.9v38.2h-4.9zM2097.2 678.5h4.9v38.2h-4.9zM2097.2 718.6h4.9v38.2h-4.9zM2097.2 758.7h4.9v38.2h-4.9zM2097.2 798.8h4.9v38.2h-4.9zM2097.2 838.9h4.9v38.2h-4.9zM2097.2 879.0h4.9v38.2h-4.9zM2097.2 919.1h4.9v38.2h-4.9zM2097.2 959.2h4.9v38.2h-4.9zM2097.2 999.3h4.9v38.2h-4.9zM2097.2 1039.4h4.9v38.2h-4.9zM2097.2 1079.5h4.9v38.2h-4.9zM2097.2 1119.6h4.9v38.2h-4.9zM2097.2 1159.7h4.9v38.2h-4.9zM2097.2 1199.8h4.9v38.2h-4.9zM2097.2 1239.9h4.9v38.2h-4.9zM2097.2 1280.0h4.9v38.2h-4.9zM2097.2 1360.2h4.9v38.2h-4.9zM2097.2 1400.3h4.9v38.2h-4.9zM2097.2 1440.4h4.9v26.6h-4.9zM2104.3 357.7h2.7v38.2h-2.7zM2108.7 357.7h12.9v38.2h-12.9zM2108.7 397.8h12.9v38.2h-12.9zM2108.7 437.9h12.9v38.2h-12.9zM2108.7 558.2h12.9v38.2h-12.9zM2108.7 598.3h12.9v38.2h-12.9zM2108.7 638.4h12.9v38.2h-12.9zM2108.7 678.5h12.9v38.2h-12.9zM2108.7 718.6h12.9v38.2h-12.9zM2108.7 758.7h12.9v38.2h-12.9zM2108.7 798.8h12.9v38.2h-12.9zM2108.7 838.9h12.9v38.2h-12.9zM2108.7 879.0h12.9v38.2h-12.9zM2108.7 919.1h12.9v38.2h-12.9zM2108.7 959.2h12.9v38.2h-12.9zM2108.7 999.3h12.9v38.2h-12.9zM2108.7 1039.4h12.9v38.2h-12.9zM2108.7 1079.5h12.9v38.2h-12.9zM2108.7 1119.6h12.9v38.2h-12.9zM2108.7 1159.7h12.9v38.2h-12.9zM2108.7 1199.8h12.9v38.2h-12.9zM2108.7 1239.9h12.9v38.2h-12.9zM2108.7 1280.0h12.9v38.2h-12.9zM2108.7 1320.1h12.9v38.2h-12.9zM2108.7 1360.2h12.9v38.2h-12.9zM2108.7 1400.3h12.9v38.2h-12.9zM2108.7 1440.4h12.9v26.6h-12.9zM2121.6 357.7h2.1v38.2h-2.1zM2126.3 357.7h2.5v38.2h-2.5zM2126.3 397.8h2.5v38.2h-2.5zM2126.3 437.9h2.5v38.2h-2.5zM2126.3 478.0h2.5v38.2h-2.5zM2126.3 518.1h2.5v38.2h-2.5zM2126.3 558.2h2.5v38.2h-2.5zM2126.3 598.3h2.5v38.2h-2.5zM2126.3 638.4h2.5v38.2h-2.5zM2126.3 678.5h2.5v38.2h-2.5zM2126.3 718.6h2.5v38.2h-2.5zM2126.3 758.7h2.5v38.2h-2.5zM2126.3 798.8h2.5v38.2h-2.5zM2126.3 838.9h2.5v38.2h-2.5zM2126.3 879.0h2.5v38.2h-2.5zM2126.3 919.1h2.5v38.2h-2.5zM2126.3 959.2h2.5v38.2h-2.5zM2126.3 999.3h2.5v38.2h-2.5zM2126.3 1039.4h2.5v38.2h-2.5zM2126.3 1079.5h2.5v38.2h-2.5zM2126.3 1119.6h2.5v38.2h-2.5zM2126.3 1159.7h2.5v38.2h-2.5zM2126.3 1199.8h2.5v38.2h-2.5zM2126.3 1239.9h2.5v38.2h-2.5zM2126.3 1280.0h2.5v38.2h-2.5zM2126.3 1320.1h2.5v38.2h-2.5zM2126.3 1360.2h2.5v38.2h-2.5zM2126.3 1400.3h2.5v38.2h-2.5zM2126.3 1440.4h2.5v26.6h-2.5zM2131.0 357.7h61.0v38.2h-61.0zM2131.0 397.8h61.0v38.2h-61.0zM2131.0 437.9h61.0v38.2h-61.0zM2131.0 558.2h61.0v38.2h-61.0zM2131.0 598.3h61.0v38.2h-61.0zM2131.0 638.4h61.0v38.2h-61.0zM2131.0 678.5h25.0v38.2h-25.0zM2131.0 718.6h25.0v38.2h-25.0zM2131.0 758.7h25.0v38.2h-25.0zM2131.0 798.8h25.0v38.2h-25.0zM2131.0 838.9h25.0v38.2h-25.0zM2131.0 879.0h25.0v38.2h-25.0zM2131.0 919.1h25.0v38.2h-25.0zM2131.0 959.2h25.0v38.2h-25.0zM2131.0 999.3h25.0v38.2h-25.0zM2131.0 1039.4h25.0v38.2h-25.0zM2131.0 1079.5h25.0v38.2h-25.0zM2131.0 1119.6h25.0v38.2h-25.0zM2131.0 1159.7h25.0v38.2h-25.0zM2158.6 678.5h33.4v38.2h-33.4zM2158.6 718.6h33.4v38.2h-33.4zM2158.6 758.7h33.4v38.2h-33.4zM2158.6 798.8h33.4v38.2h-33.4zM2158.6 838.9h33.4v38.2h-33.4zM2158.6 879.0h33.4v38.2h-33.4zM2158.6 919.1h33.4v38.2h-33.4zM2158.6 959.2h33.4v38.2h-33.4zM2158.6 999.3h33.4v38.2h-33.4zM2158.6 1039.4h33.4v38.2h-33.4zM2158.6 1079.5h33.4v38.2h-33.4zM2158.6 1119.6h33.4v38.2h-33.4zM2158.6 1159.7h33.4v38.2h-33.4zM2131.0 1199.8h5.5v38.2h-5.5zM2131.0 1239.9h5.5v38.2h-5.5zM2131.0 1280.0h5.5v38.2h-5.5zM2131.0 1320.1h5.5v38.2h-5.5zM2131.0 1360.2h5.5v38.2h-5.5zM2144.6 1199.8h3.5v38.2h-3.5zM2144.6 1239.9h3.5v38.2h-3.5zM2144.6 1280.0h3.5v38.2h-3.5zM2144.6 1320.1h3.5v38.2h-3.5zM2144.6 1360.2h3.5v38.2h-3.5zM2149.4 1239.9h3.7v38.2h-3.7zM2149.4 1280.0h3.7v38.2h-3.7zM2149.4 1320.1h3.7v38.2h-3.7zM2149.4 1360.2h3.7v38.2h-3.7zM2154.4 1199.8h6.6v38.2h-6.6zM2162.3 1199.8h4.5v38.2h-4.5zM2162.3 1239.9h4.5v38.2h-4.5zM2162.3 1280.0h4.5v38.2h-4.5zM2162.3 1320.1h4.5v38.2h-4.5zM2162.3 1360.2h4.5v38.2h-4.5zM2175.0 1199.8h7.9v38.2h-7.9zM2175.0 1280.0h7.9v38.2h-7.9zM2175.0 1320.1h7.9v38.2h-7.9zM2175.0 1360.2h7.9v38.2h-7.9zM2185.0 1199.8h2.8v38.2h-2.8zM2185.0 1280.0h2.8v38.2h-2.8zM2185.0 1320.1h2.8v38.2h-2.8zM2185.0 1360.2h2.8v38.2h-2.8zM2189.6 1199.8h2.4v38.2h-2.4zM2195.6 357.7h3.8v38.2h-3.8zM2195.6 397.8h3.8v38.2h-3.8zM2195.6 437.9h3.8v38.2h-3.8zM2195.6 478.0h3.8v38.2h-3.8zM2195.6 518.1h3.8v38.2h-3.8zM2195.6 558.2h3.8v38.2h-3.8zM2195.6 598.3h3.8v38.2h-3.8zM2195.6 638.4h3.8v38.2h-3.8zM2195.6 678.5h3.8v38.2h-3.8zM2195.6 718.6h3.8v38.2h-3.8zM2195.6 758.7h3.8v38.2h-3.8zM2195.6 798.8h3.8v38.2h-3.8zM2195.6 838.9h3.8v38.2h-3.8zM2201.5 357.7h5.1v38.2h-5.1zM2201.5 397.8h5.1v38.2h-5.1zM2201.5 437.9h5.1v38.2h-5.1zM2201.5 478.0h5.1v38.2h-5.1zM2201.5 518.1h5.1v38.2h-5.1zM2201.5 558.2h5.1v38.2h-5.1zM2201.5 598.3h5.1v38.2h-5.1zM2201.5 638.4h5.1v38.2h-5.1zM2201.5 678.5h5.1v38.2h-5.1zM2201.5 718.6h5.1v38.2h-5.1zM2201.5 758.7h5.1v38.2h-5.1zM2201.5 798.8h5.1v38.2h-5.1zM2201.5 838.9h5.1v38.2h-5.1zM2201.5 879.0h5.1v38.2h-5.1zM2201.5 919.1h5.1v38.2h-5.1zM2201.5 959.2h5.1v38.2h-5.1zM2201.5 999.3h5.1v38.2h-5.1zM2201.5 1039.4h5.1v38.2h-5.1zM2201.5 1079.5h5.1v38.2h-5.1zM2201.5 1119.6h5.1v38.2h-5.1zM2201.5 1159.7h5.1v38.2h-5.1zM2201.5 1199.8h5.1v38.2h-5.1zM2201.5 1239.9h5.1v38.2h-5.1zM2201.5 1280.0h5.1v38.2h-5.1zM2201.5 1320.1h5.1v38.2h-5.1zM2201.5 1360.2h5.1v38.2h-5.1zM2201.5 1400.3h5.1v38.2h-5.1zM2201.5 1440.4h5.1v26.6h-5.1zM2208.0 357.7h3.6v38.2h-3.6zM2213.4 357.7h4.0v38.2h-4.0zM2213.4 397.8h4.0v38.2h-4.0zM2213.4 437.9h4.0v38.2h-4.0zM2213.4 478.0h4.0v38.2h-4.0zM2213.4 518.1h4.0v38.2h-4.0zM2213.4 558.2h4.0v38.2h-4.0zM2213.4 598.3h4.0v38.2h-4.0zM2213.4 638.4h4.0v38.2h-4.0zM2213.4 678.5h4.0v38.2h-4.0zM2213.4 718.6h4.0v38.2h-4.0zM2213.4 758.7h4.0v38.2h-4.0zM2213.4 798.8h4.0v38.2h-4.0zM2213.4 838.9h4.0v38.2h-4.0zM2213.4 879.0h4.0v38.2h-4.0zM2213.4 919.1h4.0v38.2h-4.0zM2213.4 959.2h4.0v38.2h-4.0zM2213.4 999.3h4.0v38.2h-4.0zM2213.4 1039.4h4.0v38.2h-4.0zM2213.4 1079.5h4.0v38.2h-4.0zM2213.4 1119.6h4.0v38.2h-4.0zM2218.6 397.8h12.2v38.2h-12.2zM2218.6 437.9h12.2v38.2h-12.2zM2218.6 478.0h12.2v38.2h-12.2zM2218.6 518.1h12.2v38.2h-12.2zM2218.6 558.2h12.2v38.2h-12.2zM2218.6 598.3h12.2v38.2h-12.2zM2218.6 638.4h12.2v38.2h-12.2zM2218.6 678.5h12.2v38.2h-12.2zM2218.6 718.6h12.2v38.2h-12.2zM2218.6 758.7h12.2v38.2h-12.2zM2218.6 798.8h12.2v38.2h-12.2zM2218.6 838.9h12.2v38.2h-12.2zM2218.6 879.0h12.2v38.2h-12.2zM2218.6 919.1h12.2v38.2h-12.2zM2218.6 959.2h12.2v38.2h-12.2zM2218.6 999.3h12.2v38.2h-12.2zM2218.6 1039.4h12.2v38.2h-12.2zM2218.6 1079.5h12.2v38.2h-12.2zM2218.6 1119.6h12.2v38.2h-12.2zM2218.6 1159.7h12.2v38.2h-12.2zM2218.6 1199.8h12.2v38.2h-12.2zM2218.6 1239.9h12.2v38.2h-12.2zM2218.6 1280.0h12.2v38.2h-12.2zM2218.6 1320.1h12.2v38.2h-12.2zM2231.0 357.7h1.9v38.2h-1.9zM2231.0 397.8h1.9v38.2h-1.9zM2231.0 437.9h1.9v38.2h-1.9zM2231.0 478.0h1.9v38.2h-1.9zM2231.0 518.1h1.9v38.2h-1.9zM2231.0 558.2h1.9v38.2h-1.9zM2231.0 598.3h1.9v38.2h-1.9zM2231.0 638.4h1.9v38.2h-1.9zM2231.0 678.5h1.9v38.2h-1.9zM2231.0 718.6h1.9v38.2h-1.9zM2231.0 758.7h1.9v38.2h-1.9zM2231.0 798.8h1.9v38.2h-1.9zM2231.0 838.9h1.9v38.2h-1.9zM2231.0 879.0h1.9v38.2h-1.9zM2231.0 919.1h1.9v38.2h-1.9zM2231.0 959.2h1.9v38.2h-1.9zM2231.0 999.3h1.9v38.2h-1.9zM2231.0 1039.4h1.9v38.2h-1.9zM2231.0 1079.5h1.9v38.2h-1.9zM2231.0 1119.6h1.9v38.2h-1.9zM2231.0 1159.7h1.9v38.2h-1.9zM2231.0 1199.8h1.9v38.2h-1.9zM2234.6 357.7h1.4v38.2h-1.4zM2234.6 397.8h1.4v38.2h-1.4zM2234.6 437.9h1.4v38.2h-1.4zM2234.6 478.0h1.4v38.2h-1.4zM2234.6 518.1h1.4v38.2h-1.4zM2234.6 558.2h1.4v38.2h-1.4zM2234.6 598.3h1.4v38.2h-1.4zM2234.6 638.4h1.4v38.2h-1.4zM2234.6 678.5h1.4v38.2h-1.4zM2234.6 718.6h1.4v38.2h-1.4zM2234.6 758.7h1.4v38.2h-1.4zM2234.6 798.8h1.4v38.2h-1.4zM2234.6 838.9h1.4v38.2h-1.4zM2234.6 879.0h1.4v38.2h-1.4zM2234.6 919.1h1.4v38.2h-1.4zM2234.6 959.2h1.4v38.2h-1.4zM2234.6 999.3h1.4v38.2h-1.4zM2234.6 1039.4h1.4v38.2h-1.4zM2234.6 1079.5h1.4v38.2h-1.4zM2234.6 1119.6h1.4v38.2h-1.4zM2234.6 1159.7h1.4v38.2h-1.4zM2234.6 1199.8h1.4v38.2h-1.4zM2237.4 357.7h14.6v38.2h-14.6zM2255.0 397.8h10.0v38.2h-10.0zM2255.0 437.9h10.0v38.2h-10.0zM2255.0 478.0h10.0v38.2h-10.0zM2255.0 518.1h10.0v38.2h-10.0zM2255.0 558.2h10.0v38.2h-10.0zM2255.0 598.3h10.0v38.2h-10.0zM2255.0 638.4h10.0v38.2h-10.0zM2255.0 678.5h10.0v38.2h-10.0zM2255.0 718.6h10.0v38.2h-10.0zM2255.0 758.7h10.0v38.2h-10.0zM2255.0 798.8h10.0v38.2h-10.0zM2255.0 838.9h10.0v38.2h-10.0zM2255.0 879.0h10.0v38.2h-10.0zM2255.0 919.1h10.0v38.2h-10.0zM2255.0 959.2h10.0v38.2h-10.0zM2255.0 999.3h10.0v38.2h-10.0zM2255.0 1039.4h10.0v38.2h-10.0zM2255.0 1079.5h10.0v38.2h-10.0zM2255.0 1119.6h10.0v38.2h-10.0zM2255.0 1159.7h10.0v38.2h-10.0zM2255.0 1199.8h10.0v38.2h-10.0zM2255.0 1239.9h10.0v38.2h-10.0zM2255.0 1280.0h10.0v38.2h-10.0zM2255.0 1320.1h10.0v38.2h-10.0zM2255.0 1360.2h10.0v38.2h-10.0zM2255.0 1400.3h10.0v38.2h-10.0zM2255.0 1440.4h10.0v26.6h-10.0zM2269.0 357.7h2.4v38.2h-2.4zM2269.0 397.8h2.4v38.2h-2.4zM2269.0 437.9h2.4v38.2h-2.4zM2269.0 478.0h2.4v38.2h-2.4zM2269.0 518.1h2.4v38.2h-2.4zM2269.0 558.2h2.4v38.2h-2.4zM2269.0 598.3h2.4v38.2h-2.4zM2269.0 638.4h2.4v38.2h-2.4zM2269.0 678.5h2.4v38.2h-2.4zM2269.0 718.6h2.4v38.2h-2.4zM2269.0 758.7h2.4v38.2h-2.4zM2269.0 798.8h2.4v38.2h-2.4zM2269.0 838.9h2.4v38.2h-2.4zM2269.0 879.0h2.4v38.2h-2.4zM2269.0 919.1h2.4v38.2h-2.4zM2269.0 959.2h2.4v38.2h-2.4zM2269.0 999.3h2.4v38.2h-2.4zM2269.0 1039.4h2.4v38.2h-2.4zM2269.0 1079.5h2.4v38.2h-2.4zM2269.0 1119.6h2.4v38.2h-2.4zM2274.4 357.7h36.2v38.2h-36.2zM2313.0 357.7h3.0v38.2h-3.0zM2313.0 397.8h3.0v38.2h-3.0zM2313.0 437.9h3.0v38.2h-3.0zM2313.0 478.0h3.0v38.2h-3.0zM2313.0 518.1h3.0v38.2h-3.0zM2313.0 558.2h3.0v38.2h-3.0zM2313.0 598.3h3.0v38.2h-3.0zM2313.0 758.7h3.0v38.2h-3.0zM2313.0 798.8h3.0v38.2h-3.0zM2313.0 838.9h3.0v38.2h-3.0zM2313.0 879.0h3.0v38.2h-3.0zM2313.0 919.1h3.0v38.2h-3.0zM2318.0 357.7h3.8v38.2h-3.8zM2323.1 357.7h1.6v38.2h-1.6zM2327.0 397.8h9.0v38.2h-9.0zM2327.0 437.9h9.0v38.2h-9.0zM2327.0 478.0h9.0v38.2h-9.0zM2327.0 518.1h9.0v38.2h-9.0zM2327.0 558.2h9.0v38.2h-9.0zM2327.0 598.3h9.0v38.2h-9.0zM2327.0 638.4h9.0v38.2h-9.0zM2327.0 678.5h9.0v38.2h-9.0zM2327.0 718.6h9.0v38.2h-9.0zM2327.0 758.7h9.0v38.2h-9.0zM2338.0 357.7h12.0v38.2h-12.0zM2351.0 357.7h2.0v38.2h-2.0zM2351.0 397.8h2.0v38.2h-2.0zM2351.0 437.9h2.0v38.2h-2.0zM2351.0 478.0h2.0v38.2h-2.0zM2351.0 518.1h2.0v38.2h-2.0zM2351.0 558.2h2.0v38.2h-2.0zM2351.0 598.3h2.0v38.2h-2.0zM2351.0 638.4h2.0v38.2h-2.0zM2351.0 678.5h2.0v38.2h-2.0zM2351.0 718.6h2.0v38.2h-2.0zM2351.0 758.7h2.0v38.2h-2.0zM2351.0 798.8h2.0v38.2h-2.0zM2351.0 838.9h2.0v38.2h-2.0zM2351.0 879.0h2.0v38.2h-2.0zM2351.0 919.1h2.0v38.2h-2.0zM2351.0 959.2h2.0v38.2h-2.0zM2351.0 999.3h2.0v38.2h-2.0zM2351.0 1039.4h2.0v38.2h-2.0zM2351.0 1079.5h2.0v38.2h-2.0zM2351.0 1119.6h2.0v38.2h-2.0zM2351.0 1159.7h2.0v38.2h-2.0zM2351.0 1199.8h2.0v38.2h-2.0zM2351.0 1239.9h2.0v38.2h-2.0zM2351.0 1280.0h2.0v38.2h-2.0zM2351.0 1320.1h2.0v38.2h-2.0zM2351.0 1360.2h2.0v38.2h-2.0zM2351.0 1400.3h2.0v38.2h-2.0zM2351.0 1440.4h2.0v26.6h-2.0zM2355.0 357.7h87.0v38.2h-87.0zM2448.0 357.7h15.0v38.2h-15.0zM2448.0 397.8h15.0v38.2h-15.0zM2448.0 437.9h15.0v38.2h-15.0zM2448.0 558.2h15.0v38.2h-15.0zM2448.0 598.3h15.0v38.2h-15.0zM2448.0 638.4h15.0v38.2h-15.0zM2448.0 678.5h15.0v38.2h-15.0zM2448.0 718.6h15.0v38.2h-15.0zM2448.0 758.7h15.0v38.2h-15.0zM2448.0 798.8h15.0v38.2h-15.0zM2448.0 838.9h15.0v38.2h-15.0zM2448.0 879.0h15.0v38.2h-15.0zM2448.0 919.1h15.0v38.2h-15.0zM2448.0 959.2h15.0v38.2h-15.0zM2448.0 999.3h15.0v38.2h-15.0zM2448.0 1039.4h15.0v38.2h-15.0zM2448.0 1079.5h15.0v38.2h-15.0zM2448.0 1119.6h15.0v38.2h-15.0zM2448.0 1159.7h15.0v38.2h-15.0zM2448.0 1199.8h2.2v38.2h-2.2zM2448.0 1239.9h2.2v38.2h-2.2zM2448.0 1280.0h2.2v38.2h-2.2zM2448.0 1320.1h2.2v38.2h-2.2zM2448.0 1360.2h2.2v38.2h-2.2zM2448.0 1400.3h2.2v38.2h-2.2zM2448.0 1440.4h2.2v26.6h-2.2zM2452.4 1199.8h2.1v38.2h-2.1zM2457.0 1199.8h3.0v38.2h-3.0zM2457.0 1239.9h3.0v38.2h-3.0zM2457.0 1280.0h3.0v38.2h-3.0zM2457.0 1360.2h3.0v38.2h-3.0zM2457.0 1400.3h3.0v38.2h-3.0zM2457.0 1440.4h3.0v26.6h-3.0zM2461.5 1199.8h1.5v38.2h-1.5zM2461.5 1239.9h1.5v38.2h-1.5zM2461.5 1320.1h1.5v38.2h-1.5zM2461.5 1360.2h1.5v38.2h-1.5zM2461.5 1400.3h1.5v38.2h-1.5zM2461.5 1440.4h1.5v26.6h-1.5zM2465.0 357.7h3.6v38.2h-3.6zM2465.0 397.8h3.6v38.2h-3.6zM2465.0 437.9h3.6v38.2h-3.6zM2465.0 478.0h3.6v38.2h-3.6zM2465.0 518.1h3.6v38.2h-3.6zM2465.0 558.2h3.6v38.2h-3.6zM2465.0 598.3h3.6v38.2h-3.6zM2465.0 638.4h3.6v38.2h-3.6zM2465.0 678.5h3.6v38.2h-3.6zM2465.0 718.6h3.6v38.2h-3.6zM2465.0 758.7h3.6v38.2h-3.6zM2465.0 798.8h3.6v38.2h-3.6zM2465.0 838.9h3.6v38.2h-3.6zM2465.0 879.0h3.6v38.2h-3.6zM2465.0 919.1h3.6v38.2h-3.6zM2465.0 959.2h3.6v38.2h-3.6zM2465.0 999.3h3.6v38.2h-3.6zM2465.0 1039.4h3.6v38.2h-3.6zM2465.0 1079.5h3.6v38.2h-3.6zM2465.0 1119.6h3.6v38.2h-3.6zM2465.0 1159.7h3.6v38.2h-3.6zM2465.0 1199.8h3.6v38.2h-3.6zM2465.0 1239.9h3.6v38.2h-3.6zM2465.0 1280.0h3.6v38.2h-3.6zM2465.0 1320.1h3.6v38.2h-3.6zM2465.0 1360.2h3.6v38.2h-3.6zM2465.0 1400.3h3.6v38.2h-3.6zM2465.0 1440.4h3.6v26.6h-3.6zM2471.0 357.7h31.0v38.2h-31.0zM2471.0 397.8h31.0v38.2h-31.0zM2471.0 437.9h31.0v38.2h-31.0zM2471.0 558.2h18.0v38.2h-18.0zM2471.0 598.3h18.0v38.2h-18.0zM2471.0 638.4h18.0v38.2h-18.0zM2471.0 678.5h18.0v38.2h-18.0zM2471.0 718.6h18.0v38.2h-18.0zM2471.0 758.7h18.0v38.2h-18.0zM2471.0 798.8h18.0v38.2h-18.0zM2471.0 838.9h18.0v38.2h-18.0zM2491.0 598.3h11.0v38.2h-11.0zM2491.0 638.4h11.0v38.2h-11.0zM2491.0 678.5h11.0v38.2h-11.0zM2491.0 718.6h11.0v38.2h-11.0zM2491.0 758.7h11.0v38.2h-11.0zM2491.0 798.8h11.0v38.2h-11.0zM2491.0 838.9h11.0v38.2h-11.0zM2471.0 879.0h7.4v38.2h-7.4zM2471.0 919.1h7.4v38.2h-7.4zM2471.0 959.2h7.4v38.2h-7.4zM2471.0 999.3h7.4v38.2h-7.4zM2471.0 1039.4h7.4v38.2h-7.4zM2471.0 1079.5h7.4v38.2h-7.4zM2471.0 1119.6h7.4v38.2h-7.4zM2471.0 1159.7h7.4v38.2h-7.4zM2471.0 1199.8h7.4v38.2h-7.4zM2471.0 1239.9h7.4v38.2h-7.4zM2471.0 1320.1h7.4v38.2h-7.4zM2471.0 1360.2h7.4v38.2h-7.4zM2471.0 1400.3h7.4v38.2h-7.4zM2471.0 1440.4h7.4v26.6h-7.4zM2481.0 879.0h6.0v38.2h-6.0zM2481.0 919.1h6.0v38.2h-6.0zM2481.0 959.2h6.0v38.2h-6.0zM2481.0 999.3h6.0v38.2h-6.0zM2481.0 1039.4h6.0v38.2h-6.0zM2481.0 1079.5h6.0v38.2h-6.0zM2481.0 1119.6h6.0v38.2h-6.0zM2481.0 1159.7h6.0v38.2h-6.0zM2488.5 879.0h2.9v38.2h-2.9zM2488.5 919.1h2.9v38.2h-2.9zM2488.5 959.2h2.9v38.2h-2.9zM2488.5 999.3h2.9v38.2h-2.9zM2488.5 1039.4h2.9v38.2h-2.9zM2488.5 1079.5h2.9v38.2h-2.9zM2488.5 1119.6h2.9v38.2h-2.9zM2488.5 1159.7h2.9v38.2h-2.9zM2488.5 1199.8h2.9v38.2h-2.9zM2488.5 1320.1h2.9v38.2h-2.9zM2488.5 1360.2h2.9v38.2h-2.9zM2488.5 1400.3h2.9v38.2h-2.9zM2488.5 1440.4h2.9v26.6h-2.9zM2494.0 879.0h5.9v38.2h-5.9zM2501.1 879.0h0.9v38.2h-0.9zM2501.1 919.1h0.9v38.2h-0.9zM2501.1 959.2h0.9v38.2h-0.9zM2501.1 999.3h0.9v38.2h-0.9zM2501.1 1039.4h0.9v38.2h-0.9zM2501.1 1079.5h0.9v38.2h-0.9zM2501.1 1119.6h0.9v38.2h-0.9zM2501.1 1159.7h0.9v38.2h-0.9zM2507.0 397.8h17.0v38.2h-17.0zM2507.0 437.9h17.0v38.2h-17.0zM2507.0 478.0h17.0v38.2h-17.0zM2507.0 518.1h17.0v38.2h-17.0zM2507.0 558.2h17.0v38.2h-17.0zM2507.0 598.3h17.0v38.2h-17.0zM2507.0 638.4h17.0v38.2h-17.0zM2507.0 678.5h17.0v38.2h-17.0zM2507.0 718.6h17.0v38.2h-17.0zM2507.0 758.7h17.0v38.2h-17.0zM2507.0 798.8h17.0v38.2h-17.0zM2507.0 838.9h17.0v38.2h-17.0zM2507.0 879.0h4.7v38.2h-4.7zM2507.0 919.1h4.7v38.2h-4.7zM2507.0 959.2h4.7v38.2h-4.7zM2514.2 919.1h2.3v38.2h-2.3zM2514.2 999.3h2.3v38.2h-2.3zM2514.2 1039.4h2.3v38.2h-2.3zM2514.2 1079.5h2.3v38.2h-2.3zM2514.2 1119.6h2.3v38.2h-2.3zM2514.2 1159.7h2.3v38.2h-2.3zM2514.2 1199.8h2.3v38.2h-2.3zM2514.2 1239.9h2.3v38.2h-2.3zM2514.2 1280.0h2.3v38.2h-2.3zM2514.2 1320.1h2.3v38.2h-2.3zM2514.2 1440.4h2.3v26.6h-2.3zM2519.1 879.0h3.0v38.2h-3.0zM2519.1 919.1h3.0v38.2h-3.0zM2519.1 959.2h3.0v38.2h-3.0zM2531.0 357.7h45.0v38.2h-45.0zM2531.0 397.8h45.0v38.2h-45.0zM2531.0 437.9h45.0v38.2h-45.0zM2531.0 558.2h39.0v38.2h-39.0zM2531.0 598.3h39.0v38.2h-39.0zM2531.0 638.4h39.0v38.2h-39.0zM2531.0 678.5h39.0v38.2h-39.0zM2531.0 718.6h26.0v38.2h-26.0zM2531.0 758.7h26.0v38.2h-26.0zM2531.0 798.8h26.0v38.2h-26.0zM2531.0 838.9h26.0v38.2h-26.0zM2531.0 879.0h26.0v38.2h-26.0zM2531.0 919.1h26.0v38.2h-26.0zM2531.0 959.2h26.0v38.2h-26.0zM2531.0 999.3h26.0v38.2h-26.0zM2559.0 718.6h11.0v38.2h-11.0zM2559.0 758.7h11.0v38.2h-11.0zM2559.0 798.8h11.0v38.2h-11.0zM2559.0 838.9h11.0v38.2h-11.0zM2559.0 879.0h11.0v38.2h-11.0zM2559.0 919.1h11.0v38.2h-11.0zM2559.0 959.2h11.0v38.2h-11.0zM2559.0 999.3h11.0v38.2h-11.0zM2531.0 1039.4h8.1v38.2h-8.1zM2541.2 1039.4h7.5v38.2h-7.5zM2541.2 1079.5h7.5v38.2h-7.5zM2541.2 1119.6h7.5v38.2h-7.5zM2541.2 1159.7h7.5v38.2h-7.5zM2550.3 1039.4h5.1v38.2h-5.1zM2550.3 1079.5h5.1v38.2h-5.1zM2550.3 1119.6h5.1v38.2h-5.1zM2550.3 1159.7h5.1v38.2h-5.1zM2550.3 1199.8h5.1v38.2h-5.1zM2550.3 1239.9h5.1v38.2h-5.1zM2550.3 1280.0h5.1v38.2h-5.1zM2550.3 1320.1h5.1v38.2h-5.1zM2550.3 1400.3h5.1v38.2h-5.1zM2550.3 1440.4h5.1v26.6h-5.1zM2557.2 1039.4h6.9v38.2h-6.9zM2565.3 1039.4h3.1v38.2h-3.1zM2565.3 1079.5h3.1v38.2h-3.1zM2565.3 1119.6h3.1v38.2h-3.1zM2565.3 1159.7h3.1v38.2h-3.1zM2549.0 1199.8h6.6v38.2h-6.6zM2549.0 1239.9h6.6v38.2h-6.6zM2549.0 1280.0h6.6v38.2h-6.6zM2549.0 1320.1h6.6v38.2h-6.6zM2549.0 1360.2h6.6v38.2h-6.6zM2549.0 1400.3h6.6v38.2h-6.6zM2549.0 1440.4h6.6v26.6h-6.6zM2590.6 357.7h3.5v38.2h-3.5zM2590.6 397.8h3.5v38.2h-3.5zM2590.6 437.9h3.5v38.2h-3.5zM2590.6 478.0h3.5v38.2h-3.5zM2590.6 518.1h3.5v38.2h-3.5zM2590.6 558.2h3.5v38.2h-3.5zM2590.6 598.3h3.5v38.2h-3.5zM2590.6 638.4h3.5v38.2h-3.5zM2590.6 678.5h3.5v38.2h-3.5zM2590.6 718.6h3.5v38.2h-3.5zM2590.6 758.7h3.5v38.2h-3.5zM2590.6 798.8h3.5v38.2h-3.5zM2590.6 838.9h3.5v38.2h-3.5zM2590.6 879.0h3.5v38.2h-3.5zM2590.6 919.1h3.5v38.2h-3.5zM2590.6 959.2h3.5v38.2h-3.5zM2590.6 999.3h3.5v38.2h-3.5zM2590.6 1039.4h3.5v38.2h-3.5zM2590.6 1079.5h3.5v38.2h-3.5zM2590.6 1119.6h3.5v38.2h-3.5zM2590.6 1159.7h3.5v38.2h-3.5zM2590.6 1199.8h3.5v38.2h-3.5zM2590.6 1239.9h3.5v38.2h-3.5zM2590.6 1280.0h3.5v38.2h-3.5zM2590.6 1320.1h3.5v38.2h-3.5zM2590.6 1360.2h3.5v38.2h-3.5zM2590.6 1400.3h3.5v38.2h-3.5zM2596.7 357.7h2.5v38.2h-2.5zM2603.5 357.7h21.5v38.2h-21.5zM2603.5 397.8h21.5v38.2h-21.5zM2603.5 437.9h21.5v38.2h-21.5zM2603.5 558.2h21.5v38.2h-21.5zM2603.5 598.3h21.5v38.2h-21.5zM2603.5 638.4h21.5v38.2h-21.5zM2603.5 678.5h21.5v38.2h-21.5zM2603.5 718.6h21.5v38.2h-21.5zM2603.5 758.7h21.5v38.2h-21.5zM2603.5 798.8h21.5v38.2h-21.5zM2603.5 838.9h21.5v38.2h-21.5zM2603.5 879.0h21.5v38.2h-21.5zM2603.5 919.1h21.5v38.2h-21.5zM2603.5 959.2h21.5v38.2h-21.5zM2603.5 999.3h21.5v38.2h-21.5zM2603.5 1039.4h21.5v38.2h-21.5zM2603.5 1079.5h21.5v38.2h-21.5zM2603.5 1119.6h4.0v38.2h-4.0zM2609.2 1119.6h4.1v38.2h-4.1zM2609.2 1159.7h4.1v38.2h-4.1zM2609.2 1199.8h4.1v38.2h-4.1zM2609.2 1239.9h4.1v38.2h-4.1zM2609.2 1280.0h4.1v38.2h-4.1zM2609.2 1320.1h4.1v38.2h-4.1zM2609.2 1400.3h4.1v38.2h-4.1zM2615.2 1119.6h3.2v38.2h-3.2zM2615.2 1159.7h3.2v38.2h-3.2zM2615.2 1199.8h3.2v38.2h-3.2zM2615.2 1239.9h3.2v38.2h-3.2zM2615.2 1280.0h3.2v38.2h-3.2zM2615.2 1320.1h3.2v38.2h-3.2zM2615.2 1400.3h3.2v38.2h-3.2zM2619.8 1119.6h4.3v38.2h-4.3zM2627.6 357.7h9.4v38.2h-9.4zM2640.0 357.7h8.4v38.2h-8.4zM2650.1 357.7h7.0v38.2h-7.0zM2650.1 397.8h7.0v38.2h-7.0zM2650.1 437.9h7.0v38.2h-7.0zM2650.1 518.1h7.0v38.2h-7.0zM2650.1 598.3h7.0v38.2h-7.0zM2650.1 638.4h7.0v38.2h-7.0zM2650.1 678.5h7.0v38.2h-7.0zM2650.1 718.6h7.0v38.2h-7.0zM2650.1 758.7h7.0v38.2h-7.0zM2650.1 798.8h7.0v38.2h-7.0zM2650.1 838.9h7.0v38.2h-7.0zM2650.1 879.0h7.0v38.2h-7.0zM2650.1 919.1h7.0v38.2h-7.0zM2650.1 959.2h7.0v38.2h-7.0zM2659.4 357.7h2.7v38.2h-2.7zM2659.4 397.8h2.7v38.2h-2.7zM2659.4 437.9h2.7v38.2h-2.7zM2659.4 598.3h2.7v38.2h-2.7zM2659.4 638.4h2.7v38.2h-2.7zM2659.4 678.5h2.7v38.2h-2.7zM2659.4 718.6h2.7v38.2h-2.7zM2659.4 758.7h2.7v38.2h-2.7zM2659.4 798.8h2.7v38.2h-2.7zM2659.4 838.9h2.7v38.2h-2.7zM2659.4 879.0h2.7v38.2h-2.7zM2659.4 919.1h2.7v38.2h-2.7zM2659.4 959.2h2.7v38.2h-2.7zM2659.4 999.3h2.7v38.2h-2.7zM2659.4 1039.4h2.7v38.2h-2.7zM2659.4 1079.5h2.7v38.2h-2.7zM2659.4 1119.6h2.7v38.2h-2.7zM2659.4 1159.7h2.7v38.2h-2.7zM2659.4 1199.8h2.7v38.2h-2.7zM2663.5 357.7h7.9v38.2h-7.9zM2663.5 397.8h7.9v38.2h-7.9zM2663.5 437.9h7.9v38.2h-7.9zM2663.5 478.0h7.9v38.2h-7.9zM2663.5 518.1h7.9v38.2h-7.9zM2663.5 558.2h7.9v38.2h-7.9zM2663.5 598.3h7.9v38.2h-7.9zM2663.5 638.4h7.9v38.2h-7.9zM2663.5 678.5h7.9v38.2h-7.9zM2663.5 718.6h7.9v38.2h-7.9zM2663.5 758.7h7.9v38.2h-7.9zM2663.5 798.8h7.9v38.2h-7.9zM2663.5 838.9h7.9v38.2h-7.9zM2673.5 357.7h7.8v38.2h-7.8zM2673.5 397.8h7.8v38.2h-7.8zM2673.5 437.9h7.8v38.2h-7.8zM2673.5 478.0h7.8v38.2h-7.8zM2673.5 518.1h7.8v38.2h-7.8zM2673.5 598.3h7.8v38.2h-7.8zM2673.5 638.4h7.8v38.2h-7.8zM2673.5 678.5h7.8v38.2h-7.8zM2673.5 718.6h7.8v38.2h-7.8zM2673.5 758.7h7.8v38.2h-7.8zM2673.5 798.8h7.8v38.2h-7.8zM2673.5 838.9h7.8v38.2h-7.8zM2673.5 879.0h7.8v38.2h-7.8zM2673.5 919.1h7.8v38.2h-7.8zM2673.5 959.2h7.8v38.2h-7.8zM2673.5 999.3h7.8v38.2h-7.8zM2673.5 1039.4h7.8v38.2h-7.8zM2673.5 1079.5h7.8v38.2h-7.8zM2673.5 1119.6h7.8v38.2h-7.8zM2673.5 1159.7h7.8v38.2h-7.8zM2683.6 357.7h5.0v38.2h-5.0zM2683.6 397.8h5.0v38.2h-5.0zM2683.6 437.9h5.0v38.2h-5.0zM2683.6 558.2h5.0v38.2h-5.0zM2683.6 598.3h5.0v38.2h-5.0zM2683.6 638.4h5.0v38.2h-5.0zM2683.6 678.5h5.0v38.2h-5.0zM2683.6 718.6h5.0v38.2h-5.0zM2683.6 758.7h5.0v38.2h-5.0zM2683.6 798.8h5.0v38.2h-5.0zM2683.6 838.9h5.0v38.2h-5.0zM2683.6 879.0h5.0v38.2h-5.0zM2683.6 919.1h5.0v38.2h-5.0zM2683.6 959.2h5.0v38.2h-5.0zM2683.6 999.3h5.0v38.2h-5.0zM2683.6 1039.4h5.0v38.2h-5.0zM2683.6 1079.5h5.0v38.2h-5.0zM2683.6 1119.6h5.0v38.2h-5.0zM2683.6 1159.7h5.0v38.2h-5.0zM2688.6 357.7h4.8v38.2h-4.8zM2688.6 397.8h4.8v38.2h-4.8zM2688.6 437.9h4.8v38.2h-4.8zM2688.6 478.0h4.8v38.2h-4.8zM2688.6 518.1h4.8v38.2h-4.8zM2688.6 558.2h4.8v38.2h-4.8zM2688.6 598.3h4.8v38.2h-4.8zM2688.6 638.4h4.8v38.2h-4.8zM2688.6 678.5h4.8v38.2h-4.8zM2688.6 718.6h4.8v38.2h-4.8zM2688.6 758.7h4.8v38.2h-4.8zM2688.6 798.8h4.8v38.2h-4.8zM2688.6 838.9h4.8v38.2h-4.8zM2694.9 357.7h6.4v38.2h-6.4zM2694.9 397.8h6.4v38.2h-6.4zM2694.9 437.9h6.4v38.2h-6.4zM2694.9 478.0h6.4v38.2h-6.4zM2694.9 518.1h6.4v38.2h-6.4zM2694.9 558.2h6.4v38.2h-6.4zM2694.9 598.3h6.4v38.2h-6.4zM2694.9 638.4h6.4v38.2h-6.4zM2694.9 678.5h6.4v38.2h-6.4zM2694.9 718.6h6.4v38.2h-6.4zM2694.9 758.7h6.4v38.2h-6.4zM2694.9 798.8h6.4v38.2h-6.4zM2694.9 838.9h6.4v38.2h-6.4zM2694.9 879.0h6.4v38.2h-6.4zM2694.9 919.1h6.4v38.2h-6.4zM2694.9 959.2h6.4v38.2h-6.4zM2703.1 357.7h6.8v38.2h-6.8zM2703.1 397.8h6.8v38.2h-6.8zM2703.1 437.9h6.8v38.2h-6.8zM2703.1 478.0h6.8v38.2h-6.8zM2703.1 518.1h6.8v38.2h-6.8zM2703.1 558.2h6.8v38.2h-6.8zM2703.1 598.3h6.8v38.2h-6.8zM2703.1 638.4h6.8v38.2h-6.8zM2703.1 678.5h6.8v38.2h-6.8zM2703.1 718.6h6.8v38.2h-6.8zM2703.1 758.7h6.8v38.2h-6.8zM2703.1 798.8h6.8v38.2h-6.8zM2703.1 838.9h6.8v38.2h-6.8zM2711.6 357.7h6.5v38.2h-6.5zM2711.6 397.8h6.5v38.2h-6.5zM2711.6 437.9h6.5v38.2h-6.5zM2711.6 478.0h6.5v38.2h-6.5zM2711.6 518.1h6.5v38.2h-6.5zM2711.6 558.2h6.5v38.2h-6.5zM2711.6 598.3h6.5v38.2h-6.5zM2711.6 638.4h6.5v38.2h-6.5zM2711.6 678.5h6.5v38.2h-6.5zM2711.6 718.6h6.5v38.2h-6.5zM2711.6 758.7h6.5v38.2h-6.5zM2711.6 798.8h6.5v38.2h-6.5zM2711.6 838.9h6.5v38.2h-6.5zM2711.6 879.0h6.5v38.2h-6.5zM2711.6 919.1h6.5v38.2h-6.5zM2711.6 959.2h6.5v38.2h-6.5zM2720.3 357.7h6.0v38.2h-6.0zM2720.3 397.8h6.0v38.2h-6.0zM2720.3 437.9h6.0v38.2h-6.0zM2720.3 478.0h6.0v38.2h-6.0zM2720.3 518.1h6.0v38.2h-6.0zM2720.3 558.2h6.0v38.2h-6.0zM2720.3 598.3h6.0v38.2h-6.0zM2720.3 638.4h6.0v38.2h-6.0zM2720.3 678.5h6.0v38.2h-6.0zM2720.3 718.6h6.0v38.2h-6.0zM2720.3 758.7h6.0v38.2h-6.0zM2720.3 798.8h6.0v38.2h-6.0zM2720.3 838.9h6.0v38.2h-6.0zM2720.3 879.0h6.0v38.2h-6.0zM2720.3 919.1h6.0v38.2h-6.0zM2720.3 959.2h6.0v38.2h-6.0zM2728.1 357.7h6.6v38.2h-6.6zM2728.1 397.8h6.6v38.2h-6.6zM2728.1 437.9h6.6v38.2h-6.6zM2728.1 478.0h6.6v38.2h-6.6zM2728.1 518.1h6.6v38.2h-6.6zM2728.1 558.2h6.6v38.2h-6.6zM2728.1 598.3h6.6v38.2h-6.6zM2728.1 678.5h6.6v38.2h-6.6zM2728.1 718.6h6.6v38.2h-6.6zM2728.1 758.7h6.6v38.2h-6.6zM2728.1 798.8h6.6v38.2h-6.6zM2728.1 838.9h6.6v38.2h-6.6zM2737.1 357.7h7.8v38.2h-7.8zM2737.1 397.8h7.8v38.2h-7.8zM2737.1 437.9h7.8v38.2h-7.8zM2737.1 478.0h7.8v38.2h-7.8zM2737.1 518.1h7.8v38.2h-7.8zM2737.1 558.2h7.8v38.2h-7.8zM2737.1 598.3h7.8v38.2h-7.8zM2737.1 638.4h7.8v38.2h-7.8zM2737.1 678.5h7.8v38.2h-7.8zM2737.1 718.6h7.8v38.2h-7.8zM2737.1 758.7h7.8v38.2h-7.8zM2737.1 798.8h7.8v38.2h-7.8zM2737.1 838.9h7.8v38.2h-7.8zM2737.1 879.0h7.8v38.2h-7.8zM2737.1 919.1h7.8v38.2h-7.8zM2737.1 959.2h7.8v38.2h-7.8zM2747.3 357.7h6.2v38.2h-6.2zM2747.3 397.8h6.2v38.2h-6.2zM2747.3 437.9h6.2v38.2h-6.2zM2747.3 478.0h6.2v38.2h-6.2zM2747.3 518.1h6.2v38.2h-6.2zM2747.3 558.2h6.2v38.2h-6.2zM2747.3 598.3h6.2v38.2h-6.2zM2747.3 638.4h6.2v38.2h-6.2zM2747.3 678.5h6.2v38.2h-6.2zM2747.3 718.6h6.2v38.2h-6.2zM2747.3 758.7h6.2v38.2h-6.2zM2747.3 798.8h6.2v38.2h-6.2zM2747.3 838.9h6.2v38.2h-6.2zM2747.3 879.0h6.2v38.2h-6.2zM2747.3 919.1h6.2v38.2h-6.2zM2747.3 959.2h6.2v38.2h-6.2zM2747.3 999.3h6.2v38.2h-6.2zM2747.3 1039.4h6.2v38.2h-6.2zM2747.3 1079.5h6.2v38.2h-6.2zM2747.3 1119.6h6.2v38.2h-6.2zM2747.3 1159.7h6.2v38.2h-6.2zM2755.7 357.7h8.4v38.2h-8.4zM2755.7 397.8h8.4v38.2h-8.4zM2755.7 437.9h8.4v38.2h-8.4zM2755.7 478.0h8.4v38.2h-8.4zM2755.7 518.1h8.4v38.2h-8.4zM2755.7 558.2h8.4v38.2h-8.4zM2755.7 598.3h8.4v38.2h-8.4zM2755.7 638.4h8.4v38.2h-8.4zM2755.7 678.5h8.4v38.2h-8.4zM2755.7 718.6h8.4v38.2h-8.4zM2755.7 758.7h8.4v38.2h-8.4zM2755.7 798.8h8.4v38.2h-8.4zM2755.7 838.9h8.4v38.2h-8.4zM2765.3 357.7h3.2v38.2h-3.2zM2765.3 397.8h3.2v38.2h-3.2zM2765.3 437.9h3.2v38.2h-3.2zM2765.3 478.0h3.2v38.2h-3.2zM2765.3 518.1h3.2v38.2h-3.2zM2765.3 558.2h3.2v38.2h-3.2zM2765.3 598.3h3.2v38.2h-3.2zM2765.3 638.4h3.2v38.2h-3.2zM2765.3 678.5h3.2v38.2h-3.2zM2765.3 718.6h3.2v38.2h-3.2zM2765.3 758.7h3.2v38.2h-3.2zM2765.3 798.8h3.2v38.2h-3.2zM2765.3 838.9h3.2v38.2h-3.2zM2765.3 879.0h3.2v38.2h-3.2zM2765.3 919.1h3.2v38.2h-3.2zM2765.3 959.2h3.2v38.2h-3.2zM2770.2 357.7h3.8v38.2h-3.8zM2770.2 397.8h3.8v38.2h-3.8zM2770.2 437.9h3.8v38.2h-3.8zM2770.2 478.0h3.8v38.2h-3.8zM2770.2 518.1h3.8v38.2h-3.8zM2770.2 558.2h3.8v38.2h-3.8zM2770.2 598.3h3.8v38.2h-3.8zM2770.2 678.5h3.8v38.2h-3.8zM2770.2 718.6h3.8v38.2h-3.8zM2770.2 758.7h3.8v38.2h-3.8zM2770.2 798.8h3.8v38.2h-3.8zM2770.2 838.9h3.8v38.2h-3.8zM2775.8 357.7h4.8v38.2h-4.8zM2775.8 397.8h4.8v38.2h-4.8zM2775.8 437.9h4.8v38.2h-4.8zM2775.8 478.0h4.8v38.2h-4.8zM2775.8 518.1h4.8v38.2h-4.8zM2775.8 558.2h4.8v38.2h-4.8zM2775.8 598.3h4.8v38.2h-4.8zM2775.8 638.4h4.8v38.2h-4.8zM2775.8 678.5h4.8v38.2h-4.8zM2775.8 718.6h4.8v38.2h-4.8zM2775.8 758.7h4.8v38.2h-4.8zM2775.8 798.8h4.8v38.2h-4.8zM2775.8 838.9h4.8v38.2h-4.8zM2775.8 879.0h4.8v38.2h-4.8zM2775.8 919.1h4.8v38.2h-4.8zM2775.8 959.2h4.8v38.2h-4.8zM2782.1 357.7h6.6v38.2h-6.6zM2782.1 397.8h6.6v38.2h-6.6zM2782.1 437.9h6.6v38.2h-6.6zM2782.1 478.0h6.6v38.2h-6.6zM2782.1 518.1h6.6v38.2h-6.6zM2782.1 558.2h6.6v38.2h-6.6zM2782.1 598.3h6.6v38.2h-6.6zM2782.1 638.4h6.6v38.2h-6.6zM2782.1 678.5h6.6v38.2h-6.6zM2782.1 718.6h6.6v38.2h-6.6zM2782.1 758.7h6.6v38.2h-6.6zM2782.1 798.8h6.6v38.2h-6.6zM2782.1 838.9h6.6v38.2h-6.6zM2782.1 879.0h6.6v38.2h-6.6zM2782.1 919.1h6.6v38.2h-6.6zM2782.1 959.2h6.6v38.2h-6.6zM2782.1 999.3h6.6v38.2h-6.6zM2782.1 1039.4h6.6v38.2h-6.6zM2782.1 1079.5h6.6v38.2h-6.6zM2791.1 357.7h4.2v38.2h-4.2zM2791.1 397.8h4.2v38.2h-4.2zM2791.1 437.9h4.2v38.2h-4.2zM2791.1 478.0h4.2v38.2h-4.2zM2791.1 518.1h4.2v38.2h-4.2zM2791.1 558.2h4.2v38.2h-4.2zM2791.1 598.3h4.2v38.2h-4.2zM2791.1 638.4h4.2v38.2h-4.2zM2791.1 678.5h4.2v38.2h-4.2zM2791.1 718.6h4.2v38.2h-4.2zM2791.1 758.7h4.2v38.2h-4.2zM2791.1 798.8h4.2v38.2h-4.2zM2791.1 838.9h4.2v38.2h-4.2zM2797.2 357.7h6.7v38.2h-6.7zM2797.2 397.8h6.7v38.2h-6.7zM2797.2 437.9h6.7v38.2h-6.7zM2797.2 478.0h6.7v38.2h-6.7zM2797.2 518.1h6.7v38.2h-6.7zM2797.2 558.2h6.7v38.2h-6.7zM2797.2 598.3h6.7v38.2h-6.7zM2797.2 638.4h6.7v38.2h-6.7zM2797.2 678.5h6.7v38.2h-6.7zM2797.2 718.6h6.7v38.2h-6.7zM2797.2 758.7h6.7v38.2h-6.7zM2797.2 798.8h6.7v38.2h-6.7zM2797.2 838.9h6.7v38.2h-6.7zM2797.2 879.0h6.7v38.2h-6.7zM2797.2 919.1h6.7v38.2h-6.7zM2797.2 959.2h6.7v38.2h-6.7zM2805.2 357.7h4.3v38.2h-4.3zM2811.4 357.7h9.9v38.2h-9.9zM2811.4 397.8h9.9v38.2h-9.9zM2811.4 437.9h9.9v38.2h-9.9zM2811.4 478.0h9.9v38.2h-9.9zM2811.4 518.1h9.9v38.2h-9.9zM2811.4 558.2h9.9v38.2h-9.9zM2811.4 598.3h9.9v38.2h-9.9zM2811.4 638.4h9.9v38.2h-9.9zM2811.4 678.5h9.9v38.2h-9.9zM2811.4 718.6h9.9v38.2h-9.9zM2811.4 758.7h9.9v38.2h-9.9zM2811.4 798.8h9.9v38.2h-9.9zM2811.4 838.9h9.9v38.2h-9.9zM2811.4 879.0h9.9v38.2h-9.9zM2811.4 919.1h9.9v38.2h-9.9zM2811.4 959.2h9.9v38.2h-9.9zM2823.6 357.7h4.7v38.2h-4.7zM2823.6 397.8h4.7v38.2h-4.7zM2823.6 437.9h4.7v38.2h-4.7zM2823.6 478.0h4.7v38.2h-4.7zM2823.6 518.1h4.7v38.2h-4.7zM2823.6 558.2h4.7v38.2h-4.7zM2823.6 598.3h4.7v38.2h-4.7zM2823.6 638.4h4.7v38.2h-4.7zM2823.6 678.5h4.7v38.2h-4.7zM2823.6 718.6h4.7v38.2h-4.7zM2823.6 758.7h4.7v38.2h-4.7zM2823.6 798.8h4.7v38.2h-4.7zM2823.6 838.9h4.7v38.2h-4.7zM2823.6 879.0h4.7v38.2h-4.7zM2823.6 919.1h4.7v38.2h-4.7zM2823.6 959.2h4.7v38.2h-4.7zM2829.5 357.7h4.9v38.2h-4.9zM2829.5 397.8h4.9v38.2h-4.9zM2829.5 437.9h4.9v38.2h-4.9zM2829.5 478.0h4.9v38.2h-4.9zM2829.5 518.1h4.9v38.2h-4.9zM2829.5 558.2h4.9v38.2h-4.9zM2829.5 598.3h4.9v38.2h-4.9zM2829.5 638.4h4.9v38.2h-4.9zM2829.5 678.5h4.9v38.2h-4.9zM2829.5 718.6h4.9v38.2h-4.9zM2829.5 758.7h4.9v38.2h-4.9zM2829.5 798.8h4.9v38.2h-4.9zM2829.5 838.9h4.9v38.2h-4.9zM2836.1 357.7h6.3v38.2h-6.3zM2836.1 397.8h6.3v38.2h-6.3zM2836.1 437.9h6.3v38.2h-6.3zM2836.1 478.0h6.3v38.2h-6.3zM2836.1 518.1h6.3v38.2h-6.3zM2836.1 558.2h6.3v38.2h-6.3zM2836.1 598.3h6.3v38.2h-6.3zM2836.1 638.4h6.3v38.2h-6.3zM2836.1 678.5h6.3v38.2h-6.3zM2836.1 718.6h6.3v38.2h-6.3zM2836.1 758.7h6.3v38.2h-6.3zM2836.1 798.8h6.3v38.2h-6.3zM2836.1 838.9h6.3v38.2h-6.3zM2836.1 879.0h6.3v38.2h-6.3zM2836.1 919.1h6.3v38.2h-6.3zM2836.1 959.2h6.3v38.2h-6.3zM2844.5 357.7h6.6v38.2h-6.6zM2844.5 397.8h6.6v38.2h-6.6zM2844.5 437.9h6.6v38.2h-6.6zM2844.5 478.0h6.6v38.2h-6.6zM2844.5 518.1h6.6v38.2h-6.6zM2844.5 558.2h6.6v38.2h-6.6zM2844.5 598.3h6.6v38.2h-6.6zM2844.5 638.4h6.6v38.2h-6.6zM2844.5 678.5h6.6v38.2h-6.6zM2844.5 718.6h6.6v38.2h-6.6zM2844.5 758.7h6.6v38.2h-6.6zM2844.5 798.8h6.6v38.2h-6.6zM2844.5 838.9h6.6v38.2h-6.6zM2844.5 879.0h6.6v38.2h-6.6zM2844.5 919.1h6.6v38.2h-6.6zM2844.5 959.2h6.6v38.2h-6.6zM2844.5 999.3h6.6v38.2h-6.6zM2844.5 1039.4h6.6v38.2h-6.6zM2844.5 1079.5h6.6v38.2h-6.6zM2844.5 1119.6h6.6v38.2h-6.6zM2844.5 1159.7h6.6v38.2h-6.6zM2853.1 357.7h5.8v38.2h-5.8zM2853.1 397.8h5.8v38.2h-5.8zM2853.1 437.9h5.8v38.2h-5.8zM2853.1 478.0h5.8v38.2h-5.8zM2853.1 518.1h5.8v38.2h-5.8zM2853.1 558.2h5.8v38.2h-5.8zM2853.1 598.3h5.8v38.2h-5.8zM2853.1 638.4h5.8v38.2h-5.8zM2853.1 678.5h5.8v38.2h-5.8zM2853.1 718.6h5.8v38.2h-5.8zM2853.1 758.7h5.8v38.2h-5.8zM2853.1 798.8h5.8v38.2h-5.8zM2853.1 838.9h5.8v38.2h-5.8zM2861.1 357.7h9.1v38.2h-9.1zM2861.1 397.8h9.1v38.2h-9.1zM2861.1 437.9h9.1v38.2h-9.1zM2861.1 478.0h9.1v38.2h-9.1zM2861.1 518.1h9.1v38.2h-9.1zM2861.1 558.2h9.1v38.2h-9.1zM2861.1 598.3h9.1v38.2h-9.1zM2861.1 638.4h9.1v38.2h-9.1zM2861.1 678.5h9.1v38.2h-9.1zM2861.1 718.6h9.1v38.2h-9.1zM2861.1 758.7h9.1v38.2h-9.1zM2861.1 798.8h9.1v38.2h-9.1zM2861.1 838.9h9.1v38.2h-9.1zM2861.1 879.0h9.1v38.2h-9.1zM2861.1 919.1h9.1v38.2h-9.1zM2861.1 959.2h9.1v38.2h-9.1zM2871.4 357.7h6.6v38.2h-6.6zM2871.4 397.8h6.6v38.2h-6.6zM2871.4 437.9h6.6v38.2h-6.6zM2871.4 478.0h6.6v38.2h-6.6zM2871.4 518.1h6.6v38.2h-6.6zM2871.4 558.2h6.6v38.2h-6.6zM2871.4 598.3h6.6v38.2h-6.6zM2871.4 638.4h6.6v38.2h-6.6zM2871.4 678.5h6.6v38.2h-6.6zM2871.4 718.6h6.6v38.2h-6.6zM2871.4 758.7h6.6v38.2h-6.6zM2871.4 798.8h6.6v38.2h-6.6zM2871.4 838.9h6.6v38.2h-6.6z"/><path fill="#cbcbf0" d="M442.0 357.7h8.0v38.2h-8.0zM456.0 357.7h57.0v38.2h-57.0zM481.4 598.3h31.6v38.2h-31.6zM518.0 357.7h38.5v38.2h-38.5zM518.0 598.3h38.5v38.2h-38.5zM535.4 798.8h11.9v38.2h-11.9zM563.0 357.7h52.7v38.2h-52.7zM563.0 598.3h52.7v38.2h-52.7zM563.0 798.8h52.7v38.2h-52.7zM570.0 1039.4h46.0v38.2h-46.0zM570.0 1159.7h6.9v38.2h-6.9zM579.4 1159.7h9.3v38.2h-9.3zM590.3 1159.7h18.0v38.2h-18.0zM610.6 1159.7h5.4v38.2h-5.4zM624.0 357.7h42.8v38.2h-42.8zM624.0 598.3h30.0v38.2h-30.0zM624.0 798.8h30.0v38.2h-30.0zM624.0 1039.4h30.0v38.2h-30.0zM636.8 1239.9h7.1v38.2h-7.1zM651.3 1239.9h2.7v38.2h-2.7zM675.0 357.7h27.7v38.2h-27.7zM675.0 598.3h9.3v38.2h-9.3zM675.0 798.8h9.3v38.2h-9.3zM685.8 798.8h11.7v38.2h-11.7zM699.7 598.3h3.0v38.2h-3.0zM708.0 357.7h53.5v38.2h-53.5zM708.0 598.3h53.5v38.2h-53.5zM708.0 798.8h53.5v38.2h-53.5zM708.0 999.3h53.5v38.2h-53.5zM708.0 1199.8h47.8v38.2h-47.8zM708.0 1400.3h43.0v38.2h-43.0zM770.0 357.7h43.5v38.2h-43.5zM770.0 598.3h43.5v38.2h-43.5zM770.0 798.8h25.0v38.2h-25.0zM770.0 999.3h25.0v38.2h-25.0zM770.0 1199.8h25.0v38.2h-25.0zM770.0 1400.3h25.0v38.2h-25.0zM801.3 999.3h4.4v38.2h-4.4zM801.3 1199.8h4.4v38.2h-4.4zM801.3 1400.3h4.4v38.2h-4.4zM807.2 798.8h3.8v38.2h-3.8zM807.2 999.3h3.8v38.2h-3.8zM807.2 1199.8h3.8v38.2h-3.8zM807.2 1400.3h3.8v38.2h-3.8zM817.0 357.7h60.3v38.2h-60.3zM817.0 598.3h60.3v38.2h-60.3zM817.0 798.8h60.3v38.2h-60.3zM817.0 999.3h36.0v38.2h-36.0zM856.0 999.3h21.3v38.2h-21.3zM817.0 1199.8h15.2v38.2h-15.2zM817.0 1400.3h15.2v38.2h-15.2zM834.7 1199.8h11.2v38.2h-11.2zM834.7 1400.3h11.2v38.2h-11.2zM847.8 1199.8h5.2v38.2h-5.2zM847.8 1400.3h5.2v38.2h-5.2zM856.0 1199.8h5.6v38.2h-5.6zM856.0 1400.3h5.6v38.2h-5.6zM864.0 1199.8h11.6v38.2h-11.6zM864.0 1400.3h11.6v38.2h-11.6zM882.0 357.7h50.0v38.2h-50.0zM882.0 598.3h50.0v38.2h-50.0zM882.0 798.8h50.0v38.2h-50.0zM882.0 999.3h50.0v38.2h-50.0zM882.0 1199.8h50.0v38.2h-50.0zM882.0 1400.3h50.0v38.2h-50.0zM941.0 357.7h73.0v38.2h-73.0zM941.0 598.3h73.0v38.2h-73.0zM941.0 798.8h73.0v38.2h-73.0zM941.0 999.3h73.0v38.2h-73.0zM941.0 1199.8h73.0v38.2h-73.0zM941.0 1400.3h73.0v38.2h-73.0zM1017.0 357.7h33.0v38.2h-33.0zM1017.0 598.3h33.0v38.2h-33.0zM1017.0 798.8h33.0v38.2h-33.0zM1017.0 999.3h33.0v38.2h-33.0zM1017.0 1199.8h33.0v38.2h-33.0zM1017.0 1400.3h33.0v38.2h-33.0zM1059.0 357.7h40.0v38.2h-40.0zM1059.0 598.3h40.0v38.2h-40.0zM1059.0 798.8h40.0v38.2h-40.0zM1059.0 999.3h40.0v38.2h-40.0zM1059.0 1199.8h40.0v38.2h-40.0zM1059.0 1400.3h40.0v38.2h-40.0zM1104.0 357.7h51.0v38.2h-51.0zM1104.0 598.3h51.0v38.2h-51.0zM1104.0 798.8h51.0v38.2h-51.0zM1104.0 999.3h51.0v38.2h-51.0zM1104.0 1199.8h51.0v38.2h-51.0zM1104.0 1400.3h47.0v38.2h-47.0zM1159.0 357.7h30.0v38.2h-30.0zM1159.0 598.3h30.0v38.2h-30.0zM1159.0 798.8h15.0v38.2h-15.0zM1159.0 999.3h7.4v38.2h-7.4zM1168.0 999.3h9.1v38.2h-9.1zM1179.2 999.3h7.2v38.2h-7.2zM1188.4 999.3h1.6v38.2h-1.6zM1195.0 357.7h19.0v38.2h-19.0zM1195.0 598.3h19.0v38.2h-19.0zM1192.0 798.8h2.7v38.2h-2.7zM1196.4 798.8h5.5v38.2h-5.5zM1203.8 798.8h5.6v38.2h-5.6zM1211.3 798.8h2.7v38.2h-2.7zM1219.0 357.7h14.0v38.2h-14.0zM1219.0 598.3h14.0v38.2h-14.0zM1219.0 798.8h14.0v38.2h-14.0zM1242.0 357.7h52.6v38.2h-52.6zM1242.0 598.3h52.6v38.2h-52.6zM1242.0 798.8h52.6v38.2h-52.6zM1242.0 999.3h52.6v38.2h-52.6zM1242.0 1199.8h19.5v38.2h-19.5zM1263.0 1199.8h12.7v38.2h-12.7zM1278.0 1199.8h16.3v38.2h-16.3zM1278.0 1400.3h16.3v38.2h-16.3zM1300.0 357.7h17.0v38.2h-17.0zM1300.0 598.3h17.0v38.2h-17.0zM1300.0 798.8h17.0v38.2h-17.0zM1300.0 999.3h8.0v38.2h-8.0zM1310.4 999.3h5.7v38.2h-5.7zM1334.0 357.7h14.0v38.2h-14.0zM1334.0 598.3h14.0v38.2h-14.0zM1334.0 798.8h14.0v38.2h-14.0zM1334.0 999.3h14.0v38.2h-14.0zM1353.0 357.7h18.0v38.2h-18.0zM1353.0 598.3h18.0v38.2h-18.0zM1353.0 798.8h18.0v38.2h-18.0zM1353.0 999.3h18.0v38.2h-18.0zM1376.0 357.7h56.0v38.2h-56.0zM1376.0 598.3h27.0v38.2h-27.0zM1376.0 798.8h27.0v38.2h-27.0zM1408.0 558.2h24.0v38.2h-24.0zM1408.0 598.3h24.0v38.2h-24.0zM1376.0 999.3h27.0v38.2h-27.0zM1376.0 1199.8h27.0v38.2h-27.0zM1416.9 999.3h6.6v38.2h-6.6zM1441.0 357.7h59.0v38.2h-59.0zM1441.0 558.2h46.0v38.2h-46.0zM1441.0 598.3h46.0v38.2h-46.0zM1490.0 437.9h10.0v38.2h-10.0zM1461.6 1280.0h3.3v38.2h-3.3zM1461.6 1360.2h3.3v38.2h-3.3zM1461.6 1440.4h3.3v26.6h-3.3zM1503.0 357.7h37.0v38.2h-37.0zM1503.0 437.9h37.0v38.2h-37.0zM1558.0 357.7h34.0v38.2h-34.0zM1558.0 478.0h34.0v38.2h-34.0zM1558.0 518.1h34.0v38.2h-34.0zM1595.0 357.7h3.0v38.2h-3.0zM1595.0 397.8h3.0v38.2h-3.0zM1595.0 478.0h3.0v38.2h-3.0zM1595.0 558.2h3.0v38.2h-3.0zM1595.0 598.3h3.0v38.2h-3.0zM1595.0 678.5h3.0v38.2h-3.0zM1595.0 798.8h3.0v38.2h-3.0zM1595.0 879.0h3.0v38.2h-3.0zM1595.0 959.2h3.0v38.2h-3.0zM1595.0 1039.4h3.0v38.2h-3.0zM1595.0 1159.7h3.0v38.2h-3.0zM1611.0 397.8h7.4v38.2h-7.4zM1611.0 437.9h7.4v38.2h-7.4zM1611.0 518.1h7.4v38.2h-7.4zM1611.0 1039.4h7.4v38.2h-7.4zM1620.3 357.7h8.7v38.2h-8.7zM1620.3 397.8h8.7v38.2h-8.7zM1620.3 437.9h8.7v38.2h-8.7zM1620.3 518.1h8.7v38.2h-8.7zM1620.3 1039.4h8.7v38.2h-8.7zM1646.0 357.7h9.5v38.2h-9.5zM1646.0 397.8h9.5v38.2h-9.5zM1664.7 357.7h35.9v38.2h-35.9zM1664.7 397.8h35.9v38.2h-35.9zM1708.0 357.7h9.6v38.2h-9.6zM1708.0 397.8h9.6v38.2h-9.6zM1719.0 357.7h29.0v38.2h-29.0zM1719.0 397.8h29.0v38.2h-29.0zM1723.6 1360.2h3.6v38.2h-3.6zM1755.4 357.7h28.6v38.2h-28.6zM1755.4 397.8h28.6v38.2h-28.6zM1811.0 478.0h29.5v38.2h-29.5zM1811.0 518.1h27.0v38.2h-27.0zM1850.7 357.7h2.7v38.2h-2.7zM1850.7 397.8h2.7v38.2h-2.7zM1859.6 357.7h2.4v38.2h-2.4zM1867.5 397.8h4.4v38.2h-4.4zM1879.0 478.0h15.0v38.2h-15.0zM1879.0 518.1h15.0v38.2h-15.0zM1901.6 478.0h1.7v38.2h-1.7zM1901.6 518.1h1.7v38.2h-1.7zM1901.6 1079.5h1.7v38.2h-1.7zM1904.6 1039.4h2.1v38.2h-2.1zM1904.6 1079.5h2.1v38.2h-2.1zM1912.6 357.7h13.0v38.2h-13.0zM1912.6 1039.4h13.0v38.2h-13.0zM1912.6 1079.5h13.0v38.2h-13.0zM1946.6 478.0h35.2v38.2h-35.2zM1946.6 518.1h35.2v38.2h-35.2zM1955.1 1280.0h4.3v38.2h-4.3zM1961.9 1280.0h7.5v38.2h-7.5zM1989.4 357.7h3.2v38.2h-3.2zM1994.8 357.7h2.7v38.2h-2.7zM2000.0 357.7h3.0v38.2h-3.0zM2008.0 1280.0h5.9v38.2h-5.9zM2020.4 1280.0h5.6v38.2h-5.6zM2027.3 1280.0h5.3v38.2h-5.3zM2036.5 1239.9h3.0v38.2h-3.0zM2051.7 1199.8h4.5v38.2h-4.5zM2092.0 1320.1h4.0v38.2h-4.0zM2092.0 1360.2h4.0v38.2h-4.0zM2097.2 1320.1h4.9v38.2h-4.9zM2108.7 478.0h12.9v38.2h-12.9zM2108.7 518.1h12.9v38.2h-12.9zM2131.0 478.0h61.0v38.2h-61.0zM2131.0 518.1h61.0v38.2h-61.0zM2138.3 1199.8h4.4v38.2h-4.4zM2149.4 1199.8h3.7v38.2h-3.7zM2168.2 1199.8h5.4v38.2h-5.4zM2175.0 1239.9h7.9v38.2h-7.9zM2185.0 1239.9h2.8v38.2h-2.8zM2213.4 1159.7h4.0v38.2h-4.0zM2218.6 357.7h12.2v38.2h-12.2zM2218.6 1360.2h12.2v38.2h-12.2zM2218.6 1400.3h12.2v38.2h-12.2zM2218.6 1440.4h12.2v26.6h-12.2zM2255.0 357.7h10.0v38.2h-10.0zM2269.0 1159.7h2.4v38.2h-2.4zM2269.0 1199.8h2.4v38.2h-2.4zM2313.0 638.4h3.0v38.2h-3.0zM2313.0 678.5h3.0v38.2h-3.0zM2313.0 718.6h3.0v38.2h-3.0zM2327.0 357.7h9.0v38.2h-9.0zM2448.0 478.0h15.0v38.2h-15.0zM2448.0 518.1h15.0v38.2h-15.0zM2457.0 1320.1h3.0v38.2h-3.0zM2461.5 1280.0h1.5v38.2h-1.5zM2471.0 478.0h31.0v38.2h-31.0zM2471.0 518.1h18.0v38.2h-18.0zM2491.0 518.1h11.0v38.2h-11.0zM2491.0 558.2h11.0v38.2h-11.0zM2471.0 1280.0h7.4v38.2h-7.4zM2488.5 1239.9h2.9v38.2h-2.9zM2488.5 1280.0h2.9v38.2h-2.9zM2507.0 357.7h17.0v38.2h-17.0zM2514.2 879.0h2.3v38.2h-2.3zM2514.2 959.2h2.3v38.2h-2.3zM2514.2 1360.2h2.3v38.2h-2.3zM2514.2 1400.3h2.3v38.2h-2.3zM2531.0 478.0h45.0v38.2h-45.0zM2536.0 518.1h34.0v38.2h-34.0zM2550.3 1360.2h5.1v38.2h-5.1zM2603.5 478.0h21.5v38.2h-21.5zM2603.5 518.1h21.5v38.2h-21.5zM2609.2 1360.2h4.1v38.2h-4.1zM2615.2 1360.2h3.2v38.2h-3.2zM2650.1 478.0h7.0v38.2h-7.0zM2650.1 558.2h7.0v38.2h-7.0zM2659.4 478.0h2.7v38.2h-2.7zM2659.4 518.1h2.7v38.2h-2.7zM2659.4 558.2h2.7v38.2h-2.7zM2673.5 558.2h7.8v38.2h-7.8zM2683.6 478.0h5.0v38.2h-5.0zM2683.6 518.1h5.0v38.2h-5.0zM2683.6 1199.8h5.0v38.2h-5.0zM2728.1 638.4h6.6v38.2h-6.6zM2770.2 638.4h3.8v38.2h-3.8z"/><rect x="732" y="317" width="2" height="1150" fill="#d9d6dd" opacity="0.75"/><rect x="1024" y="317" width="2" height="1150" fill="#d9d6dd" opacity="0.75"/><rect x="1316" y="317" width="2" height="1150" fill="#d9d6dd" opacity="0.75"/><rect x="1608" y="317" width="2" height="1150" fill="#d9d6dd" opacity="0.75"/><rect x="1900" y="317" width="2" height="1150" fill="#d9d6dd" opacity="0.75"/><rect x="2192" y="317" width="2" height="1150" fill="#d9d6dd" opacity="0.75"/><rect x="2484" y="317" width="2" height="1150" fill="#d9d6dd" opacity="0.75"/><rect x="2776" y="317" width="2" height="1150" fill="#d9d6dd" opacity="0.75"/><g font-family="Liberation Mono, monospace" font-size="22.5" letter-spacing="-0.9" fill="#1d1a2e"><text x="450.5" y="346.1">(root)</text><text x="681.5" y="346.1">(root)</text><text x="1342.5" y="346.1">(root)</text><text x="464.5" y="386.2">p…s</text><text x="464.5" y="426.3">r…s</text><text x="489.9" y="466.4">…</text><text x="489.9" y="506.5">…</text><text x="489.9" y="546.6">…</text><text x="489.9" y="586.7">…</text><text x="489.9" y="626.8">…</text><text x="489.9" y="666.9">…</text><text x="489.9" y="707.0">…</text><text x="489.9" y="747.1">…</text><text x="489.9" y="787.2">…</text><text x="489.9" y="827.3">…</text><text x="489.9" y="867.4">…</text><text x="489.9" y="907.5">…</text><text x="489.9" y="947.6">…</text><text x="489.9" y="987.7">…</text><text x="489.9" y="1027.8">…</text><text x="526.5" y="386.2">…</text><text x="526.5" y="426.3">…</text><text x="526.5" y="466.4">…</text><text x="526.5" y="506.5">…</text><text x="526.5" y="546.6">…</text><text x="526.5" y="586.7">…</text><text x="526.5" y="626.8">…</text><text x="571.5" y="386.2">p…</text><text x="571.5" y="426.3">r…</text><text x="571.5" y="466.4">j…</text><text x="571.5" y="506.5">r…</text><text x="571.5" y="546.6">_…</text><text x="571.5" y="586.7">_…</text><text x="571.5" y="626.8">O…</text><text x="571.5" y="666.9">r…</text><text x="571.5" y="707.0">r…</text><text x="571.5" y="747.1">_…</text><text x="571.5" y="787.2">_…</text><text x="571.5" y="827.3">O…</text><text x="578.5" y="867.4">r…</text><text x="578.5" y="907.5">r…</text><text x="578.5" y="947.6">r…</text><text x="578.5" y="987.7">_…</text><text x="578.5" y="1027.8">_…</text><text x="578.5" y="1067.9">O…</text><text x="632.5" y="386.2">p…</text><text x="632.5" y="426.3">r…</text><text x="632.5" y="466.4">j…</text><text x="632.5" y="506.5">r…</text><text x="632.5" y="546.6">_…</text><text x="632.5" y="586.7">_…</text><text x="632.5" y="626.8">…</text><text x="632.5" y="666.9">…</text><text x="632.5" y="707.0">…</text><text x="632.5" y="747.1">…</text><text x="632.5" y="787.2">…</text><text x="632.5" y="827.3">…</text><text x="632.5" y="867.4">…</text><text x="632.5" y="907.5">…</text><text x="632.5" y="947.6">…</text><text x="632.5" y="987.7">…</text><text x="632.5" y="1027.8">…</text><text x="632.5" y="1067.9">…</text><text x="683.5" y="386.2">…</text><text x="683.5" y="426.3">…</text><text x="683.5" y="466.4">…</text><text x="683.5" y="506.5">…</text><text x="683.5" y="546.6">…</text><text x="683.5" y="586.7">…</text><text x="716.5" y="386.2">p…s</text><text x="716.5" y="426.3">r…s</text><text x="716.5" y="466.4">j…r</text><text x="716.5" y="506.5">r…e</text><text x="716.5" y="546.6">_…e</text><text x="716.5" y="586.7">_…e</text><text x="716.5" y="626.8">O…></text><text x="716.5" y="666.9">r…</text><text x="716.5" y="707.0">r…</text><text x="716.5" y="747.1">_…</text><text x="716.5" y="787.2">_…</text><text x="716.5" y="827.3">O…</text><text x="716.5" y="867.4">…</text><text x="716.5" y="907.5">…</text><text x="716.5" y="947.6">…</text><text x="716.5" y="987.7">…</text><text x="716.5" y="1027.8">…</text><text x="778.5" y="386.2">p…</text><text x="778.5" y="426.3">r…</text><text x="778.5" y="466.4">j…</text><text x="778.5" y="506.5">r…</text><text x="778.5" y="546.6">_…</text><text x="778.5" y="586.7">_…</text><text x="778.5" y="626.8">O…</text><text x="825.5" y="386.2">p…s</text><text x="825.5" y="426.3">r…s</text><text x="825.5" y="466.4">j…r</text><text x="825.5" y="506.5">r…e</text><text x="825.5" y="546.6">_…e</text><text x="825.5" y="586.7">_…e</text><text x="825.5" y="626.8">O…></text><text x="825.5" y="666.9">r…k</text><text x="825.5" y="707.0">r…e</text><text x="825.5" y="747.1">_…e</text><text x="825.5" y="787.2">_…e</text><text x="825.5" y="827.3">O…></text><text x="825.5" y="867.4">…</text><text x="825.5" y="907.5">…</text><text x="825.5" y="947.6">…</text><text x="825.5" y="987.7">…</text><text x="825.5" y="1027.8">…</text><text x="890.5" y="386.2">p…</text><text x="890.5" y="426.3">r…</text><text x="890.5" y="466.4">j…</text><text x="890.5" y="506.5">r…</text><text x="890.5" y="546.6">_…</text><text x="890.5" y="586.7">_…</text><text x="890.5" y="626.8">O…</text><text x="890.5" y="666.9">r…</text><text x="890.5" y="707.0">r…</text><text x="890.5" y="747.1">_…</text><text x="890.5" y="787.2">_…</text><text x="890.5" y="827.3">O…</text><text x="890.5" y="867.4">r…</text><text x="890.5" y="907.5">r…</text><text x="890.5" y="947.6">_…</text><text x="890.5" y="987.7">_…</text><text x="890.5" y="1027.8">O…</text><text x="890.5" y="1067.9">r…</text><text x="890.5" y="1108.0">r…</text><text x="890.5" y="1148.1">_…</text><text x="890.5" y="1188.2">_…</text><text x="890.5" y="1228.3">O…</text><text x="890.5" y="1268.4">r…</text><text x="890.5" y="1308.5">r…</text><text x="890.5" y="1348.6">_…</text><text x="890.5" y="1388.7">_…</text><text x="890.5" y="1428.8">O…</text><text x="890.5" y="1468.9">r…</text><text x="949.5" y="386.2">pr…s</text><text x="949.5" y="426.3">ru…s</text><text x="949.5" y="466.4">je…r</text><text x="949.5" y="506.5">re…e</text><text x="949.5" y="546.6">_l…e</text><text x="949.5" y="586.7">_e…e</text><text x="949.5" y="626.8">Ob…></text><text x="949.5" y="666.9">re…k</text><text x="949.5" y="707.0">re…e</text><text x="949.5" y="747.1">_l…e</text><text x="949.5" y="787.2">_e…e</text><text x="949.5" y="827.3">Ob…></text><text x="949.5" y="867.4">re…k</text><text x="949.5" y="907.5">re…e</text><text x="949.5" y="947.6">_l…e</text><text x="949.5" y="987.7">_e…e</text><text x="949.5" y="1027.8">Ob…></text><text x="949.5" y="1067.9">re…k</text><text x="949.5" y="1108.0">re…e</text><text x="949.5" y="1148.1">_l…e</text><text x="949.5" y="1188.2">_e…e</text><text x="949.5" y="1228.3">Ob…></text><text x="949.5" y="1268.4">re…k</text><text x="949.5" y="1308.5">re…e</text><text x="949.5" y="1348.6">_l…e</text><text x="949.5" y="1388.7">_e…e</text><text x="949.5" y="1428.8">Ob…></text><text x="949.5" y="1468.9">re…k</text><text x="1025.5" y="386.2">…</text><text x="1025.5" y="426.3">…</text><text x="1025.5" y="466.4">…</text><text x="1025.5" y="506.5">…</text><text x="1025.5" y="546.6">…</text><text x="1025.5" y="586.7">…</text><text x="1025.5" y="626.8">…</text><text x="1025.5" y="666.9">…</text><text x="1025.5" y="707.0">…</text><text x="1025.5" y="747.1">…</text><text x="1025.5" y="787.2">…</text><text x="1025.5" y="827.3">…</text><text x="1025.5" y="867.4">…</text><text x="1025.5" y="907.5">…</text><text x="1025.5" y="947.6">…</text><text x="1025.5" y="987.7">…</text><text x="1025.5" y="1027.8">…</text><text x="1025.5" y="1067.9">…</text><text x="1025.5" y="1108.0">…</text><text x="1025.5" y="1148.1">…</text><text x="1025.5" y="1188.2">…</text><text x="1025.5" y="1228.3">…</text><text x="1025.5" y="1268.4">…</text><text x="1025.5" y="1308.5">…</text><text x="1025.5" y="1348.6">…</text><text x="1025.5" y="1388.7">…</text><text x="1025.5" y="1428.8">…</text><text x="1025.5" y="1468.9">…</text><text x="1067.5" y="386.2">p…</text><text x="1067.5" y="426.3">r…</text><text x="1067.5" y="466.4">j…</text><text x="1067.5" y="506.5">r…</text><text x="1067.5" y="546.6">_…</text><text x="1067.5" y="586.7">_…</text><text x="1067.5" y="626.8">O…</text><text x="1067.5" y="666.9">r…</text><text x="1067.5" y="707.0">r…</text><text x="1067.5" y="747.1">_…</text><text x="1067.5" y="787.2">_…</text><text x="1067.5" y="827.3">O…</text><text x="1067.5" y="867.4">r…</text><text x="1067.5" y="907.5">r…</text><text x="1067.5" y="947.6">_…</text><text x="1067.5" y="987.7">_…</text><text x="1067.5" y="1027.8">O…</text><text x="1067.5" y="1067.9">r…</text><text x="1067.5" y="1108.0">r…</text><text x="1067.5" y="1148.1">_…</text><text x="1067.5" y="1188.2">_…</text><text x="1067.5" y="1228.3">O…</text><text x="1067.5" y="1268.4">r…</text><text x="1067.5" y="1308.5">r…</text><text x="1067.5" y="1348.6">_…</text><text x="1067.5" y="1388.7">_…</text><text x="1067.5" y="1428.8">O…</text><text x="1067.5" y="1468.9">r…</text><text x="1112.5" y="386.2">p…</text><text x="1112.5" y="426.3">r…</text><text x="1112.5" y="466.4">j…</text><text x="1112.5" y="506.5">r…</text><text x="1112.5" y="546.6">_…</text><text x="1112.5" y="586.7">_…</text><text x="1112.5" y="626.8">O…</text><text x="1112.5" y="666.9">r…</text><text x="1112.5" y="707.0">r…</text><text x="1112.5" y="747.1">_…</text><text x="1112.5" y="787.2">_…</text><text x="1112.5" y="827.3">O…</text><text x="1112.5" y="867.4">r…</text><text x="1112.5" y="907.5">r…</text><text x="1112.5" y="947.6">_…</text><text x="1112.5" y="987.7">_…</text><text x="1112.5" y="1027.8">O…</text><text x="1112.5" y="1067.9">r…</text><text x="1112.5" y="1108.0">r…</text><text x="1112.5" y="1148.1">_…</text><text x="1112.5" y="1188.2">_…</text><text x="1112.5" y="1228.3">O…</text><text x="1112.5" y="1268.4">r…</text><text x="1112.5" y="1308.5">r…</text><text x="1112.5" y="1348.6">_…</text><text x="1112.5" y="1388.7">_…</text><text x="1112.5" y="1428.8">O…</text><text x="1112.5" y="1468.9">r…</text><text x="1167.5" y="386.2">…</text><text x="1167.5" y="426.3">…</text><text x="1167.5" y="466.4">…</text><text x="1167.5" y="506.5">…</text><text x="1167.5" y="546.6">…</text><text x="1167.5" y="586.7">…</text><text x="1167.5" y="626.8">…</text><text x="1250.5" y="386.2">p…</text><text x="1250.5" y="426.3">r…</text><text x="1250.5" y="466.4">j…</text><text x="1250.5" y="506.5">r…</text><text x="1250.5" y="546.6">_…</text><text x="1250.5" y="586.7">_…</text><text x="1250.5" y="626.8">O…</text><text x="1250.5" y="666.9">r…</text><text x="1250.5" y="707.0">r…</text><text x="1250.5" y="747.1">_…</text><text x="1250.5" y="787.2">_…</text><text x="1250.5" y="827.3">O…</text><text x="1250.5" y="867.4">r…</text><text x="1250.5" y="907.5">r…</text><text x="1250.5" y="947.6">_…</text><text x="1250.5" y="987.7">_…</text><text x="1250.5" y="1027.8">O…</text><text x="1384.5" y="386.2">p…s</text><text x="1384.5" y="426.3">r…s</text><text x="1449.5" y="386.2">p…s</text><text x="1449.5" y="426.3">r…s</text><text x="1449.5" y="466.4">_…</text><text x="1449.5" y="506.5">c…</text><text x="1449.5" y="546.6">P…</text><text x="1449.5" y="586.7">u…</text><text x="1449.5" y="626.8">r…</text><text x="1449.5" y="666.9">r…</text><text x="1449.5" y="707.0">a…</text><text x="1449.5" y="747.1">O…</text><text x="1449.5" y="787.2">f…</text><text x="1449.5" y="827.3">r…</text><text x="1449.5" y="867.4">u…</text><text x="1449.5" y="907.5">f…</text><text x="1449.5" y="947.6">f…</text><text x="1449.5" y="987.7">f…</text><text x="1449.5" y="1027.8">r…</text><text x="1449.5" y="1067.9">u…</text><text x="1449.5" y="1108.0">u…</text><text x="1449.5" y="1148.1">p…</text><text x="1449.5" y="1188.2">…</text><text x="1449.5" y="1228.3">…</text><text x="1449.5" y="1268.4">…</text><text x="1511.5" y="386.2">…</text><text x="1511.5" y="426.3">…</text><text x="1511.5" y="466.4">…</text><text x="1511.5" y="506.5">…</text><text x="1511.5" y="546.6">…</text><text x="1511.5" y="586.7">…</text><text x="1511.5" y="626.8">…</text><text x="1511.5" y="666.9">…</text><text x="1511.5" y="707.0">…</text><text x="1511.5" y="747.1">…</text><text x="1511.5" y="787.2">…</text><text x="1511.5" y="827.3">…</text><text x="1511.5" y="867.4">…</text><text x="1566.5" y="386.2">…</text><text x="1566.5" y="426.3">…</text><text x="1566.5" y="466.4">…</text><text x="1566.5" y="506.5">…</text><text x="1566.5" y="546.6">…</text><text x="1566.5" y="586.7">…</text><text x="1566.5" y="626.8">…</text><text x="1566.5" y="666.9">…</text><text x="1673.2" y="386.2">…</text><text x="1673.2" y="426.3">…</text><text x="1673.2" y="466.4">…</text><text x="1673.2" y="506.5">…</text><text x="1673.2" y="546.6">…</text><text x="1673.2" y="586.7">…</text><text x="1673.2" y="626.8">…</text><text x="1673.2" y="666.9">…</text><text x="1673.2" y="707.0">…</text><text x="1673.2" y="747.1">…</text><text x="1673.2" y="787.2">…</text><text x="1673.2" y="827.3">…</text><text x="1673.2" y="867.4">…</text><text x="1673.2" y="907.5">…</text><text x="1727.5" y="386.2">…</text><text x="1727.5" y="426.3">…</text><text x="1727.5" y="466.4">…</text><text x="1727.5" y="506.5">…</text><text x="1727.5" y="546.6">…</text><text x="1727.5" y="586.7">…</text><text x="1727.5" y="626.8">…</text><text x="1727.5" y="666.9">…</text><text x="1727.5" y="707.0">…</text><text x="1763.9" y="386.2">…</text><text x="1763.9" y="426.3">…</text><text x="1763.9" y="466.4">…</text><text x="1763.9" y="506.5">…</text><text x="1763.9" y="546.6">…</text><text x="1763.9" y="586.7">…</text><text x="1763.9" y="626.8">…</text><text x="1763.9" y="666.9">…</text><text x="1763.9" y="707.0">…</text><text x="1763.9" y="747.1">…</text><text x="1763.9" y="787.2">…</text><text x="1763.9" y="827.3">…</text><text x="1763.9" y="867.4">…</text><text x="1763.9" y="907.5">…</text><text x="1819.5" y="386.2">…</text><text x="1819.5" y="426.3">…</text><text x="1819.5" y="466.4">…</text><text x="1819.5" y="506.5">…</text><text x="1955.1" y="386.2">…</text><text x="1955.1" y="426.3">…</text><text x="1955.1" y="466.4">…</text><text x="1955.1" y="506.5">…</text><text x="1955.1" y="546.6">…</text><text x="1955.1" y="586.7">…</text><text x="1955.1" y="626.8">…</text><text x="1955.1" y="666.9">…</text><text x="2015.5" y="386.2">…</text><text x="2015.5" y="426.3">…</text><text x="2139.5" y="386.2">_c…t</text><text x="2139.5" y="426.3">ca…n</text><text x="2139.5" y="466.4">Pr…d</text><text x="2139.5" y="506.5">un…n</text><text x="2139.5" y="546.6">re…r</text><text x="2139.5" y="586.7">re…r</text><text x="2139.5" y="626.8">act</text><text x="2139.5" y="666.9">ba…1</text><text x="2167.1" y="707.0">…</text><text x="2167.1" y="747.1">…</text><text x="2167.1" y="787.2">…</text><text x="2167.1" y="827.3">…</text><text x="2167.1" y="867.4">…</text><text x="2167.1" y="907.5">…</text><text x="2167.1" y="947.6">…</text><text x="2167.1" y="987.7">…</text><text x="2167.1" y="1027.8">…</text><text x="2282.9" y="386.2">…</text><text x="2363.5" y="386.2">(g…r)</text><text x="2479.5" y="386.2">…</text><text x="2479.5" y="426.3">…</text><text x="2479.5" y="466.4">…</text><text x="2479.5" y="506.5">…</text><text x="2539.5" y="386.2">…</text><text x="2539.5" y="426.3">…</text><text x="2539.5" y="466.4">…</text><text x="2539.5" y="506.5">…</text><text x="2544.5" y="546.6">…</text><text x="2539.5" y="586.7">…</text><text x="2539.5" y="626.8">…</text><text x="2539.5" y="666.9">…</text><text x="2539.5" y="707.0">…</text></g></svg><div class="abs" style="left:0;top:1467px;width:2436px;height:2px;background:#e0dce5"></div><div class="t" style="left:16.4px;top:1485.6px;font-size:24.1px;font-weight:700;color:#3e3446;">Bottom Up</div><div class="abs" style="left:16px;top:1524px;width:124px;height:4px;background:#6c5fc7;border-radius:2px"></div><div class="t" style="left:158.6px;top:1485.5px;font-size:24.2px;font-weight:400;color:#3e3446;">Top Down</div><div class="t" style="left:301.3px;top:1486.1px;font-size:23.5px;font-weight:700;color:#3e3446;">All Frames</div><div class="abs" style="left:301px;top:1524px;width:121px;height:4px;background:#6c5fc7;border-radius:2px"></div><div class="t" style="left:443.5px;top:1484.9px;font-size:24.9px;font-weight:400;color:#3e3446;">Application Frames</div><div class="t" style="left:681.6px;top:1485.3px;font-size:24.5px;font-weight:400;color:#3e3446;">System Frames</div><div class="abs" style="left:890.5px;top:1488px;width:23px;height:23px;border:2px solid #d4cedb;border-radius:4px;background:#fff"></div><div class="t" style="left:922.0px;top:1486.0px;font-size:24.8px;font-weight:400;color:#3e3446;">Collapse recursion</div><svg class="abs" style="left:2234px;top:1484px" width="26" height="26" viewBox="0 0 26 26" fill="none" stroke="#80708f" stroke-width="2"><path d="M13 2 V16 M7 10 L13 16 L19 10"/><path d="M2 17 V24 H24 V17"/></svg><svg class="abs" style="left:2298.0px;top:1484px" width="26" height="26" viewBox="0 0 26 26" fill="none" stroke="#80708f" stroke-width="2"><rect x="2" y="2" width="22" height="22" rx="3"/><path d="M9 3 V23"/></svg><svg class="abs" style="left:2338.6px;top:1484px" width="26" height="26" viewBox="0 0 26 26" fill="none" stroke="#80708f" stroke-width="2"><rect x="2" y="2" width="22" height="22" rx="3"/><path d="M3 16 H23"/></svg><svg class="abs" style="left:2379.0px;top:1484px" width="26" height="26" viewBox="0 0 26 26" fill="none" stroke="#80708f" stroke-width="2"><rect x="2" y="2" width="22" height="22" rx="3"/><path d="M17 3 V23"/></svg><div class="abs" style="left:0;top:1527px;width:2436px;height:2px;background:#e0dce5"></div><div class="abs" style="left:0;top:1579px;width:1916px;height:350px;background:#fff"></div><div class="abs" style="left:1918px;top:1579px;width:520px;height:350px;background:#fff"></div><div class="t" style="left:16.4px;top:1541.0px;font-size:24.3px;font-weight:400;color:#3e3446;">Self Time</div><svg class="abs" style="left:125.0px;top:1543.0px" width="20" height="20" viewBox="0 0 20 20" fill="none" stroke="#a396b0" stroke-width="1.6"><circle cx="10" cy="10" r="8.6"/><path d="M7.3 7.6 A2.8 2.8 0 1 1 10.6 10.3 Q10 10.7 10 12"/><circle cx="10" cy="14.6" r="0.6" fill="#a396b0"/></svg><div class="t" style="left:344.3px;top:1540.7px;font-size:24.7px;font-weight:400;color:#3e3446;">Total Time</div><svg class="abs" style="left:464.0px;top:1543.0px" width="20" height="20" viewBox="0 0 20 20" fill="none" stroke="#a396b0" stroke-width="1.6"><circle cx="10" cy="10" r="8.6"/><path d="M7.3 7.6 A2.8 2.8 0 1 1 10.6 10.3 Q10 10.7 10 12"/><circle cx="10" cy="14.6" r="0.6" fill="#a396b0"/></svg><svg class="abs" style="left:618px;top:1548px" width="20" height="20" viewBox="0 0 20 20" fill="none" stroke="#3e3446" stroke-width="2.2" stroke-linecap="round"><path d="M10 2 V17 M4 11 L10 17 L16 11"/></svg><div class="t" style="left:672.0px;top:1541.1px;font-size:24.2px;font-weight:400;color:#3e3446;">Frame</div><div class="abs" style="left:0;top:1577px;width:2436px;height:2px;background:#e0dce5"></div><div class="abs" style="left:326px;top:1529px;width:2px;height:400px;background:#e0dce5"></div><div class="abs" style="left:654px;top:1529px;width:2px;height:400px;background:#e0dce5"></div><div class="abs" style="left:1916px;top:1529px;width:2px;height:400px;background:#e0dce5"></div><div class="t" style="right:2234.0px;top:1592.5px;font-size:25.2px;font-weight:400;color:#3e3446">305.53ms</div><div class="t" style="right:2127.3px;top:1594.3px;font-size:23px;font-weight:400;color:#80708f">3.7%</div><div class="t" style="right:1941.3px;top:1592.5px;font-size:25.2px;font-weight:400;color:#3e3446">305.53ms</div><div class="t" style="right:1843.0px;top:1594.3px;font-size:23px;font-weight:400;color:#80708f">3.7%</div><div class="abs" style="left:314.0px;top:1579px;width:12px;height:48px;background:#fff6dc"></div><div class="abs" style="left:314.0px;top:1625px;width:12px;height:2px;background:#f5b72a"></div><div class="abs" style="left:591.0px;top:1579px;width:12px;height:48px;background:#fff6dc"></div><div class="abs" style="left:591.0px;top:1625px;width:12px;height:2px;background:#f5b72a"></div><svg class="abs" style="left:615px;top:1591.3px" width="26" height="26" viewBox="0 0 26 26" fill="none" stroke="#80708f" stroke-width="1.9" stroke-linejoin="round"><circle cx="13" cy="13" r="3.3"/><path d="M13.00 1.50 L13.45 1.52 L13.90 1.60 L14.33 1.80 L14.68 2.38 L14.87 3.58 L14.97 4.79 L15.15 5.37 L15.40 5.62 L15.67 5.77 L15.95 5.89 L16.23 6.00 L16.52 6.09 L16.87 6.09 L17.41 5.80 L18.33 5.02 L19.32 4.30 L19.98 4.15 L20.43 4.30 L20.80 4.56 L21.13 4.87 L21.44 5.20 L21.70 5.57 L21.85 6.02 L21.70 6.68 L20.98 7.67 L20.20 8.59 L19.91 9.13 L19.91 9.48 L20.00 9.77 L20.11 10.05 L20.23 10.33 L20.38 10.60 L20.63 10.85 L21.21 11.03 L22.42 11.13 L23.62 11.32 L24.20 11.67 L24.40 12.10 L24.48 12.55 L24.50 13.00 L24.48 13.45 L24.40 13.90 L24.20 14.33 L23.62 14.68 L22.42 14.87 L21.21 14.97 L20.63 15.15 L20.38 15.40 L20.23 15.67 L20.11 15.95 L20.00 16.23 L19.91 16.52 L19.91 16.87 L20.20 17.41 L20.98 18.33 L21.70 19.32 L21.85 19.98 L21.70 20.43 L21.44 20.80 L21.13 21.13 L20.80 21.44 L20.43 21.70 L19.98 21.85 L19.32 21.70 L18.33 20.98 L17.41 20.20 L16.87 19.91 L16.52 19.91 L16.23 20.00 L15.95 20.11 L15.67 20.23 L15.40 20.38 L15.15 20.63 L14.97 21.21 L14.87 22.42 L14.68 23.62 L14.33 24.20 L13.90 24.40 L13.45 24.48 L13.00 24.50 L12.55 24.48 L12.10 24.40 L11.67 24.20 L11.32 23.62 L11.13 22.42 L11.03 21.21 L10.85 20.63 L10.60 20.38 L10.33 20.23 L10.05 20.11 L9.77 20.00 L9.48 19.91 L9.13 19.91 L8.59 20.20 L7.67 20.98 L6.68 21.70 L6.02 21.85 L5.57 21.70 L5.20 21.44 L4.87 21.13 L4.56 20.80 L4.30 20.43 L4.15 19.98 L4.30 19.32 L5.02 18.33 L5.80 17.41 L6.09 16.87 L6.09 16.52 L6.00 16.23 L5.89 15.95 L5.77 15.67 L5.62 15.40 L5.37 15.15 L4.79 14.97 L3.58 14.87 L2.38 14.68 L1.80 14.33 L1.60 13.90 L1.52 13.45 L1.50 13.00 L1.52 12.55 L1.60 12.10 L1.80 11.67 L2.38 11.32 L3.58 11.13 L4.79 11.03 L5.37 10.85 L5.62 10.60 L5.77 10.33 L5.89 10.05 L6.00 9.77 L6.09 9.48 L6.09 9.13 L5.80 8.59 L5.02 7.67 L4.30 6.68 L4.15 6.02 L4.30 5.57 L4.56 5.20 L4.87 4.87 L5.20 4.56 L5.57 4.30 L6.02 4.15 L6.68 4.30 L7.67 5.02 L8.59 5.80 L9.13 6.09 L9.48 6.09 L9.77 6.00 L10.05 5.89 L10.33 5.77 L10.60 5.62 L10.85 5.37 L11.03 4.79 L11.13 3.58 L11.32 2.38 L11.67 1.80 L12.10 1.60 L12.55 1.52 L13.00 1.50Z"/></svg><div class="abs" style="left:672px;top:1592.3px;width:24px;height:24px;border-radius:4px;background:#edcdd1"></div><svg class="abs" style="left:706px;top:1596.3px" width="14" height="16" viewBox="0 0 14 16" fill="none" stroke="#3e3446" stroke-width="2.2" stroke-linecap="round"><path d="M5 2.6 L10.6 8 L5 13.4"/></svg><div class="t" style="left:731.6px;top:1592.4px;font-size:25.3px;font-weight:400;color:#3e3446;">(garbage collector)</div><div class="t" style="right:2234.0px;top:1640.4px;font-size:25.2px;font-weight:400;color:#3e3446">132.88ms</div><div class="t" style="right:2127.3px;top:1642.2px;font-size:23px;font-weight:400;color:#80708f">1.6%</div><div class="t" style="right:1941.3px;top:1640.4px;font-size:25.2px;font-weight:400;color:#3e3446">132.88ms</div><div class="t" style="right:1843.0px;top:1642.2px;font-size:23px;font-weight:400;color:#80708f">1.6%</div><div class="abs" style="left:321.0px;top:1627px;width:5px;height:48px;background:#fff6dc"></div><div class="abs" style="left:321.0px;top:1673px;width:5px;height:2px;background:#f5b72a"></div><div class="abs" style="left:598.0px;top:1627px;width:5px;height:48px;background:#fff6dc"></div><div class="abs" style="left:598.0px;top:1673px;width:5px;height:2px;background:#f5b72a"></div><svg class="abs" style="left:615px;top:1639.2px" width="26" height="26" viewBox="0 0 26 26" fill="none" stroke="#80708f" stroke-width="1.9" stroke-linejoin="round"><circle cx="13" cy="13" r="3.3"/><path d="M13.00 1.50 L13.45 1.52 L13.90 1.60 L14.33 1.80 L14.68 2.38 L14.87 3.58 L14.97 4.79 L15.15 5.37 L15.40 5.62 L15.67 5.77 L15.95 5.89 L16.23 6.00 L16.52 6.09 L16.87 6.09 L17.41 5.80 L18.33 5.02 L19.32 4.30 L19.98 4.15 L20.43 4.30 L20.80 4.56 L21.13 4.87 L21.44 5.20 L21.70 5.57 L21.85 6.02 L21.70 6.68 L20.98 7.67 L20.20 8.59 L19.91 9.13 L19.91 9.48 L20.00 9.77 L20.11 10.05 L20.23 10.33 L20.38 10.60 L20.63 10.85 L21.21 11.03 L22.42 11.13 L23.62 11.32 L24.20 11.67 L24.40 12.10 L24.48 12.55 L24.50 13.00 L24.48 13.45 L24.40 13.90 L24.20 14.33 L23.62 14.68 L22.42 14.87 L21.21 14.97 L20.63 15.15 L20.38 15.40 L20.23 15.67 L20.11 15.95 L20.00 16.23 L19.91 16.52 L19.91 16.87 L20.20 17.41 L20.98 18.33 L21.70 19.32 L21.85 19.98 L21.70 20.43 L21.44 20.80 L21.13 21.13 L20.80 21.44 L20.43 21.70 L19.98 21.85 L19.32 21.70 L18.33 20.98 L17.41 20.20 L16.87 19.91 L16.52 19.91 L16.23 20.00 L15.95 20.11 L15.67 20.23 L15.40 20.38 L15.15 20.63 L14.97 21.21 L14.87 22.42 L14.68 23.62 L14.33 24.20 L13.90 24.40 L13.45 24.48 L13.00 24.50 L12.55 24.48 L12.10 24.40 L11.67 24.20 L11.32 23.62 L11.13 22.42 L11.03 21.21 L10.85 20.63 L10.60 20.38 L10.33 20.23 L10.05 20.11 L9.77 20.00 L9.48 19.91 L9.13 19.91 L8.59 20.20 L7.67 20.98 L6.68 21.70 L6.02 21.85 L5.57 21.70 L5.20 21.44 L4.87 21.13 L4.56 20.80 L4.30 20.43 L4.15 19.98 L4.30 19.32 L5.02 18.33 L5.80 17.41 L6.09 16.87 L6.09 16.52 L6.00 16.23 L5.89 15.95 L5.77 15.67 L5.62 15.40 L5.37 15.15 L4.79 14.97 L3.58 14.87 L2.38 14.68 L1.80 14.33 L1.60 13.90 L1.52 13.45 L1.50 13.00 L1.52 12.55 L1.60 12.10 L1.80 11.67 L2.38 11.32 L3.58 11.13 L4.79 11.03 L5.37 10.85 L5.62 10.60 L5.77 10.33 L5.89 10.05 L6.00 9.77 L6.09 9.48 L6.09 9.13 L5.80 8.59 L5.02 7.67 L4.30 6.68 L4.15 6.02 L4.30 5.57 L4.56 5.20 L4.87 4.87 L5.20 4.56 L5.57 4.30 L6.02 4.15 L6.68 4.30 L7.67 5.02 L8.59 5.80 L9.13 6.09 L9.48 6.09 L9.77 6.00 L10.05 5.89 L10.33 5.77 L10.60 5.62 L10.85 5.37 L11.03 4.79 L11.13 3.58 L11.32 2.38 L11.67 1.80 L12.10 1.60 L12.55 1.52 L13.00 1.50Z"/></svg><div class="abs" style="left:672px;top:1640.2px;width:24px;height:24px;border-radius:4px;background:#edcdd1"></div><svg class="abs" style="left:706px;top:1644.2px" width="14" height="16" viewBox="0 0 14 16" fill="none" stroke="#3e3446" stroke-width="2.2" stroke-linecap="round"><path d="M5 2.6 L10.6 8 L5 13.4"/></svg><div class="t" style="left:731.6px;top:1640.3px;font-size:25.3px;font-weight:400;color:#3e3446;">(garbage collector)</div><div class="t" style="right:2234.0px;top:1688.3px;font-size:25.2px;font-weight:400;color:#3e3446">73.33ms</div><div class="t" style="right:2127.3px;top:1690.1px;font-size:23px;font-weight:400;color:#80708f">0.9%</div><div class="t" style="right:1941.3px;top:1688.3px;font-size:25.2px;font-weight:400;color:#3e3446">73.33ms</div><div class="t" style="right:1843.0px;top:1690.1px;font-size:23px;font-weight:400;color:#80708f">0.9%</div><div class="abs" style="left:323.0px;top:1675px;width:3px;height:48px;background:#fff6dc"></div><div class="abs" style="left:323.0px;top:1721px;width:3px;height:2px;background:#f5b72a"></div><div class="abs" style="left:600.0px;top:1675px;width:3px;height:48px;background:#fff6dc"></div><div class="abs" style="left:600.0px;top:1721px;width:3px;height:2px;background:#f5b72a"></div><svg class="abs" style="left:615px;top:1687.1px" width="26" height="26" viewBox="0 0 26 26" fill="none" stroke="#80708f" stroke-width="1.9" stroke-linejoin="round"><circle cx="13" cy="13" r="3.3"/><path d="M13.00 1.50 L13.45 1.52 L13.90 1.60 L14.33 1.80 L14.68 2.38 L14.87 3.58 L14.97 4.79 L15.15 5.37 L15.40 5.62 L15.67 5.77 L15.95 5.89 L16.23 6.00 L16.52 6.09 L16.87 6.09 L17.41 5.80 L18.33 5.02 L19.32 4.30 L19.98 4.15 L20.43 4.30 L20.80 4.56 L21.13 4.87 L21.44 5.20 L21.70 5.57 L21.85 6.02 L21.70 6.68 L20.98 7.67 L20.20 8.59 L19.91 9.13 L19.91 9.48 L20.00 9.77 L20.11 10.05 L20.23 10.33 L20.38 10.60 L20.63 10.85 L21.21 11.03 L22.42 11.13 L23.62 11.32 L24.20 11.67 L24.40 12.10 L24.48 12.55 L24.50 13.00 L24.48 13.45 L24.40 13.90 L24.20 14.33 L23.62 14.68 L22.42 14.87 L21.21 14.97 L20.63 15.15 L20.38 15.40 L20.23 15.67 L20.11 15.95 L20.00 16.23 L19.91 16.52 L19.91 16.87 L20.20 17.41 L20.98 18.33 L21.70 19.32 L21.85 19.98 L21.70 20.43 L21.44 20.80 L21.13 21.13 L20.80 21.44 L20.43 21.70 L19.98 21.85 L19.32 21.70 L18.33 20.98 L17.41 20.20 L16.87 19.91 L16.52 19.91 L16.23 20.00 L15.95 20.11 L15.67 20.23 L15.40 20.38 L15.15 20.63 L14.97 21.21 L14.87 22.42 L14.68 23.62 L14.33 24.20 L13.90 24.40 L13.45 24.48 L13.00 24.50 L12.55 24.48 L12.10 24.40 L11.67 24.20 L11.32 23.62 L11.13 22.42 L11.03 21.21 L10.85 20.63 L10.60 20.38 L10.33 20.23 L10.05 20.11 L9.77 20.00 L9.48 19.91 L9.13 19.91 L8.59 20.20 L7.67 20.98 L6.68 21.70 L6.02 21.85 L5.57 21.70 L5.20 21.44 L4.87 21.13 L4.56 20.80 L4.30 20.43 L4.15 19.98 L4.30 19.32 L5.02 18.33 L5.80 17.41 L6.09 16.87 L6.09 16.52 L6.00 16.23 L5.89 15.95 L5.77 15.67 L5.62 15.40 L5.37 15.15 L4.79 14.97 L3.58 14.87 L2.38 14.68 L1.80 14.33 L1.60 13.90 L1.52 13.45 L1.50 13.00 L1.52 12.55 L1.60 12.10 L1.80 11.67 L2.38 11.32 L3.58 11.13 L4.79 11.03 L5.37 10.85 L5.62 10.60 L5.77 10.33 L5.89 10.05 L6.00 9.77 L6.09 9.48 L6.09 9.13 L5.80 8.59 L5.02 7.67 L4.30 6.68 L4.15 6.02 L4.30 5.57 L4.56 5.20 L4.87 4.87 L5.20 4.56 L5.57 4.30 L6.02 4.15 L6.68 4.30 L7.67 5.02 L8.59 5.80 L9.13 6.09 L9.48 6.09 L9.77 6.00 L10.05 5.89 L10.33 5.77 L10.60 5.62 L10.85 5.37 L11.03 4.79 L11.13 3.58 L11.32 2.38 L11.67 1.80 L12.10 1.60 L12.55 1.52 L13.00 1.50Z"/></svg><div class="abs" style="left:672px;top:1688.1px;width:24px;height:24px;border-radius:4px;background:#edcdd1"></div><svg class="abs" style="left:706px;top:1692.1px" width="14" height="16" viewBox="0 0 14 16" fill="none" stroke="#3e3446" stroke-width="2.2" stroke-linecap="round"><path d="M5 2.6 L10.6 8 L5 13.4"/></svg><div class="t" style="left:731.6px;top:1688.2px;font-size:25.3px;font-weight:400;color:#3e3446;">(garbage collector)</div><div class="t" style="right:2234.0px;top:1736.2px;font-size:25.2px;font-weight:400;color:#3e3446">54.75ms</div><div class="t" style="right:2127.3px;top:1738.0px;font-size:23px;font-weight:400;color:#80708f">0.7%</div><div class="t" style="right:1941.3px;top:1736.2px;font-size:25.2px;font-weight:400;color:#3e3446">54.75ms</div><div class="t" style="right:1843.0px;top:1738.0px;font-size:23px;font-weight:400;color:#80708f">0.7%</div><div class="abs" style="left:324.0px;top:1723px;width:2px;height:48px;background:#fff6dc"></div><div class="abs" style="left:324.0px;top:1769px;width:2px;height:2px;background:#f5b72a"></div><div class="abs" style="left:601.0px;top:1723px;width:2px;height:48px;background:#fff6dc"></div><div class="abs" style="left:601.0px;top:1769px;width:2px;height:2px;background:#f5b72a"></div><svg class="abs" style="left:615px;top:1735.0px" width="26" height="26" viewBox="0 0 26 26" fill="none" stroke="#80708f" stroke-width="1.9" stroke-linejoin="round"><circle cx="13" cy="13" r="3.3"/><path d="M13.00 1.50 L13.45 1.52 L13.90 1.60 L14.33 1.80 L14.68 2.38 L14.87 3.58 L14.97 4.79 L15.15 5.37 L15.40 5.62 L15.67 5.77 L15.95 5.89 L16.23 6.00 L16.52 6.09 L16.87 6.09 L17.41 5.80 L18.33 5.02 L19.32 4.30 L19.98 4.15 L20.43 4.30 L20.80 4.56 L21.13 4.87 L21.44 5.20 L21.70 5.57 L21.85 6.02 L21.70 6.68 L20.98 7.67 L20.20 8.59 L19.91 9.13 L19.91 9.48 L20.00 9.77 L20.11 10.05 L20.23 10.33 L20.38 10.60 L20.63 10.85 L21.21 11.03 L22.42 11.13 L23.62 11.32 L24.20 11.67 L24.40 12.10 L24.48 12.55 L24.50 13.00 L24.48 13.45 L24.40 13.90 L24.20 14.33 L23.62 14.68 L22.42 14.87 L21.21 14.97 L20.63 15.15 L20.38 15.40 L20.23 15.67 L20.11 15.95 L20.00 16.23 L19.91 16.52 L19.91 16.87 L20.20 17.41 L20.98 18.33 L21.70 19.32 L21.85 19.98 L21.70 20.43 L21.44 20.80 L21.13 21.13 L20.80 21.44 L20.43 21.70 L19.98 21.85 L19.32 21.70 L18.33 20.98 L17.41 20.20 L16.87 19.91 L16.52 19.91 L16.23 20.00 L15.95 20.11 L15.67 20.23 L15.40 20.38 L15.15 20.63 L14.97 21.21 L14.87 22.42 L14.68 23.62 L14.33 24.20 L13.90 24.40 L13.45 24.48 L13.00 24.50 L12.55 24.48 L12.10 24.40 L11.67 24.20 L11.32 23.62 L11.13 22.42 L11.03 21.21 L10.85 20.63 L10.60 20.38 L10.33 20.23 L10.05 20.11 L9.77 20.00 L9.48 19.91 L9.13 19.91 L8.59 20.20 L7.67 20.98 L6.68 21.70 L6.02 21.85 L5.57 21.70 L5.20 21.44 L4.87 21.13 L4.56 20.80 L4.30 20.43 L4.15 19.98 L4.30 19.32 L5.02 18.33 L5.80 17.41 L6.09 16.87 L6.09 16.52 L6.00 16.23 L5.89 15.95 L5.77 15.67 L5.62 15.40 L5.37 15.15 L4.79 14.97 L3.58 14.87 L2.38 14.68 L1.80 14.33 L1.60 13.90 L1.52 13.45 L1.50 13.00 L1.52 12.55 L1.60 12.10 L1.80 11.67 L2.38 11.32 L3.58 11.13 L4.79 11.03 L5.37 10.85 L5.62 10.60 L5.77 10.33 L5.89 10.05 L6.00 9.77 L6.09 9.48 L6.09 9.13 L5.80 8.59 L5.02 7.67 L4.30 6.68 L4.15 6.02 L4.30 5.57 L4.56 5.20 L4.87 4.87 L5.20 4.56 L5.57 4.30 L6.02 4.15 L6.68 4.30 L7.67 5.02 L8.59 5.80 L9.13 6.09 L9.48 6.09 L9.77 6.00 L10.05 5.89 L10.33 5.77 L10.60 5.62 L10.85 5.37 L11.03 4.79 L11.13 3.58 L11.32 2.38 L11.67 1.80 L12.10 1.60 L12.55 1.52 L13.00 1.50Z"/></svg><div class="abs" style="left:672px;top:1736.0px;width:24px;height:24px;border-radius:4px;background:#edcdd1"></div><svg class="abs" style="left:706px;top:1740.0px" width="14" height="16" viewBox="0 0 14 16" fill="none" stroke="#3e3446" stroke-width="2.2" stroke-linecap="round"><path d="M5 2.6 L10.6 8 L5 13.4"/></svg><div class="t" style="left:731.6px;top:1736.1px;font-size:25.3px;font-weight:400;color:#3e3446;">(garbage collector)</div><div class="t" style="right:2234.0px;top:1784.1px;font-size:25.2px;font-weight:400;color:#3e3446">47.32ms</div><div class="t" style="right:2127.3px;top:1785.9px;font-size:23px;font-weight:400;color:#80708f">0.6%</div><div class="t" style="right:1941.3px;top:1784.1px;font-size:25.2px;font-weight:400;color:#3e3446">47.32ms</div><div class="t" style="right:1843.0px;top:1785.9px;font-size:23px;font-weight:400;color:#80708f">0.6%</div><div class="abs" style="left:324.4px;top:1771px;width:1.6px;height:48px;background:#fff6dc"></div><div class="abs" style="left:324.4px;top:1817px;width:1.6px;height:2px;background:#f5b72a"></div><div class="abs" style="left:601.4px;top:1771px;width:1.6px;height:48px;background:#fff6dc"></div><div class="abs" style="left:601.4px;top:1817px;width:1.6px;height:2px;background:#f5b72a"></div><svg class="abs" style="left:615px;top:1782.9px" width="26" height="26" viewBox="0 0 26 26" fill="none" stroke="#80708f" stroke-width="1.9" stroke-linejoin="round"><circle cx="13" cy="13" r="3.3"/><path d="M13.00 1.50 L13.45 1.52 L13.90 1.60 L14.33 1.80 L14.68 2.38 L14.87 3.58 L14.97 4.79 L15.15 5.37 L15.40 5.62 L15.67 5.77 L15.95 5.89 L16.23 6.00 L16.52 6.09 L16.87 6.09 L17.41 5.80 L18.33 5.02 L19.32 4.30 L19.98 4.15 L20.43 4.30 L20.80 4.56 L21.13 4.87 L21.44 5.20 L21.70 5.57 L21.85 6.02 L21.70 6.68 L20.98 7.67 L20.20 8.59 L19.91 9.13 L19.91 9.48 L20.00 9.77 L20.11 10.05 L20.23 10.33 L20.38 10.60 L20.63 10.85 L21.21 11.03 L22.42 11.13 L23.62 11.32 L24.20 11.67 L24.40 12.10 L24.48 12.55 L24.50 13.00 L24.48 13.45 L24.40 13.90 L24.20 14.33 L23.62 14.68 L22.42 14.87 L21.21 14.97 L20.63 15.15 L20.38 15.40 L20.23 15.67 L20.11 15.95 L20.00 16.23 L19.91 16.52 L19.91 16.87 L20.20 17.41 L20.98 18.33 L21.70 19.32 L21.85 19.98 L21.70 20.43 L21.44 20.80 L21.13 21.13 L20.80 21.44 L20.43 21.70 L19.98 21.85 L19.32 21.70 L18.33 20.98 L17.41 20.20 L16.87 19.91 L16.52 19.91 L16.23 20.00 L15.95 20.11 L15.67 20.23 L15.40 20.38 L15.15 20.63 L14.97 21.21 L14.87 22.42 L14.68 23.62 L14.33 24.20 L13.90 24.40 L13.45 24.48 L13.00 24.50 L12.55 24.48 L12.10 24.40 L11.67 24.20 L11.32 23.62 L11.13 22.42 L11.03 21.21 L10.85 20.63 L10.60 20.38 L10.33 20.23 L10.05 20.11 L9.77 20.00 L9.48 19.91 L9.13 19.91 L8.59 20.20 L7.67 20.98 L6.68 21.70 L6.02 21.85 L5.57 21.70 L5.20 21.44 L4.87 21.13 L4.56 20.80 L4.30 20.43 L4.15 19.98 L4.30 19.32 L5.02 18.33 L5.80 17.41 L6.09 16.87 L6.09 16.52 L6.00 16.23 L5.89 15.95 L5.77 15.67 L5.62 15.40 L5.37 15.15 L4.79 14.97 L3.58 14.87 L2.38 14.68 L1.80 14.33 L1.60 13.90 L1.52 13.45 L1.50 13.00 L1.52 12.55 L1.60 12.10 L1.80 11.67 L2.38 11.32 L3.58 11.13 L4.79 11.03 L5.37 10.85 L5.62 10.60 L5.77 10.33 L5.89 10.05 L6.00 9.77 L6.09 9.48 L6.09 9.13 L5.80 8.59 L5.02 7.67 L4.30 6.68 L4.15 6.02 L4.30 5.57 L4.56 5.20 L4.87 4.87 L5.20 4.56 L5.57 4.30 L6.02 4.15 L6.68 4.30 L7.67 5.02 L8.59 5.80 L9.13 6.09 L9.48 6.09 L9.77 6.00 L10.05 5.89 L10.33 5.77 L10.60 5.62 L10.85 5.37 L11.03 4.79 L11.13 3.58 L11.32 2.38 L11.67 1.80 L12.10 1.60 L12.55 1.52 L13.00 1.50Z"/></svg><div class="abs" style="left:672px;top:1783.9px;width:24px;height:24px;border-radius:4px;background:#edcdd1"></div><svg class="abs" style="left:706px;top:1787.9px" width="14" height="16" viewBox="0 0 14 16" fill="none" stroke="#3e3446" stroke-width="2.2" stroke-linecap="round"><path d="M5 2.6 L10.6 8 L5 13.4"/></svg><div class="t" style="left:731.6px;top:1784.0px;font-size:25.3px;font-weight:400;color:#3e3446;">(garbage collector)</div><div class="t" style="right:2234.0px;top:1832.0px;font-size:25.2px;font-weight:400;color:#3e3446">44.32ms</div><div class="t" style="right:2127.3px;top:1833.8px;font-size:23px;font-weight:400;color:#80708f">0.5%</div><div class="t" style="right:1941.3px;top:1832.0px;font-size:25.2px;font-weight:400;color:#3e3446">44.32ms</div><div class="t" style="right:1843.0px;top:1833.8px;font-size:23px;font-weight:400;color:#80708f">0.5%</div><div class="abs" style="left:324.6px;top:1819px;width:1.4px;height:48px;background:#fff6dc"></div><div class="abs" style="left:324.6px;top:1865px;width:1.4px;height:2px;background:#f5b72a"></div><div class="abs" style="left:601.6px;top:1819px;width:1.4px;height:48px;background:#fff6dc"></div><div class="abs" style="left:601.6px;top:1865px;width:1.4px;height:2px;background:#f5b72a"></div><svg class="abs" style="left:615px;top:1830.8px" width="26" height="26" viewBox="0 0 26 26" fill="none" stroke="#80708f" stroke-width="1.9" stroke-linejoin="round"><circle cx="13" cy="13" r="3.3"/><path d="M13.00 1.50 L13.45 1.52 L13.90 1.60 L14.33 1.80 L14.68 2.38 L14.87 3.58 L14.97 4.79 L15.15 5.37 L15.40 5.62 L15.67 5.77 L15.95 5.89 L16.23 6.00 L16.52 6.09 L16.87 6.09 L17.41 5.80 L18.33 5.02 L19.32 4.30 L19.98 4.15 L20.43 4.30 L20.80 4.56 L21.13 4.87 L21.44 5.20 L21.70 5.57 L21.85 6.02 L21.70 6.68 L20.98 7.67 L20.20 8.59 L19.91 9.13 L19.91 9.48 L20.00 9.77 L20.11 10.05 L20.23 10.33 L20.38 10.60 L20.63 10.85 L21.21 11.03 L22.42 11.13 L23.62 11.32 L24.20 11.67 L24.40 12.10 L24.48 12.55 L24.50 13.00 L24.48 13.45 L24.40 13.90 L24.20 14.33 L23.62 14.68 L22.42 14.87 L21.21 14.97 L20.63 15.15 L20.38 15.40 L20.23 15.67 L20.11 15.95 L20.00 16.23 L19.91 16.52 L19.91 16.87 L20.20 17.41 L20.98 18.33 L21.70 19.32 L21.85 19.98 L21.70 20.43 L21.44 20.80 L21.13 21.13 L20.80 21.44 L20.43 21.70 L19.98 21.85 L19.32 21.70 L18.33 20.98 L17.41 20.20 L16.87 19.91 L16.52 19.91 L16.23 20.00 L15.95 20.11 L15.67 20.23 L15.40 20.38 L15.15 20.63 L14.97 21.21 L14.87 22.42 L14.68 23.62 L14.33 24.20 L13.90 24.40 L13.45 24.48 L13.00 24.50 L12.55 24.48 L12.10 24.40 L11.67 24.20 L11.32 23.62 L11.13 22.42 L11.03 21.21 L10.85 20.63 L10.60 20.38 L10.33 20.23 L10.05 20.11 L9.77 20.00 L9.48 19.91 L9.13 19.91 L8.59 20.20 L7.67 20.98 L6.68 21.70 L6.02 21.85 L5.57 21.70 L5.20 21.44 L4.87 21.13 L4.56 20.80 L4.30 20.43 L4.15 19.98 L4.30 19.32 L5.02 18.33 L5.80 17.41 L6.09 16.87 L6.09 16.52 L6.00 16.23 L5.89 15.95 L5.77 15.67 L5.62 15.40 L5.37 15.15 L4.79 14.97 L3.58 14.87 L2.38 14.68 L1.80 14.33 L1.60 13.90 L1.52 13.45 L1.50 13.00 L1.52 12.55 L1.60 12.10 L1.80 11.67 L2.38 11.32 L3.58 11.13 L4.79 11.03 L5.37 10.85 L5.62 10.60 L5.77 10.33 L5.89 10.05 L6.00 9.77 L6.09 9.48 L6.09 9.13 L5.80 8.59 L5.02 7.67 L4.30 6.68 L4.15 6.02 L4.30 5.57 L4.56 5.20 L4.87 4.87 L5.20 4.56 L5.57 4.30 L6.02 4.15 L6.68 4.30 L7.67 5.02 L8.59 5.80 L9.13 6.09 L9.48 6.09 L9.77 6.00 L10.05 5.89 L10.33 5.77 L10.60 5.62 L10.85 5.37 L11.03 4.79 L11.13 3.58 L11.32 2.38 L11.67 1.80 L12.10 1.60 L12.55 1.52 L13.00 1.50Z"/></svg><div class="abs" style="left:672px;top:1831.8px;width:24px;height:24px;border-radius:4px;background:#edcdd1"></div><svg class="abs" style="left:706px;top:1835.8px" width="14" height="16" viewBox="0 0 14 16" fill="none" stroke="#3e3446" stroke-width="2.2" stroke-linecap="round"><path d="M5 2.6 L10.6 8 L5 13.4"/></svg><div class="t" style="left:731.6px;top:1831.9px;font-size:25.3px;font-weight:400;color:#3e3446;">(garbage collector)</div><div class="t" style="right:2234.0px;top:1879.9px;font-size:25.2px;font-weight:400;color:#3e3446">39.62ms</div><div class="t" style="right:2127.3px;top:1881.7px;font-size:23px;font-weight:400;color:#80708f">0.5%</div><div class="t" style="right:1941.3px;top:1879.9px;font-size:25.2px;font-weight:400;color:#3e3446">39.62ms</div><div class="t" style="right:1843.0px;top:1881.7px;font-size:23px;font-weight:400;color:#80708f">0.5%</div><div class="abs" style="left:324.8px;top:1867px;width:1.2px;height:48px;background:#fff6dc"></div><div class="abs" style="left:324.8px;top:1913px;width:1.2px;height:2px;background:#f5b72a"></div><div class="abs" style="left:601.8px;top:1867px;width:1.2px;height:48px;background:#fff6dc"></div><div class="abs" style="left:601.8px;top:1913px;width:1.2px;height:2px;background:#f5b72a"></div><svg class="abs" style="left:615px;top:1878.7px" width="26" height="26" viewBox="0 0 26 26" fill="none" stroke="#80708f" stroke-width="1.9" stroke-linejoin="round"><circle cx="13" cy="13" r="3.3"/><path d="M13.00 1.50 L13.45 1.52 L13.90 1.60 L14.33 1.80 L14.68 2.38 L14.87 3.58 L14.97 4.79 L15.15 5.37 L15.40 5.62 L15.67 5.77 L15.95 5.89 L16.23 6.00 L16.52 6.09 L16.87 6.09 L17.41 5.80 L18.33 5.02 L19.32 4.30 L19.98 4.15 L20.43 4.30 L20.80 4.56 L21.13 4.87 L21.44 5.20 L21.70 5.57 L21.85 6.02 L21.70 6.68 L20.98 7.67 L20.20 8.59 L19.91 9.13 L19.91 9.48 L20.00 9.77 L20.11 10.05 L20.23 10.33 L20.38 10.60 L20.63 10.85 L21.21 11.03 L22.42 11.13 L23.62 11.32 L24.20 11.67 L24.40 12.10 L24.48 12.55 L24.50 13.00 L24.48 13.45 L24.40 13.90 L24.20 14.33 L23.62 14.68 L22.42 14.87 L21.21 14.97 L20.63 15.15 L20.38 15.40 L20.23 15.67 L20.11 15.95 L20.00 16.23 L19.91 16.52 L19.91 16.87 L20.20 17.41 L20.98 18.33 L21.70 19.32 L21.85 19.98 L21.70 20.43 L21.44 20.80 L21.13 21.13 L20.80 21.44 L20.43 21.70 L19.98 21.85 L19.32 21.70 L18.33 20.98 L17.41 20.20 L16.87 19.91 L16.52 19.91 L16.23 20.00 L15.95 20.11 L15.67 20.23 L15.40 20.38 L15.15 20.63 L14.97 21.21 L14.87 22.42 L14.68 23.62 L14.33 24.20 L13.90 24.40 L13.45 24.48 L13.00 24.50 L12.55 24.48 L12.10 24.40 L11.67 24.20 L11.32 23.62 L11.13 22.42 L11.03 21.21 L10.85 20.63 L10.60 20.38 L10.33 20.23 L10.05 20.11 L9.77 20.00 L9.48 19.91 L9.13 19.91 L8.59 20.20 L7.67 20.98 L6.68 21.70 L6.02 21.85 L5.57 21.70 L5.20 21.44 L4.87 21.13 L4.56 20.80 L4.30 20.43 L4.15 19.98 L4.30 19.32 L5.02 18.33 L5.80 17.41 L6.09 16.87 L6.09 16.52 L6.00 16.23 L5.89 15.95 L5.77 15.67 L5.62 15.40 L5.37 15.15 L4.79 14.97 L3.58 14.87 L2.38 14.68 L1.80 14.33 L1.60 13.90 L1.52 13.45 L1.50 13.00 L1.52 12.55 L1.60 12.10 L1.80 11.67 L2.38 11.32 L3.58 11.13 L4.79 11.03 L5.37 10.85 L5.62 10.60 L5.77 10.33 L5.89 10.05 L6.00 9.77 L6.09 9.48 L6.09 9.13 L5.80 8.59 L5.02 7.67 L4.30 6.68 L4.15 6.02 L4.30 5.57 L4.56 5.20 L4.87 4.87 L5.20 4.56 L5.57 4.30 L6.02 4.15 L6.68 4.30 L7.67 5.02 L8.59 5.80 L9.13 6.09 L9.48 6.09 L9.77 6.00 L10.05 5.89 L10.33 5.77 L10.60 5.62 L10.85 5.37 L11.03 4.79 L11.13 3.58 L11.32 2.38 L11.67 1.80 L12.10 1.60 L12.55 1.52 L13.00 1.50Z"/></svg><div class="abs" style="left:672px;top:1879.7px;width:24px;height:24px;border-radius:4px;background:#edcdd1"></div><svg class="abs" style="left:706px;top:1883.7px" width="14" height="16" viewBox="0 0 14 16" fill="none" stroke="#3e3446" stroke-width="2.2" stroke-linecap="round"><path d="M5 2.6 L10.6 8 L5 13.4"/></svg><div class="t" style="left:731.6px;top:1879.8px;font-size:25.3px;font-weight:400;color:#3e3446;">(garbage collector)</div><div class="t" style="left:1934.0px;top:1540.5px;font-size:24.2px;font-weight:700;color:#3e3446;">Transaction</div><div class="abs" style="left:1934px;top:1573px;width:136px;height:4px;background:#6c5fc7;border-radius:2px"></div><div class="t" style="left:2089.0px;top:1540.5px;font-size:24.2px;font-weight:400;color:#3e3446;">Device</div><div class="t" style="left:1934.0px;top:1595.4px;font-size:24.3px;font-weight:400;color:#3e3446;"><b style="font-weight:700">transaction:</b> <span style="font-size:26.2px">/static/app/views/performa…</span></div><div class="t" style="left:1934.0px;top:1628.9px;font-size:24.3px;font-weight:400;color:#3e3446;"><b style="font-weight:700">received at:</b> <span style="font-size:23.2px">Mar 22, 7:37 PM</span></div><div class="t" style="left:1934.0px;top:1662.4px;font-size:24.3px;font-weight:400;color:#3e3446;"><b style="font-weight:700">organization:</b> <span style="font-size:24px">ø</span></div><div class="t" style="left:1934.0px;top:1695.9px;font-size:24.3px;font-weight:400;color:#3e3446;"><b style="font-weight:700">project:</b> <span style="font-size:24px">ø</span></div><div class="t" style="left:1934.0px;top:1729.4px;font-size:24.3px;font-weight:400;color:#3e3446;"><b style="font-weight:700">platform:</b> <span style="font-size:24px"><span style="display:inline-block;width:24px;height:24px;vertical-align:-4px;margin-right:6px;border-radius:4px;background:#6ab04c;position:relative"><span style="position:absolute;left:5px;top:5px;width:14px;height:16px;border:2.5px solid #fff;border-bottom:none;border-radius:7px 7px 0 0"></span></span>node</span></div><div class="t" style="left:1934.0px;top:1762.9px;font-size:24.3px;font-weight:400;color:#3e3446;"><b style="font-weight:700">release:</b> <span style="font-size:24px">ø</span></div><div class="t" style="left:1934.0px;top:1796.4px;font-size:24.3px;font-weight:400;color:#3e3446;"><b style="font-weight:700">environment:</b> <span style="font-size:24px">ci</span></div><div class="t" style="left:1934.0px;top:1829.9px;font-size:24.3px;font-weight:400;color:#3e3446;"><b style="font-weight:700">duration:</b> <span style="font-size:24px">8.34s</span></div><div class="t" style="left:1934.0px;top:1863.4px;font-size:24.3px;font-weight:400;color:#3e3446;"><b style="font-weight:700">threads:</b> <span style="font-size:24px">1</span></div></div></body></html>
